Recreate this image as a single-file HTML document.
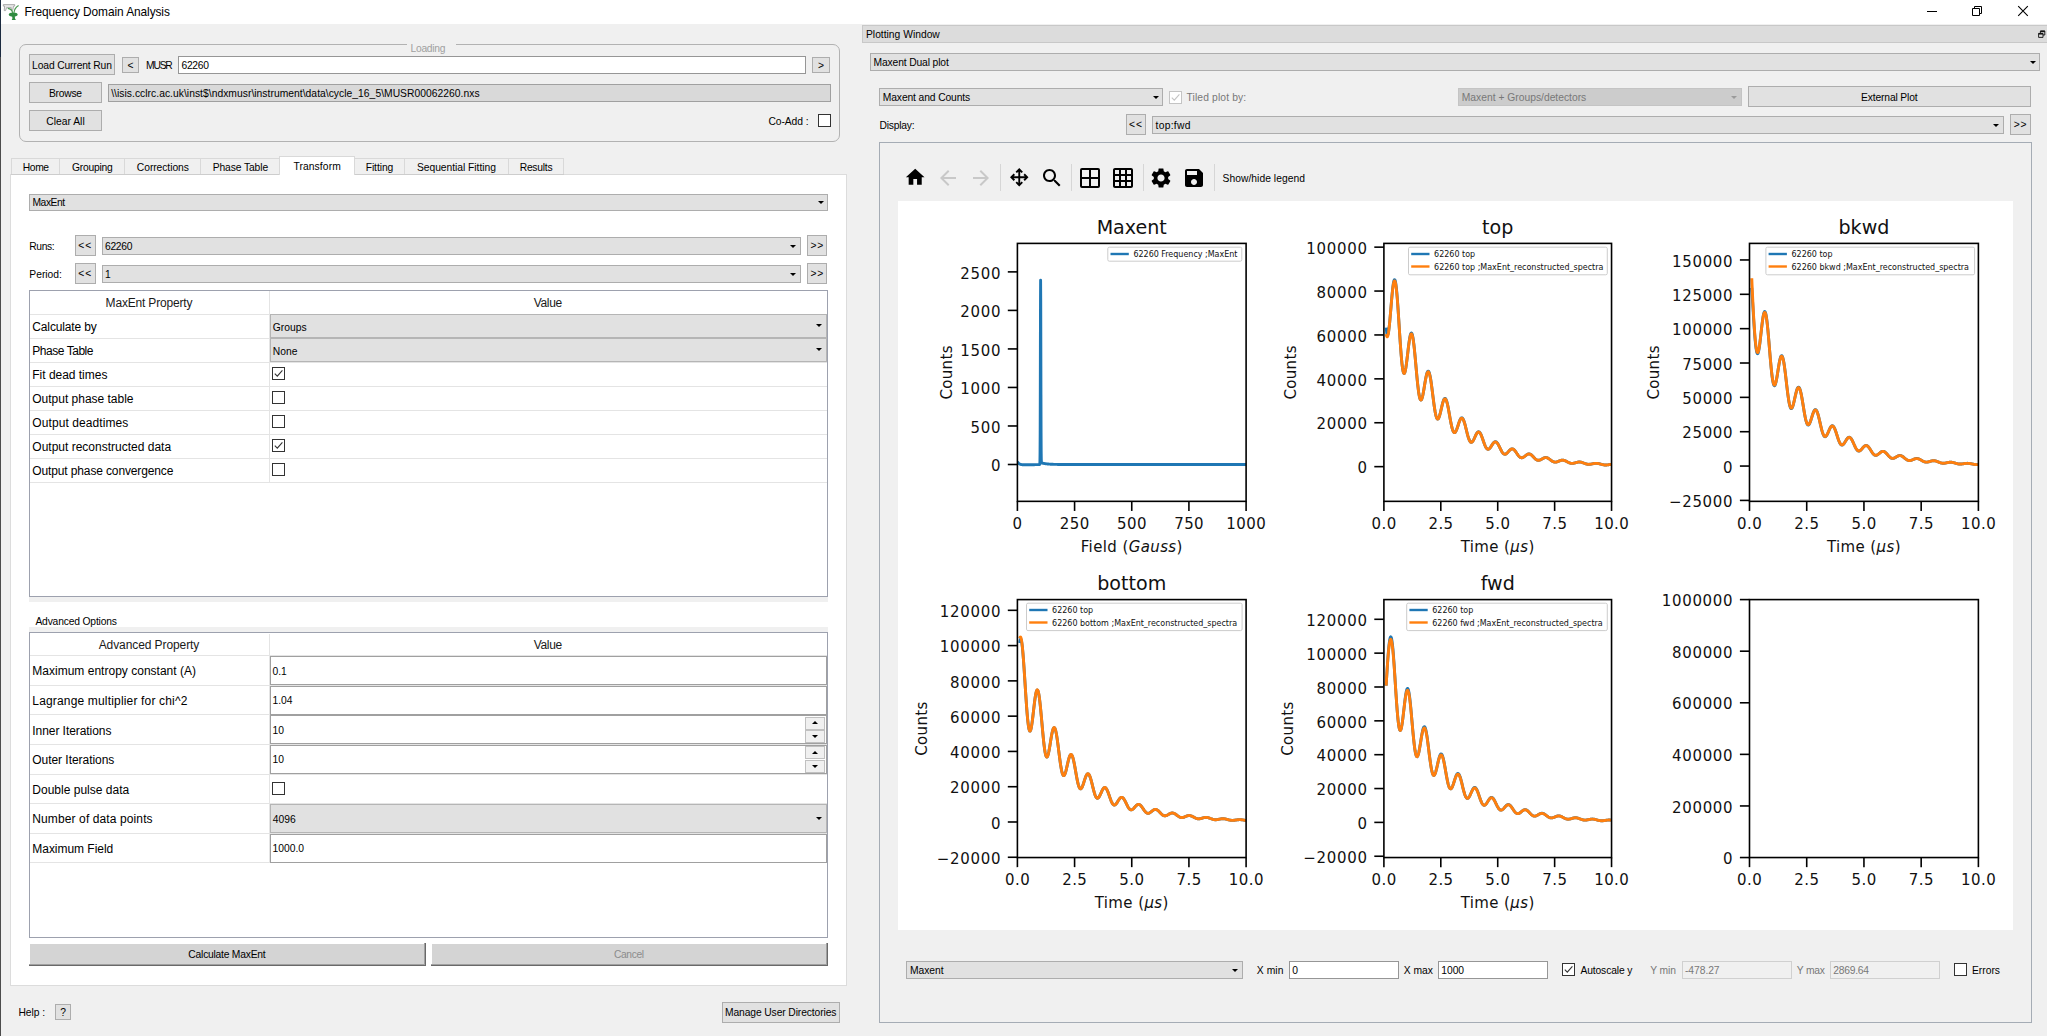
<!DOCTYPE html>
<html><head><meta charset="utf-8"><title>Frequency Domain Analysis</title><style>
html,body{margin:0;padding:0;}
body{width:2047px;height:1036px;background:#f0f0f0;position:relative;overflow:hidden;font-family:"Liberation Sans", sans-serif;font-size:10.3px;}
.b{position:absolute;box-sizing:border-box;display:block;}
.t{position:absolute;white-space:pre;}
svg text{font-family:"DejaVu Sans", sans-serif;}
</style></head>
<body>
<div class="b" style="left:0.00px;top:0.00px;width:2047.00px;height:24.00px;background:#fff;"></div>
<div class="t" style="top:2.00px;height:20px;line-height:20px;font-size:11.9px;color:#000;left:24.40px;letter-spacing:-0.079px;">Frequency Domain Analysis</div>
<svg class="b" style="left:0;top:0" width="24" height="24" viewBox="0 0 24 24">
<path d="M3.3 4.6H14.7V6.1H13.6L12.7 10.3H11.2V7.6H6.6L5.6 10.6H4.2L4.6 6.1H3.3Z" fill="#e6e6e6" stroke="#9c9c9c" stroke-width="0.8"/>
<path d="M14 12.8C14.2 9.4 15.8 7 18.6 5.4" stroke="#4c9a52" stroke-width="1.2" fill="none"/>
<path d="M12.7 12.8C12.2 10.4 10.4 8.8 7.8 8.4" stroke="#4c9a52" stroke-width="1.2" fill="none"/>
<ellipse cx="13.2" cy="14.6" rx="4.4" ry="2.1" fill="#2f8c40"/>
<path d="M12.1 15H14.7L15 18.6L15.9 20.1H11.7L12.4 18.6Z" fill="#2f8c40"/>
</svg>
<svg class="b" style="left:1920px;top:0" width="127" height="24" viewBox="0 0 127 24" fill="none" stroke="#000" stroke-width="1"><path d="M7 11.5H17"/><path d="M52.5 8.5H59.5V15.5H52.5Z"/><path d="M54.5 8.5V6.5H61.5V13.5H59.5"/><path d="M98.2 6.2L107.8 15.8M107.8 6.2L98.2 15.8" stroke-width="1.1"/></svg>
<div class="b" style="left:0.00px;top:0.00px;width:1.00px;height:57.00px;background:#1b2a3f;"></div>
<div class="b" style="left:0.00px;top:57.00px;width:1.00px;height:979.00px;background:#4c4c4c;"></div>
<div class="b" style="left:18.50px;top:44.00px;width:821.50px;height:97.50px;border:1px solid #b2b2b2;border-radius:7px;"></div>
<div class="b" style="left:406.60px;top:40.00px;width:49.00px;height:12.00px;background:#f0f0f0;"></div>
<div class="t" style="top:39.20px;height:20px;line-height:20px;font-size:10.3px;color:#a0a0a0;left:127.85px;width:600px;text-align:center;letter-spacing:-0.293px;">Loading</div>
<div class="b" style="left:29.00px;top:54.00px;width:86.00px;height:21.00px;background:#e1e1e1;border:1px solid #adadad;"></div>
<div class="t" style="top:56.20px;height:20px;line-height:20px;font-size:10.3px;color:#000;left:-228.07px;width:600px;text-align:center;letter-spacing:-0.138px;">Load Current Run</div>
<div class="b" style="left:122.00px;top:57.00px;width:17.00px;height:16.00px;background:#e1e1e1;border:1px solid #adadad;"></div>
<div class="t" style="top:55.90px;height:20px;line-height:20px;font-size:10.3px;color:#000;left:-169.50px;width:600px;text-align:center;">&lt;</div>
<div class="t" style="top:55.90px;height:20px;line-height:20px;font-size:10.3px;color:#000;left:146.00px;letter-spacing:-1.176px;">MUSR</div>
<div class="b" style="left:178.00px;top:56.00px;width:627.60px;height:18.00px;background:#fff;border:1px solid #969696;"></div>
<div class="t" style="top:55.90px;height:20px;line-height:20px;font-size:10.3px;color:#000;left:181.50px;letter-spacing:-0.310px;">62260</div>
<div class="b" style="left:812.00px;top:57.00px;width:18.00px;height:16.00px;background:#e1e1e1;border:1px solid #adadad;"></div>
<div class="t" style="top:55.90px;height:20px;line-height:20px;font-size:10.3px;color:#000;left:521.00px;width:600px;text-align:center;">&gt;</div>
<div class="b" style="left:29.00px;top:82.00px;width:73.00px;height:21.00px;background:#e1e1e1;border:1px solid #adadad;"></div>
<div class="t" style="top:84.20px;height:20px;line-height:20px;font-size:10.3px;color:#000;left:-234.62px;width:600px;text-align:center;letter-spacing:-0.249px;">Browse</div>
<div class="b" style="left:108.00px;top:84.00px;width:722.60px;height:18.00px;background:#d9d9d9;border:1px solid #a0a0a0;"></div>
<div class="t" style="top:83.90px;height:20px;line-height:20px;font-size:10.3px;color:#000;left:111.20px;letter-spacing:0.036px;">\\isis.cclrc.ac.uk\inst$\ndxmusr\instrument\data\cycle_16_5\MUSR00062260.nxs</div>
<div class="b" style="left:29.00px;top:110.00px;width:73.00px;height:21.00px;background:#e1e1e1;border:1px solid #adadad;"></div>
<div class="t" style="top:112.20px;height:20px;line-height:20px;font-size:10.3px;color:#000;left:-234.50px;width:600px;text-align:center;letter-spacing:0.006px;">Clear All</div>
<div class="t" style="top:111.90px;height:20px;line-height:20px;font-size:10.3px;color:#000;left:208.50px;width:600px;text-align:right;letter-spacing:-0.064px;">Co-Add :</div>
<div class="b" style="left:818.00px;top:114.00px;width:13.00px;height:13.00px;background:#fff;border:1px solid #333;"></div>
<div class="b" style="left:10.00px;top:174.00px;width:837.00px;height:811.50px;background:#fff;border:1px solid #dcdcdc;"></div>
<div class="b" style="left:11.40px;top:158.00px;width:49.00px;height:17.00px;background:#f0f0f0;border:1px solid #d9d9d9;"></div>
<div class="t" style="top:157.50px;height:20px;line-height:20px;font-size:10.3px;color:#000;left:-264.30px;width:600px;text-align:center;letter-spacing:-0.391px;">Home</div>
<div class="b" style="left:59.40px;top:158.00px;width:66.00px;height:17.00px;background:#f0f0f0;border:1px solid #d9d9d9;"></div>
<div class="t" style="top:157.50px;height:20px;line-height:20px;font-size:10.3px;color:#000;left:-207.71px;width:600px;text-align:center;letter-spacing:-0.224px;">Grouping</div>
<div class="b" style="left:124.40px;top:158.00px;width:76.90px;height:17.00px;background:#f0f0f0;border:1px solid #d9d9d9;"></div>
<div class="t" style="top:157.50px;height:20px;line-height:20px;font-size:10.3px;color:#000;left:-137.18px;width:600px;text-align:center;letter-spacing:-0.066px;">Corrections</div>
<div class="b" style="left:200.30px;top:158.00px;width:80.30px;height:17.00px;background:#f0f0f0;border:1px solid #d9d9d9;"></div>
<div class="t" style="top:157.50px;height:20px;line-height:20px;font-size:10.3px;color:#000;left:-59.61px;width:600px;text-align:center;letter-spacing:-0.110px;">Phase Table</div>
<div class="b" style="left:354.40px;top:158.00px;width:50.20px;height:17.00px;background:#f0f0f0;border:1px solid #d9d9d9;"></div>
<div class="t" style="top:157.50px;height:20px;line-height:20px;font-size:10.3px;color:#000;left:79.46px;width:600px;text-align:center;letter-spacing:-0.074px;">Fitting</div>
<div class="b" style="left:403.60px;top:158.00px;width:105.70px;height:17.00px;background:#f0f0f0;border:1px solid #d9d9d9;"></div>
<div class="t" style="top:157.50px;height:20px;line-height:20px;font-size:10.3px;color:#000;left:156.43px;width:600px;text-align:center;letter-spacing:-0.034px;">Sequential Fitting</div>
<div class="b" style="left:508.30px;top:158.00px;width:55.70px;height:17.00px;background:#f0f0f0;border:1px solid #d9d9d9;"></div>
<div class="t" style="top:157.50px;height:20px;line-height:20px;font-size:10.3px;color:#000;left:236.03px;width:600px;text-align:center;letter-spacing:-0.241px;">Results</div>
<div class="b" style="left:11.00px;top:174.00px;width:268.00px;height:1.00px;background:#cdcdcd;"></div>
<div class="b" style="left:355.00px;top:174.00px;width:209.00px;height:1.00px;background:#cdcdcd;"></div>
<div class="b" style="left:279.00px;top:156.00px;width:76.00px;height:19.00px;background:#fff;border:1px solid #d9d9d9;border-bottom:none;"></div>
<div class="t" style="top:156.50px;height:20px;line-height:20px;font-size:10.3px;color:#000;left:17.15px;width:600px;text-align:center;letter-spacing:0.107px;">Transform</div>
<div class="b" style="left:29.00px;top:194.00px;width:799.00px;height:17.00px;background:#e1e1e1;border:1px solid #adadad;"></div>
<div class="t" style="top:193.40px;height:20px;line-height:20px;font-size:10.3px;color:#000;left:32.50px;letter-spacing:-0.463px;">MaxEnt</div>
<svg class="b" style="left:817.50px;top:201.30px" width="6" height="3" viewBox="0 0 6 3"><path d="M0 0H6L3.0 3Z" fill="#000"/></svg>
<div class="t" style="top:236.90px;height:20px;line-height:20px;font-size:10.3px;color:#000;left:29.30px;letter-spacing:-0.376px;">Runs:</div>
<div class="b" style="left:75.00px;top:235.00px;width:20.50px;height:21.00px;background:#e1e1e1;border:1px solid #adadad;"></div>
<div class="t" style="top:236.40px;height:20px;line-height:20px;font-size:10.3px;color:#000;left:-214.75px;width:600px;text-align:center;letter-spacing:0.9px;">&lt;&lt;</div>
<div class="b" style="left:101.50px;top:237.00px;width:699.50px;height:17.50px;background:#e1e1e1;border:1px solid #adadad;"></div>
<div class="t" style="top:236.65px;height:20px;line-height:20px;font-size:10.3px;color:#000;left:105.00px;letter-spacing:-0.310px;">62260</div>
<svg class="b" style="left:790.40px;top:244.55px" width="6" height="3" viewBox="0 0 6 3"><path d="M0 0H6L3.0 3Z" fill="#000"/></svg>
<div class="b" style="left:807.30px;top:235.00px;width:20.10px;height:21.00px;background:#e1e1e1;border:1px solid #adadad;"></div>
<div class="t" style="top:236.40px;height:20px;line-height:20px;font-size:10.3px;color:#000;left:517.35px;width:600px;text-align:center;letter-spacing:0.9px;">&gt;&gt;</div>
<div class="t" style="top:264.90px;height:20px;line-height:20px;font-size:10.3px;color:#000;left:29.30px;">Period:</div>
<div class="b" style="left:75.00px;top:263.00px;width:20.50px;height:21.00px;background:#e1e1e1;border:1px solid #adadad;"></div>
<div class="t" style="top:264.40px;height:20px;line-height:20px;font-size:10.3px;color:#000;left:-214.75px;width:600px;text-align:center;letter-spacing:0.9px;">&lt;&lt;</div>
<div class="b" style="left:101.50px;top:265.00px;width:699.50px;height:17.50px;background:#e1e1e1;border:1px solid #adadad;"></div>
<div class="t" style="top:264.65px;height:20px;line-height:20px;font-size:10.3px;color:#000;left:105.00px;">1</div>
<svg class="b" style="left:790.40px;top:272.55px" width="6" height="3" viewBox="0 0 6 3"><path d="M0 0H6L3.0 3Z" fill="#000"/></svg>
<div class="b" style="left:807.30px;top:263.00px;width:20.10px;height:21.00px;background:#e1e1e1;border:1px solid #adadad;"></div>
<div class="t" style="top:264.40px;height:20px;line-height:20px;font-size:10.3px;color:#000;left:517.35px;width:600px;text-align:center;letter-spacing:0.9px;">&gt;&gt;</div>
<div class="b" style="left:29.00px;top:290.00px;width:799.00px;height:307.00px;background:#fff;border:1px solid #9da1ae;"></div>
<div class="t" style="top:293.20px;height:20px;line-height:20px;font-size:12px;color:#1a1a1a;left:-151.09px;width:600px;text-align:center;letter-spacing:-0.183px;">MaxEnt Property</div>
<div class="t" style="top:293.20px;height:20px;line-height:20px;font-size:12px;color:#1a1a1a;left:247.85px;width:600px;text-align:center;letter-spacing:-0.300px;">Value</div>
<div class="b" style="left:30.00px;top:313.50px;width:797.00px;height:1.00px;background:#e4e4e4;"></div>
<div class="b" style="left:30.00px;top:337.50px;width:797.00px;height:1.00px;background:#e4e4e4;"></div>
<div class="b" style="left:30.00px;top:361.50px;width:797.00px;height:1.00px;background:#e4e4e4;"></div>
<div class="b" style="left:30.00px;top:385.50px;width:797.00px;height:1.00px;background:#e4e4e4;"></div>
<div class="b" style="left:30.00px;top:409.50px;width:797.00px;height:1.00px;background:#e4e4e4;"></div>
<div class="b" style="left:30.00px;top:433.50px;width:797.00px;height:1.00px;background:#e4e4e4;"></div>
<div class="b" style="left:30.00px;top:457.50px;width:797.00px;height:1.00px;background:#e4e4e4;"></div>
<div class="b" style="left:30.00px;top:481.50px;width:797.00px;height:1.00px;background:#e4e4e4;"></div>
<div class="b" style="left:268.80px;top:291.00px;width:1.00px;height:191.00px;background:#e4e4e4;"></div>
<div class="t" style="top:316.70px;height:20px;line-height:20px;font-size:12px;color:#000;left:32.30px;letter-spacing:-0.139px;">Calculate by</div>
<div class="t" style="top:340.70px;height:20px;line-height:20px;font-size:12px;color:#000;left:32.30px;letter-spacing:-0.463px;">Phase Table</div>
<div class="t" style="top:364.70px;height:20px;line-height:20px;font-size:12px;color:#000;left:32.30px;letter-spacing:-0.020px;">Fit dead times</div>
<div class="t" style="top:388.70px;height:20px;line-height:20px;font-size:12px;color:#000;left:32.30px;letter-spacing:-0.012px;">Output phase table</div>
<div class="t" style="top:412.70px;height:20px;line-height:20px;font-size:12px;color:#000;left:32.30px;letter-spacing:0.079px;">Output deadtimes</div>
<div class="t" style="top:436.70px;height:20px;line-height:20px;font-size:12px;color:#000;left:32.30px;letter-spacing:0.003px;">Output reconstructed data</div>
<div class="t" style="top:460.70px;height:20px;line-height:20px;font-size:12px;color:#000;left:32.30px;letter-spacing:-0.130px;">Output phase convergence</div>
<div class="b" style="left:270.00px;top:314.00px;width:557.00px;height:24.00px;background:#e1e1e1;border:1px solid #b5b5b5;"></div>
<div class="t" style="top:317.50px;height:20px;line-height:20px;font-size:10.3px;color:#000;left:272.80px;">Groups</div>
<svg class="b" style="left:815.80px;top:324.00px" width="6" height="3" viewBox="0 0 6 3"><path d="M0 0H6L3.0 3Z" fill="#000"/></svg>
<div class="b" style="left:270.00px;top:338.00px;width:557.00px;height:24.00px;background:#e1e1e1;border:1px solid #b5b5b5;"></div>
<div class="t" style="top:341.50px;height:20px;line-height:20px;font-size:10.3px;color:#000;left:272.80px;">None</div>
<svg class="b" style="left:815.80px;top:348.00px" width="6" height="3" viewBox="0 0 6 3"><path d="M0 0H6L3.0 3Z" fill="#000"/></svg>
<div class="b" style="left:272.00px;top:367.30px;width:13.00px;height:13.00px;background:#fff;border:1px solid #333;"></div>
<svg class="b" style="left:272.00px;top:367.30px" width="13" height="13" viewBox="0 0 13 13"><path d="M2.8 6.6L5.3 9.2L10.4 3.4" fill="none" stroke="#333" stroke-width="1.1"/></svg>
<div class="b" style="left:272.00px;top:391.30px;width:13.00px;height:13.00px;background:#fff;border:1px solid #333;"></div>
<div class="b" style="left:272.00px;top:415.30px;width:13.00px;height:13.00px;background:#fff;border:1px solid #333;"></div>
<div class="b" style="left:272.00px;top:439.30px;width:13.00px;height:13.00px;background:#fff;border:1px solid #333;"></div>
<svg class="b" style="left:272.00px;top:439.30px" width="13" height="13" viewBox="0 0 13 13"><path d="M2.8 6.6L5.3 9.2L10.4 3.4" fill="none" stroke="#333" stroke-width="1.1"/></svg>
<div class="b" style="left:272.00px;top:463.30px;width:13.00px;height:13.00px;background:#fff;border:1px solid #333;"></div>
<div class="b" style="left:29.00px;top:597.00px;width:799.00px;height:5.00px;background:#f0f0f0;"></div>
<div class="b" style="left:29.00px;top:627.00px;width:799.00px;height:5.00px;background:#f0f0f0;"></div>
<div class="t" style="top:612.20px;height:20px;line-height:20px;font-size:10.3px;color:#000;left:35.40px;letter-spacing:-0.171px;">Advanced Options</div>
<div class="b" style="left:29.00px;top:632.00px;width:799.00px;height:306.00px;background:#fff;border:1px solid #9da1ae;"></div>
<div class="t" style="top:635.20px;height:20px;line-height:20px;font-size:12px;color:#1a1a1a;left:-151.04px;width:600px;text-align:center;letter-spacing:-0.085px;">Advanced Property</div>
<div class="t" style="top:635.20px;height:20px;line-height:20px;font-size:12px;color:#1a1a1a;left:247.85px;width:600px;text-align:center;letter-spacing:-0.300px;">Value</div>
<div class="b" style="left:30.00px;top:655.10px;width:797.00px;height:1.00px;background:#e4e4e4;"></div>
<div class="b" style="left:30.00px;top:684.70px;width:797.00px;height:1.00px;background:#e4e4e4;"></div>
<div class="b" style="left:30.00px;top:714.30px;width:797.00px;height:1.00px;background:#e4e4e4;"></div>
<div class="b" style="left:30.00px;top:743.90px;width:797.00px;height:1.00px;background:#e4e4e4;"></div>
<div class="b" style="left:30.00px;top:773.50px;width:797.00px;height:1.00px;background:#e4e4e4;"></div>
<div class="b" style="left:30.00px;top:803.10px;width:797.00px;height:1.00px;background:#e4e4e4;"></div>
<div class="b" style="left:30.00px;top:832.70px;width:797.00px;height:1.00px;background:#e4e4e4;"></div>
<div class="b" style="left:30.00px;top:862.30px;width:797.00px;height:1.00px;background:#e4e4e4;"></div>
<div class="b" style="left:268.80px;top:633.50px;width:1.00px;height:229.30px;background:#e4e4e4;"></div>
<div class="t" style="top:661.40px;height:20px;line-height:20px;font-size:12px;color:#000;left:32.30px;letter-spacing:0.012px;">Maximum entropy constant (A)</div>
<div class="b" style="left:270.00px;top:656.10px;width:557.00px;height:29.10px;background:#fff;border:1px solid #a0a0a0;"></div>
<div class="t" style="top:661.55px;height:20px;line-height:20px;font-size:10.3px;color:#000;left:272.50px;">0.1</div>
<div class="t" style="top:691.00px;height:20px;line-height:20px;font-size:12px;color:#000;left:32.30px;letter-spacing:0.169px;">Lagrange multiplier for chi^2</div>
<div class="b" style="left:270.00px;top:685.70px;width:557.00px;height:29.10px;background:#fff;border:1px solid #a0a0a0;"></div>
<div class="t" style="top:691.15px;height:20px;line-height:20px;font-size:10.3px;color:#000;left:272.50px;">1.04</div>
<div class="t" style="top:720.60px;height:20px;line-height:20px;font-size:12px;color:#000;left:32.30px;letter-spacing:-0.063px;">Inner Iterations</div>
<div class="b" style="left:270.00px;top:715.30px;width:557.00px;height:29.10px;background:#fff;border:1px solid #a0a0a0;"></div>
<div class="t" style="top:720.75px;height:20px;line-height:20px;font-size:10.3px;color:#000;left:272.50px;">10</div>
<div class="b" style="left:805.20px;top:716.80px;width:19.50px;height:13.10px;background:#f0f0f0;border:1px solid #c0c0c0;"></div>
<div class="b" style="left:805.20px;top:729.90px;width:19.50px;height:13.00px;background:#f0f0f0;border:1px solid #c0c0c0;"></div>
<svg class="b" style="left:812px;top:721.10px" width="6" height="3" viewBox="0 0 6 3"><path d="M0 3H6L3 0Z" fill="#000"/></svg>
<svg class="b" style="left:812.00px;top:735.30px" width="6" height="3" viewBox="0 0 6 3"><path d="M0 0H6L3.0 3Z" fill="#000"/></svg>
<div class="t" style="top:750.20px;height:20px;line-height:20px;font-size:12px;color:#000;left:32.30px;letter-spacing:-0.047px;">Outer Iterations</div>
<div class="b" style="left:270.00px;top:744.90px;width:557.00px;height:29.10px;background:#fff;border:1px solid #a0a0a0;"></div>
<div class="t" style="top:750.35px;height:20px;line-height:20px;font-size:10.3px;color:#000;left:272.50px;">10</div>
<div class="b" style="left:805.20px;top:746.40px;width:19.50px;height:13.10px;background:#f0f0f0;border:1px solid #c0c0c0;"></div>
<div class="b" style="left:805.20px;top:759.50px;width:19.50px;height:13.00px;background:#f0f0f0;border:1px solid #c0c0c0;"></div>
<svg class="b" style="left:812px;top:750.70px" width="6" height="3" viewBox="0 0 6 3"><path d="M0 3H6L3 0Z" fill="#000"/></svg>
<svg class="b" style="left:812.00px;top:764.90px" width="6" height="3" viewBox="0 0 6 3"><path d="M0 0H6L3.0 3Z" fill="#000"/></svg>
<div class="t" style="top:779.80px;height:20px;line-height:20px;font-size:12px;color:#000;left:32.30px;letter-spacing:0.011px;">Double pulse data</div>
<div class="b" style="left:272.00px;top:782.30px;width:13.00px;height:13.00px;background:#fff;border:1px solid #333;"></div>
<div class="t" style="top:809.40px;height:20px;line-height:20px;font-size:12px;color:#000;left:32.30px;letter-spacing:0.112px;">Number of data points</div>
<div class="b" style="left:270.00px;top:804.10px;width:557.00px;height:29.10px;background:#e1e1e1;border:1px solid #b5b5b5;"></div>
<div class="t" style="top:809.55px;height:20px;line-height:20px;font-size:10.3px;color:#000;left:272.80px;">4096</div>
<svg class="b" style="left:815.80px;top:817.45px" width="6" height="3" viewBox="0 0 6 3"><path d="M0 0H6L3.0 3Z" fill="#000"/></svg>
<div class="t" style="top:839.00px;height:20px;line-height:20px;font-size:12px;color:#000;left:32.30px;letter-spacing:-0.037px;">Maximum Field</div>
<div class="b" style="left:270.00px;top:833.70px;width:557.00px;height:29.10px;background:#fff;border:1px solid #a0a0a0;"></div>
<div class="t" style="top:839.15px;height:20px;line-height:20px;font-size:10.3px;color:#000;left:272.50px;">1000.0</div>
<div class="b" style="left:29.00px;top:943.00px;width:397.00px;height:23.00px;background:#d4d4d4;box-shadow:inset -1px -1px 0 #696969,inset -2px -2px 0 #a0a0a0,inset 1px 1px 0 #fff;"></div>
<div class="t" style="top:945.40px;height:20px;line-height:20px;font-size:10.3px;color:#000;left:-73.11px;width:600px;text-align:center;letter-spacing:-0.228px;">Calculate MaxEnt</div>
<div class="b" style="left:431.00px;top:943.00px;width:397.00px;height:23.00px;background:#d4d4d4;box-shadow:inset -1px -1px 0 #696969,inset -2px -2px 0 #a0a0a0,inset 1px 1px 0 #fff;"></div>
<div class="t" style="top:945.40px;height:20px;line-height:20px;font-size:10.3px;color:#8c8c8c;left:328.80px;width:600px;text-align:center;letter-spacing:-0.392px;">Cancel</div>
<div class="t" style="top:1003.20px;height:20px;line-height:20px;font-size:10.3px;color:#000;left:18.50px;letter-spacing:-0.081px;">Help :</div>
<div class="b" style="left:55.00px;top:1004.00px;width:16.00px;height:16.00px;background:#e1e1e1;border:1px solid #adadad;"></div>
<div class="t" style="top:1002.90px;height:20px;line-height:20px;font-size:10.3px;color:#000;left:-237.00px;width:600px;text-align:center;">?</div>
<div class="b" style="left:721.80px;top:1002.00px;width:117.80px;height:20.50px;background:#e1e1e1;border:1px solid #adadad;"></div>
<div class="t" style="top:1003.15px;height:20px;line-height:20px;font-size:10.3px;color:#000;left:480.65px;width:600px;text-align:center;letter-spacing:-0.109px;">Manage User Directories</div>
<div class="b" style="left:862.00px;top:24.80px;width:1186.00px;height:17.80px;background:#dcdcdc;border:1px solid #c8c8c8;"></div>
<div class="t" style="top:25.40px;height:20px;line-height:20px;font-size:10.3px;color:#000;left:866.00px;letter-spacing:-0.003px;">Plotting Window</div>
<svg class="b" style="left:2037px;top:29px" width="10" height="10" viewBox="2037 29 10 10" fill="none" stroke="#111" stroke-width="0.9"><path d="M2040.4 31H2044.8V35H2040.4Z"/><path d="M2040.4 31.4H2044.8" stroke-width="1.5"/><path d="M2038.6 33.4H2043V37.4H2038.6Z" fill="#dcdcdc"/><path d="M2038.6 33.8H2043" stroke-width="1.5"/></svg>
<div class="b" style="left:870.00px;top:53.00px;width:1170.00px;height:18.00px;background:#e1e1e1;border:1px solid #adadad;"></div>
<div class="t" style="top:52.90px;height:20px;line-height:20px;font-size:10.3px;color:#000;left:873.50px;letter-spacing:-0.132px;">Maxent Dual plot</div>
<svg class="b" style="left:2029.70px;top:60.80px" width="6" height="3" viewBox="0 0 6 3"><path d="M0 0H6L3.0 3Z" fill="#000"/></svg>
<div class="b" style="left:879.30px;top:88.20px;width:284.10px;height:17.50px;background:#e1e1e1;border:1px solid #adadad;"></div>
<div class="t" style="top:87.85px;height:20px;line-height:20px;font-size:10.3px;color:#000;left:882.80px;letter-spacing:-0.120px;">Maxent and Counts</div>
<svg class="b" style="left:1152.70px;top:95.75px" width="6" height="3" viewBox="0 0 6 3"><path d="M0 0H6L3.0 3Z" fill="#000"/></svg>
<div class="b" style="left:1169.20px;top:91.00px;width:13.00px;height:13.00px;background:#fff;border:1px solid #c4c4c4;"></div>
<svg class="b" style="left:1169.20px;top:91.00px" width="13" height="13" viewBox="0 0 13 13"><path d="M2.8 6.6L5.3 9.2L10.4 3.4" fill="none" stroke="#c4c4c4" stroke-width="1.1"/></svg>
<div class="t" style="top:88.20px;height:20px;line-height:20px;font-size:10.3px;color:#787878;left:1186.50px;letter-spacing:0.130px;">Tiled plot by:</div>
<div class="b" style="left:1458.30px;top:88.00px;width:283.50px;height:17.70px;background:#cccccc;border:1px solid #c4c4c4;"></div>
<div class="t" style="top:87.75px;height:20px;line-height:20px;font-size:10.3px;color:#787878;left:1461.80px;letter-spacing:-0.001px;">Maxent + Groups/detectors</div>
<svg class="b" style="left:1731.00px;top:95.65px" width="6" height="3" viewBox="0 0 6 3"><path d="M0 0H6L3.0 3Z" fill="#9a9a9a"/></svg>
<div class="b" style="left:1748.00px;top:86.30px;width:282.70px;height:20.90px;background:#e1e1e1;border:1px solid #adadad;"></div>
<div class="t" style="top:87.65px;height:20px;line-height:20px;font-size:10.3px;color:#000;left:1589.28px;width:600px;text-align:center;letter-spacing:-0.141px;">External Plot</div>
<div class="t" style="top:115.90px;height:20px;line-height:20px;font-size:10.3px;color:#000;left:879.50px;letter-spacing:-0.219px;">Display:</div>
<div class="b" style="left:1126.00px;top:114.00px;width:20.00px;height:21.00px;background:#e1e1e1;border:1px solid #adadad;"></div>
<div class="t" style="top:115.40px;height:20px;line-height:20px;font-size:10.3px;color:#000;left:836.00px;width:600px;text-align:center;letter-spacing:0.9px;">&lt;&lt;</div>
<div class="b" style="left:1152.00px;top:116.20px;width:851.90px;height:17.40px;background:#e1e1e1;border:1px solid #adadad;"></div>
<div class="t" style="top:115.80px;height:20px;line-height:20px;font-size:10.3px;color:#000;left:1155.50px;letter-spacing:0.282px;">top:fwd</div>
<svg class="b" style="left:1993.00px;top:123.70px" width="6" height="3" viewBox="0 0 6 3"><path d="M0 0H6L3.0 3Z" fill="#000"/></svg>
<div class="b" style="left:2010.40px;top:114.00px;width:20.30px;height:21.00px;background:#e1e1e1;border:1px solid #adadad;"></div>
<div class="t" style="top:115.40px;height:20px;line-height:20px;font-size:10.3px;color:#000;left:1720.55px;width:600px;text-align:center;letter-spacing:0.9px;">&gt;&gt;</div>
<div class="b" style="left:879.00px;top:141.50px;width:1152.80px;height:881.80px;background:#f0f0f0;border:1px solid #a5acb5;"></div>
<div class="b" style="left:897.70px;top:200.80px;width:1115.10px;height:729.40px;background:#fff;"></div>
<svg class="b" style="left:903.60px;top:165.80px" width="22.4" height="22.4" viewBox="0 0 24 24"><path d="M10 20v-6h4v6h5v-8h3L12 3 2 12h3v8z" fill="#000"/></svg>
<svg class="b" style="left:936.00px;top:165.50px" width="24" height="24" viewBox="0 0 24 24"><path d="M20 11H7.83l5.59-5.59L12 4l-8 8 8 8 1.41-1.41L7.83 13H20v-2z" fill="#c8c8c8"/></svg>
<svg class="b" style="left:968.50px;top:165.50px" width="24" height="24" viewBox="0 0 24 24"><path d="M12 4l-1.41 1.41L16.17 11H4v2h12.17l-5.58 5.59L12 20l8-8z" fill="#c8c8c8"/></svg>
<svg class="b" style="left:1007.75px;top:166.25px" width="22.5" height="22.5" viewBox="0 0 24 24"><path d="M13,11H18L16.5,9.5L17.92,8.08L21.84,12L17.92,15.92L16.5,14.5L18,13H13V18L14.5,16.5L15.92,17.92L12,21.84L8.08,17.92L9.5,16.5L11,18V13H6L7.5,14.5L6.08,15.92L2.16,12L6.08,8.08L7.5,9.5L6,11H11V6L9.5,7.5L8.08,6.08L12,2.16L15.92,6.08L14.5,7.5L13,6V11Z" fill="#000"/></svg>
<svg class="b" style="left:1039.50px;top:165.50px" width="24" height="24" viewBox="0 0 24 24"><path d="M15.5 14h-.79l-.28-.27C15.41 12.590 16 11.110 16 9.500 16 5.910 13.090 3 9.500 3S3 5.910 3 9.500 5.910 16 9.500 16c1.610 0 3.090-.59 4.230-1.570l.27.28v.79l5 4.990L20.490 19l-4.990-5zm-6 0C7.010 14 5 11.990 5 9.500S7.010 5 9.500 5 14 7.010 14 9.500 11.990 14 9.500 14z" fill="#000"/></svg>
<svg class="b" style="left:1078.00px;top:165.50px" width="24" height="24" viewBox="0 0 24 24"><path fill-rule="evenodd" d="M4 2h16a2 2 0 0 1 2 2v16a2 2 0 0 1-2 2H4a2 2 0 0 1-2-2V4a2 2 0 0 1 2-2z M4 4v7h7V4z M13 4v7h7V4z M4 13v7h7v-7z M13 13v7h7v-7z" fill="#000"/></svg>
<svg class="b" style="left:1111.00px;top:165.50px" width="24" height="24" viewBox="0 0 24 24"><path d="M20 2H4c-1.100 0-2 .9-2 2v16c0 1.100.9 2 2 2h16c1.100 0 2-.9 2-2V4c0-1.100-.9-2-2-2zM8 20H4v-4h4v4zm0-6H4v-4h4v4zm0-6H4V4h4v4zm6 12h-4v-4h4v4zm0-6h-4v-4h4v4zm0-6h-4V4h4v4zm6 12h-4v-4h4v4zm0-6h-4v-4h4v4zm0-6h-4V4h4v4z" fill="#000"/></svg>
<svg class="b" style="left:1149.00px;top:165.50px" width="24" height="24" viewBox="0 0 24 24"><path d="M19.140 12.940c.04-.3.060-.61.060-.94 0-.32-.02-.64-.07-.94l2.030-1.580c.18-.14.230-.41.120-.61l-1.920-3.320c-.12-.22-.37-.29-.59-.22l-2.390.96c-.5-.38-1.030-.7-1.620-.94l-.36-2.540c-.04-.24-.24-.41-.48-.41h-3.840c-.24 0-.43.17-.47.41l-.36 2.540c-.59.24-1.130.57-1.620.94l-2.390-.96c-.22-.08-.47 0-.59.220L2.740 8.870c-.12.210-.08.470.12.610l2.030 1.580c-.05.3-.09.63-.09.940s.02.640.07.940l-2.030 1.580c-.18.140-.23.410-.12.610l1.920 3.320c.12.220.37.290.59.220l2.390-.96c.5.380 1.030.7 1.620.94l.36 2.540c.05.240.24.410.48.410h3.840c.24 0 .44-.17.470-.41l.36-2.540c.59-.24 1.130-.56 1.620-.94l2.390.96c.22.080.47 0 .59-.22l1.920-3.320c.12-.22.070-.47-.12-.61l-2.010-1.580zM12 15.600c-1.980 0-3.600-1.620-3.600-3.600s1.620-3.600 3.600-3.600 3.600 1.620 3.600 3.600-1.620 3.600-3.600 3.600z" fill="#000"/></svg>
<svg class="b" style="left:1182.00px;top:165.50px" width="24" height="24" viewBox="0 0 24 24"><path d="M17 3H5c-1.110 0-2 .9-2 2v14c0 1.100.89 2 2 2h14c1.100 0 2-.9 2-2V7l-4-4zm-5 16c-1.660 0-3-1.340-3-3s1.340-3 3-3 3 1.340 3 3-1.340 3-3 3zm3-10H5V5h10v4z" fill="#000"/></svg>
<div class="b" style="left:1000.00px;top:164.00px;width:1.00px;height:27.00px;background:#d6d6d6;"></div>
<div class="b" style="left:1071.10px;top:164.00px;width:1.00px;height:27.00px;background:#d6d6d6;"></div>
<div class="b" style="left:1142.50px;top:164.00px;width:1.00px;height:27.00px;background:#d6d6d6;"></div>
<div class="b" style="left:1213.90px;top:164.00px;width:1.00px;height:27.00px;background:#d6d6d6;"></div>
<div class="t" style="top:168.90px;height:20px;line-height:20px;font-size:10.3px;color:#000;left:1222.50px;letter-spacing:0.041px;">Show/hide legend</div>
<div class="b" style="left:906.40px;top:961.20px;width:336.60px;height:17.60px;background:#e1e1e1;border:1px solid #adadad;"></div>
<div class="t" style="top:960.90px;height:20px;line-height:20px;font-size:10.3px;color:#000;left:909.90px;">Maxent</div>
<svg class="b" style="left:1232.00px;top:968.80px" width="6" height="3" viewBox="0 0 6 3"><path d="M0 0H6L3.0 3Z" fill="#000"/></svg>
<div class="t" style="top:961.40px;height:20px;line-height:20px;font-size:10.3px;color:#000;left:1256.70px;letter-spacing:0.118px;">X min</div>
<div class="b" style="left:1289.00px;top:961.20px;width:109.70px;height:17.60px;background:#fff;border:1px solid #969696;"></div>
<div class="t" style="top:960.90px;height:20px;line-height:20px;font-size:10.3px;color:#000;left:1292.20px;">0</div>
<div class="t" style="top:961.40px;height:20px;line-height:20px;font-size:10.3px;color:#000;left:1403.80px;letter-spacing:0.003px;">X max</div>
<div class="b" style="left:1438.00px;top:961.20px;width:110.00px;height:17.60px;background:#fff;border:1px solid #969696;"></div>
<div class="t" style="top:960.90px;height:20px;line-height:20px;font-size:10.3px;color:#000;left:1441.20px;">1000</div>
<div class="b" style="left:1562.30px;top:963.40px;width:13.00px;height:13.00px;background:#fff;border:1px solid #333;"></div>
<svg class="b" style="left:1562.30px;top:963.40px" width="13" height="13" viewBox="0 0 13 13"><path d="M2.8 6.6L5.3 9.2L10.4 3.4" fill="none" stroke="#333" stroke-width="1.1"/></svg>
<div class="t" style="top:961.10px;height:20px;line-height:20px;font-size:10.3px;color:#000;left:1580.40px;letter-spacing:-0.114px;">Autoscale y</div>
<div class="t" style="top:961.40px;height:20px;line-height:20px;font-size:10.3px;color:#787878;left:1650.30px;letter-spacing:-0.110px;">Y min</div>
<div class="b" style="left:1682.00px;top:961.20px;width:109.60px;height:17.60px;background:#f0f0f0;border:1px solid #d0d0d0;"></div>
<div class="t" style="top:960.90px;height:20px;line-height:20px;font-size:10.3px;color:#787878;left:1685.00px;letter-spacing:-0.055px;">-478.27</div>
<div class="t" style="top:961.40px;height:20px;line-height:20px;font-size:10.3px;color:#787878;left:1796.80px;letter-spacing:-0.201px;">Y max</div>
<div class="b" style="left:1830.20px;top:961.20px;width:110.00px;height:17.60px;background:#f0f0f0;border:1px solid #d0d0d0;"></div>
<div class="t" style="top:960.90px;height:20px;line-height:20px;font-size:10.3px;color:#787878;left:1833.20px;letter-spacing:-0.238px;">2869.64</div>
<div class="b" style="left:1954.40px;top:963.40px;width:13.00px;height:13.00px;background:#fff;border:1px solid #333;"></div>
<div class="t" style="top:961.10px;height:20px;line-height:20px;font-size:10.3px;color:#000;left:1972.00px;letter-spacing:-0.007px;">Errors</div>
<svg class="b" style="left:897.7px;top:200.8px" width="1115.10" height="729.40" viewBox="897.7 200.8 1115.10 729.40">
<clipPath id="c1"><rect x="1017.1" y="243.2" width="228.69999999999993" height="257.95"/></clipPath>
<polyline clip-path="url(#c1)" points="1017.10,461.45 1017.21,461.65 1017.33,461.85 1017.44,462.03 1017.56,462.20 1017.67,462.35 1017.79,462.50 1017.90,462.64 1018.01,462.77 1018.13,462.90 1018.24,463.01 1018.36,463.12 1018.47,463.22 1018.59,463.31 1018.70,463.40 1018.82,463.49 1018.93,463.56 1019.04,463.64 1019.16,463.71 1019.27,463.77 1019.39,463.83 1019.50,463.88 1019.62,463.94 1019.73,463.99 1019.84,464.03 1019.96,464.07 1020.07,464.11 1020.19,464.15 1020.30,464.19 1020.42,464.22 1020.53,464.25 1020.64,464.28 1020.76,464.30 1020.87,464.33 1020.99,464.35 1021.10,464.37 1021.22,464.39 1021.33,464.41 1021.45,464.43 1021.56,464.44 1021.67,464.46 1021.79,464.47 1021.90,464.48 1022.02,464.50 1022.13,464.51 1022.25,464.52 1022.36,464.52 1022.47,464.53 1022.59,464.54 1022.70,464.55 1022.82,464.55 1022.93,464.56 1023.05,464.57 1023.16,464.57 1023.27,464.57 1023.39,464.58 1023.50,464.58 1023.62,464.59 1023.73,464.59 1023.85,464.59 1023.96,464.59 1024.08,464.59 1024.19,464.60 1024.30,464.60 1024.42,464.60 1024.53,464.60 1024.65,464.60 1024.76,464.60 1024.88,464.60 1024.99,464.60 1025.10,464.60 1025.22,464.60 1025.33,464.60 1025.45,464.60 1025.56,464.60 1025.68,464.60 1025.79,464.60 1025.90,464.60 1026.02,464.60 1026.13,464.59 1026.25,464.59 1026.36,464.59 1026.48,464.59 1026.59,464.59 1026.71,464.59 1026.82,464.59 1026.93,464.59 1027.05,464.58 1027.16,464.58 1027.28,464.58 1027.39,464.58 1027.51,464.58 1027.62,464.58 1027.73,464.57 1027.85,464.57 1027.96,464.57 1028.08,464.57 1028.19,464.57 1028.31,464.57 1028.42,464.56 1028.54,464.56 1028.65,464.56 1028.76,464.56 1028.88,464.56 1028.99,464.55 1029.11,464.55 1029.22,464.55 1029.34,464.55 1029.45,464.55 1029.56,464.54 1029.68,464.54 1029.79,464.54 1029.91,464.54 1030.02,464.54 1030.14,464.54 1030.25,464.53 1030.36,464.53 1030.48,464.53 1030.59,464.53 1030.71,464.53 1030.82,464.53 1030.94,464.52 1031.05,464.52 1031.17,464.52 1031.28,464.52 1031.39,464.52 1031.51,464.51 1031.62,464.51 1031.74,464.51 1031.85,464.51 1031.97,464.51 1032.08,464.51 1032.19,464.50 1032.31,464.50 1032.42,464.50 1032.54,464.50 1032.65,464.50 1032.77,464.50 1032.88,464.49 1032.99,464.49 1033.11,464.49 1033.22,464.49 1033.34,464.49 1033.45,464.49 1033.57,464.49 1033.68,464.48 1033.80,464.48 1033.91,464.48 1034.02,464.48 1034.14,464.48 1034.25,464.48 1034.37,464.48 1034.48,464.47 1034.60,464.47 1034.71,464.47 1034.82,464.47 1034.94,464.47 1035.05,464.47 1035.17,464.47 1035.28,464.46 1035.40,464.46 1035.51,464.46 1035.62,464.46 1035.74,464.46 1035.85,464.46 1035.97,464.46 1036.08,464.45 1036.20,464.45 1036.31,464.45 1036.43,464.45 1036.54,464.45 1036.65,464.45 1036.77,464.45 1036.88,464.45 1037.00,464.44 1037.11,464.44 1037.23,464.44 1037.34,464.44 1037.45,464.44 1037.57,464.44 1037.68,464.44 1037.80,464.44 1037.91,464.44 1038.03,464.43 1038.14,464.43 1038.25,464.43 1038.37,464.43 1038.48,464.43 1038.60,464.43 1038.71,464.43 1038.83,464.43 1038.94,464.43 1039.06,464.42 1039.17,464.42 1039.28,464.40 1039.40,464.27 1039.51,463.62 1039.63,461.04 1039.74,452.96 1039.86,433.27 1039.97,396.62 1040.08,346.25 1040.20,299.50 1040.31,280.11 1040.43,299.49 1040.54,346.24 1040.66,394.72 1040.77,431.41 1040.88,451.14 1041.00,459.25 1041.11,461.87 1041.23,462.55 1041.34,462.71 1041.46,462.76 1041.57,462.79 1041.69,462.83 1041.80,462.86 1041.91,462.89 1042.03,462.92 1042.14,462.94 1042.26,462.97 1042.37,463.00 1042.49,463.03 1042.60,463.05 1042.71,463.08 1042.83,463.10 1042.94,463.13 1043.06,463.15 1043.17,463.18 1043.29,463.20 1043.40,463.22 1043.51,463.24 1043.63,463.27 1043.74,463.29 1043.86,463.31 1043.97,463.33 1044.09,463.35 1044.20,463.37 1044.32,463.39 1044.43,463.41 1044.54,463.43 1044.66,463.45 1044.77,463.46 1044.89,463.48 1045.00,463.50 1045.12,463.51 1045.23,463.53 1045.34,463.55 1045.46,463.56 1045.57,463.58 1045.69,463.59 1045.80,463.61 1045.92,463.62 1046.03,463.64 1046.14,463.65 1046.26,463.67 1046.37,463.68 1046.49,463.69 1046.60,463.70 1046.72,463.72 1046.83,463.73 1046.95,463.74 1047.06,463.75 1047.17,463.77 1047.29,463.78 1047.40,463.79 1047.52,463.80 1047.63,463.81 1047.75,463.82 1047.86,463.83 1047.97,463.84 1048.09,463.85 1048.20,463.86 1048.32,463.87 1048.43,463.88 1048.55,463.89 1048.66,463.90 1048.77,463.91 1048.89,463.91 1049.00,463.92 1049.12,463.93 1049.23,463.94 1049.35,463.95 1049.46,463.95 1049.58,463.96 1049.69,463.97 1049.80,463.98 1049.92,463.98 1050.03,463.99 1050.15,464.00 1050.26,464.00 1050.38,464.01 1050.49,464.02 1050.60,464.02 1050.72,464.03 1050.83,464.03 1050.95,464.04 1051.06,464.05 1051.18,464.05 1051.29,464.06 1051.40,464.06 1051.52,464.07 1051.63,464.07 1051.75,464.08 1051.86,464.08 1051.98,464.09 1052.09,464.09 1052.21,464.10 1052.32,464.10 1052.43,464.11 1052.55,464.11 1052.66,464.12 1052.78,464.12 1052.89,464.12 1053.01,464.13 1053.12,464.13 1053.23,464.14 1053.35,464.14 1053.46,464.14 1053.58,464.15 1053.69,464.15 1053.81,464.15 1053.92,464.16 1054.04,464.16 1054.15,464.16 1054.26,464.17 1054.38,464.17 1054.49,464.17 1054.61,464.18 1054.72,464.18 1054.84,464.18 1054.95,464.18 1055.06,464.19 1055.18,464.19 1055.29,464.19 1055.41,464.19 1055.52,464.20 1055.64,464.20 1055.75,464.20 1055.86,464.20 1055.98,464.21 1056.09,464.21 1056.21,464.21 1056.32,464.21 1056.44,464.22 1056.55,464.22 1056.67,464.22 1056.78,464.22 1056.89,464.22 1057.01,464.23 1057.12,464.23 1057.24,464.23 1057.35,464.23 1057.47,464.23 1057.58,464.23 1057.69,464.24 1057.81,464.24 1057.92,464.24 1058.04,464.24 1058.15,464.24 1058.27,464.24 1058.38,464.25 1058.49,464.25 1058.61,464.25 1058.72,464.25 1058.84,464.25 1058.95,464.25 1059.07,464.25 1059.18,464.25 1059.30,464.26 1059.41,464.26 1059.52,464.26 1059.64,464.26 1059.75,464.26 1059.87,464.26 1059.98,464.26 1060.10,464.26 1060.21,464.27 1060.32,464.27 1060.44,464.27 1060.55,464.27 1060.67,464.27 1060.78,464.27 1060.90,464.27 1061.01,464.27 1061.12,464.27 1061.24,464.27 1061.35,464.27 1061.47,464.27 1061.58,464.28 1061.70,464.28 1061.81,464.28 1061.93,464.28 1062.04,464.28 1062.15,464.28 1062.27,464.28 1062.38,464.28 1062.50,464.28 1062.61,464.28 1062.73,464.28 1062.84,464.28 1062.95,464.28 1063.07,464.28 1063.18,464.28 1063.30,464.29 1063.41,464.29 1063.53,464.29 1063.64,464.29 1063.75,464.29 1063.87,464.29 1063.98,464.29 1064.10,464.29 1064.21,464.29 1064.33,464.29 1064.44,464.29 1064.56,464.29 1064.67,464.29 1064.78,464.29 1064.90,464.29 1065.01,464.29 1065.13,464.29 1065.24,464.29 1065.36,464.29 1065.47,464.29 1065.58,464.29 1065.70,464.29 1065.81,464.29 1065.93,464.30 1066.04,464.30 1066.16,464.30 1066.27,464.30 1066.38,464.30 1066.50,464.30 1066.61,464.30 1066.73,464.30 1066.84,464.30 1066.96,464.30 1067.07,464.30 1067.19,464.30 1067.30,464.30 1067.41,464.30 1067.53,464.30 1067.64,464.30 1067.76,464.30 1067.87,464.30 1067.99,464.30 1068.10,464.30 1068.21,464.30 1068.33,464.30 1068.44,464.30 1068.56,464.30 1068.67,464.30 1068.79,464.30 1068.90,464.30 1069.01,464.30 1069.13,464.30 1069.24,464.30 1069.36,464.30 1069.47,464.30 1069.59,464.30 1069.70,464.30 1069.82,464.30 1069.93,464.30 1070.04,464.30 1070.16,464.30 1070.27,464.30 1070.39,464.30 1070.50,464.30 1070.62,464.30 1070.73,464.30 1070.84,464.30 1070.96,464.30 1071.07,464.30 1071.19,464.30 1071.30,464.30 1071.42,464.30 1071.53,464.30 1071.64,464.30 1071.76,464.30 1071.87,464.30 1071.99,464.30 1072.10,464.30 1072.22,464.30 1072.33,464.30 1072.45,464.30 1072.56,464.30 1072.67,464.30 1072.79,464.30 1072.90,464.30 1073.02,464.30 1073.13,464.30 1073.25,464.30 1073.36,464.30 1073.47,464.30 1073.59,464.30 1073.70,464.30 1073.82,464.30 1073.93,464.30 1074.05,464.30 1074.16,464.30 1074.28,464.30 1074.39,464.30 1074.50,464.30 1074.62,464.30 1074.73,464.30 1074.85,464.30 1074.96,464.30 1075.08,464.30 1075.19,464.30 1075.30,464.30 1075.42,464.30 1075.53,464.30 1075.65,464.30 1075.76,464.30 1075.88,464.30 1075.99,464.30 1076.10,464.30 1076.22,464.30 1076.33,464.30 1076.45,464.30 1076.56,464.30 1076.68,464.30 1076.79,464.30 1076.91,464.30 1077.02,464.30 1077.13,464.30 1077.25,464.30 1077.36,464.30 1077.48,464.30 1077.59,464.30 1077.71,464.30 1077.82,464.30 1077.93,464.30 1078.05,464.30 1078.16,464.30 1078.28,464.30 1078.39,464.30 1078.51,464.30 1078.62,464.30 1078.73,464.30 1078.85,464.30 1078.96,464.30 1079.08,464.30 1079.19,464.30 1079.31,464.30 1079.42,464.30 1079.54,464.30 1079.65,464.30 1079.76,464.30 1079.88,464.30 1079.99,464.30 1080.11,464.30 1080.22,464.30 1080.34,464.30 1080.45,464.30 1080.56,464.30 1080.68,464.30 1080.79,464.30 1080.91,464.30 1081.02,464.30 1081.14,464.30 1081.25,464.30 1081.36,464.30 1081.48,464.30 1081.59,464.30 1081.71,464.30 1081.82,464.30 1081.94,464.30 1082.05,464.30 1082.17,464.30 1082.28,464.30 1082.39,464.30 1082.51,464.30 1082.62,464.30 1082.74,464.30 1082.85,464.30 1082.97,464.30 1083.08,464.30 1083.19,464.30 1083.31,464.30 1083.42,464.30 1083.54,464.30 1083.65,464.30 1083.77,464.30 1083.88,464.30 1083.99,464.30 1084.11,464.30 1084.22,464.30 1084.34,464.30 1084.45,464.30 1084.57,464.30 1084.68,464.30 1084.80,464.30 1084.91,464.30 1085.02,464.30 1085.14,464.30 1085.25,464.30 1085.37,464.30 1085.48,464.30 1085.60,464.30 1085.71,464.30 1085.82,464.30 1085.94,464.30 1086.05,464.30 1086.17,464.30 1086.28,464.30 1086.40,464.30 1086.51,464.30 1086.62,464.30 1086.74,464.30 1086.85,464.30 1086.97,464.30 1087.08,464.30 1087.20,464.30 1087.31,464.30 1087.43,464.30 1087.54,464.30 1087.65,464.30 1087.77,464.30 1087.88,464.30 1088.00,464.30 1088.11,464.30 1088.23,464.30 1088.34,464.30 1088.45,464.30 1088.57,464.30 1088.68,464.30 1088.80,464.30 1088.91,464.30 1089.03,464.30 1089.14,464.30 1089.25,464.30 1089.37,464.30 1089.48,464.30 1089.60,464.30 1089.71,464.30 1089.83,464.30 1089.94,464.30 1090.06,464.30 1090.17,464.30 1090.28,464.30 1090.40,464.30 1090.51,464.30 1090.63,464.30 1090.74,464.30 1090.86,464.30 1090.97,464.30 1091.08,464.30 1091.20,464.30 1091.31,464.30 1091.43,464.30 1091.54,464.30 1091.66,464.30 1091.77,464.30 1091.88,464.30 1092.00,464.30 1092.11,464.30 1092.23,464.30 1092.34,464.30 1092.46,464.30 1092.57,464.30 1092.69,464.30 1092.80,464.30 1092.91,464.30 1093.03,464.30 1093.14,464.30 1093.26,464.30 1093.37,464.30 1093.49,464.30 1093.60,464.30 1093.71,464.30 1093.83,464.30 1093.94,464.30 1094.06,464.30 1094.17,464.30 1094.29,464.30 1094.40,464.30 1094.51,464.30 1094.63,464.30 1094.74,464.30 1094.86,464.30 1094.97,464.30 1095.09,464.30 1095.20,464.30 1095.32,464.30 1095.43,464.30 1095.54,464.30 1095.66,464.30 1095.77,464.30 1095.89,464.30 1096.00,464.30 1096.12,464.30 1096.23,464.30 1096.34,464.30 1096.46,464.30 1096.57,464.30 1096.69,464.30 1096.80,464.30 1096.92,464.30 1097.03,464.30 1097.14,464.30 1097.26,464.30 1097.37,464.30 1097.49,464.30 1097.60,464.30 1097.72,464.30 1097.83,464.30 1097.95,464.30 1098.06,464.30 1098.17,464.30 1098.29,464.30 1098.40,464.30 1098.52,464.30 1098.63,464.30 1098.75,464.30 1098.86,464.30 1098.97,464.30 1099.09,464.30 1099.20,464.30 1099.32,464.30 1099.43,464.30 1099.55,464.30 1099.66,464.30 1099.78,464.30 1099.89,464.30 1100.00,464.30 1100.12,464.30 1100.23,464.30 1100.35,464.30 1100.46,464.30 1100.58,464.30 1100.69,464.30 1100.80,464.30 1100.92,464.30 1101.03,464.30 1101.15,464.30 1101.26,464.30 1101.38,464.30 1101.49,464.30 1101.60,464.30 1101.72,464.30 1101.83,464.30 1101.95,464.30 1102.06,464.30 1102.18,464.30 1102.29,464.30 1102.41,464.30 1102.52,464.30 1102.63,464.30 1102.75,464.30 1102.86,464.30 1102.98,464.30 1103.09,464.30 1103.21,464.30 1103.32,464.30 1103.43,464.30 1103.55,464.30 1103.66,464.30 1103.78,464.30 1103.89,464.30 1104.01,464.30 1104.12,464.30 1104.23,464.30 1104.35,464.30 1104.46,464.30 1104.58,464.30 1104.69,464.30 1104.81,464.30 1104.92,464.30 1105.04,464.30 1105.15,464.30 1105.26,464.30 1105.38,464.30 1105.49,464.30 1105.61,464.30 1105.72,464.30 1105.84,464.30 1105.95,464.30 1106.06,464.30 1106.18,464.30 1106.29,464.30 1106.41,464.30 1106.52,464.30 1106.64,464.30 1106.75,464.30 1106.86,464.30 1106.98,464.30 1107.09,464.30 1107.21,464.30 1107.32,464.30 1107.44,464.30 1107.55,464.30 1107.67,464.30 1107.78,464.30 1107.89,464.30 1108.01,464.30 1108.12,464.30 1108.24,464.30 1108.35,464.30 1108.47,464.30 1108.58,464.30 1108.69,464.30 1108.81,464.30 1108.92,464.30 1109.04,464.30 1109.15,464.30 1109.27,464.30 1109.38,464.30 1109.49,464.30 1109.61,464.30 1109.72,464.30 1109.84,464.30 1109.95,464.30 1110.07,464.30 1110.18,464.30 1110.30,464.30 1110.41,464.30 1110.52,464.30 1110.64,464.30 1110.75,464.30 1110.87,464.30 1110.98,464.30 1111.10,464.30 1111.21,464.30 1111.32,464.30 1111.44,464.30 1111.55,464.30 1111.67,464.30 1111.78,464.30 1111.90,464.30 1112.01,464.30 1112.12,464.30 1112.24,464.30 1112.35,464.30 1112.47,464.30 1112.58,464.30 1112.70,464.30 1112.81,464.30 1112.93,464.30 1113.04,464.30 1113.15,464.30 1113.27,464.30 1113.38,464.30 1113.50,464.30 1113.61,464.30 1113.73,464.30 1113.84,464.30 1113.95,464.30 1114.07,464.30 1114.18,464.30 1114.30,464.30 1114.41,464.30 1114.53,464.30 1114.64,464.30 1114.75,464.30 1114.87,464.30 1114.98,464.30 1115.10,464.30 1115.21,464.30 1115.33,464.30 1115.44,464.30 1115.56,464.30 1115.67,464.30 1115.78,464.30 1115.90,464.30 1116.01,464.30 1116.13,464.30 1116.24,464.30 1116.36,464.30 1116.47,464.30 1116.58,464.30 1116.70,464.30 1116.81,464.30 1116.93,464.30 1117.04,464.30 1117.16,464.30 1117.27,464.30 1117.38,464.30 1117.50,464.30 1117.61,464.30 1117.73,464.30 1117.84,464.30 1117.96,464.30 1118.07,464.30 1118.19,464.30 1118.30,464.30 1118.41,464.30 1118.53,464.30 1118.64,464.30 1118.76,464.30 1118.87,464.30 1118.99,464.30 1119.10,464.30 1119.21,464.30 1119.33,464.30 1119.44,464.30 1119.56,464.30 1119.67,464.30 1119.79,464.30 1119.90,464.30 1120.02,464.30 1120.13,464.30 1120.24,464.30 1120.36,464.30 1120.47,464.30 1120.59,464.30 1120.70,464.30 1120.82,464.30 1120.93,464.30 1121.04,464.30 1121.16,464.30 1121.27,464.30 1121.39,464.30 1121.50,464.30 1121.62,464.30 1121.73,464.30 1121.84,464.30 1121.96,464.30 1122.07,464.30 1122.19,464.30 1122.30,464.30 1122.42,464.30 1122.53,464.30 1122.65,464.30 1122.76,464.30 1122.87,464.30 1122.99,464.30 1123.10,464.30 1123.22,464.30 1123.33,464.30 1123.45,464.30 1123.56,464.30 1123.67,464.30 1123.79,464.30 1123.90,464.30 1124.02,464.30 1124.13,464.30 1124.25,464.30 1124.36,464.30 1124.47,464.30 1124.59,464.30 1124.70,464.30 1124.82,464.30 1124.93,464.30 1125.05,464.30 1125.16,464.30 1125.28,464.30 1125.39,464.30 1125.50,464.30 1125.62,464.30 1125.73,464.30 1125.85,464.30 1125.96,464.30 1126.08,464.30 1126.19,464.30 1126.30,464.30 1126.42,464.30 1126.53,464.30 1126.65,464.30 1126.76,464.30 1126.88,464.30 1126.99,464.30 1127.10,464.30 1127.22,464.30 1127.33,464.30 1127.45,464.30 1127.56,464.30 1127.68,464.30 1127.79,464.30 1127.91,464.30 1128.02,464.30 1128.13,464.30 1128.25,464.30 1128.36,464.30 1128.48,464.30 1128.59,464.30 1128.71,464.30 1128.82,464.30 1128.93,464.30 1129.05,464.30 1129.16,464.30 1129.28,464.30 1129.39,464.30 1129.51,464.30 1129.62,464.30 1129.73,464.30 1129.85,464.30 1129.96,464.30 1130.08,464.30 1130.19,464.30 1130.31,464.30 1130.42,464.30 1130.54,464.30 1130.65,464.30 1130.76,464.30 1130.88,464.30 1130.99,464.30 1131.11,464.30 1131.22,464.30 1131.34,464.30 1131.45,464.30 1131.56,464.30 1131.68,464.30 1131.79,464.30 1131.91,464.30 1132.02,464.30 1132.14,464.30 1132.25,464.30 1132.36,464.30 1132.48,464.30 1132.59,464.30 1132.71,464.30 1132.82,464.30 1132.94,464.30 1133.05,464.30 1133.17,464.30 1133.28,464.30 1133.39,464.30 1133.51,464.30 1133.62,464.30 1133.74,464.30 1133.85,464.30 1133.97,464.30 1134.08,464.30 1134.19,464.30 1134.31,464.30 1134.42,464.30 1134.54,464.30 1134.65,464.30 1134.77,464.30 1134.88,464.30 1134.99,464.30 1135.11,464.30 1135.22,464.30 1135.34,464.30 1135.45,464.30 1135.57,464.30 1135.68,464.30 1135.80,464.30 1135.91,464.30 1136.02,464.30 1136.14,464.30 1136.25,464.30 1136.37,464.30 1136.48,464.30 1136.60,464.30 1136.71,464.30 1136.82,464.30 1136.94,464.30 1137.05,464.30 1137.17,464.30 1137.28,464.30 1137.40,464.30 1137.51,464.30 1137.62,464.30 1137.74,464.30 1137.85,464.30 1137.97,464.30 1138.08,464.30 1138.20,464.30 1138.31,464.30 1138.43,464.30 1138.54,464.30 1138.65,464.30 1138.77,464.30 1138.88,464.30 1139.00,464.30 1139.11,464.30 1139.23,464.30 1139.34,464.30 1139.45,464.30 1139.57,464.30 1139.68,464.30 1139.80,464.30 1139.91,464.30 1140.03,464.30 1140.14,464.30 1140.25,464.30 1140.37,464.30 1140.48,464.30 1140.60,464.30 1140.71,464.30 1140.83,464.30 1140.94,464.30 1141.06,464.30 1141.17,464.30 1141.28,464.30 1141.40,464.30 1141.51,464.30 1141.63,464.30 1141.74,464.30 1141.86,464.30 1141.97,464.30 1142.08,464.30 1142.20,464.30 1142.31,464.30 1142.43,464.30 1142.54,464.30 1142.66,464.30 1142.77,464.30 1142.88,464.30 1143.00,464.30 1143.11,464.30 1143.23,464.30 1143.34,464.30 1143.46,464.30 1143.57,464.30 1143.69,464.30 1143.80,464.30 1143.91,464.30 1144.03,464.30 1144.14,464.30 1144.26,464.30 1144.37,464.30 1144.49,464.30 1144.60,464.30 1144.71,464.30 1144.83,464.30 1144.94,464.30 1145.06,464.30 1145.17,464.30 1145.29,464.30 1145.40,464.30 1145.52,464.30 1145.63,464.30 1145.74,464.30 1145.86,464.30 1145.97,464.30 1146.09,464.30 1146.20,464.30 1146.32,464.30 1146.43,464.30 1146.54,464.30 1146.66,464.30 1146.77,464.30 1146.89,464.30 1147.00,464.30 1147.12,464.30 1147.23,464.30 1147.34,464.30 1147.46,464.30 1147.57,464.30 1147.69,464.30 1147.80,464.30 1147.92,464.30 1148.03,464.30 1148.15,464.30 1148.26,464.30 1148.37,464.30 1148.49,464.30 1148.60,464.30 1148.72,464.30 1148.83,464.30 1148.95,464.30 1149.06,464.30 1149.17,464.30 1149.29,464.30 1149.40,464.30 1149.52,464.30 1149.63,464.30 1149.75,464.30 1149.86,464.30 1149.97,464.30 1150.09,464.30 1150.20,464.30 1150.32,464.30 1150.43,464.30 1150.55,464.30 1150.66,464.30 1150.78,464.30 1150.89,464.30 1151.00,464.30 1151.12,464.30 1151.23,464.30 1151.35,464.30 1151.46,464.30 1151.58,464.30 1151.69,464.30 1151.80,464.30 1151.92,464.30 1152.03,464.30 1152.15,464.30 1152.26,464.30 1152.38,464.30 1152.49,464.30 1152.60,464.30 1152.72,464.30 1152.83,464.30 1152.95,464.30 1153.06,464.30 1153.18,464.30 1153.29,464.30 1153.41,464.30 1153.52,464.30 1153.63,464.30 1153.75,464.30 1153.86,464.30 1153.98,464.30 1154.09,464.30 1154.21,464.30 1154.32,464.30 1154.43,464.30 1154.55,464.30 1154.66,464.30 1154.78,464.30 1154.89,464.30 1155.01,464.30 1155.12,464.30 1155.23,464.30 1155.35,464.30 1155.46,464.30 1155.58,464.30 1155.69,464.30 1155.81,464.30 1155.92,464.30 1156.04,464.30 1156.15,464.30 1156.26,464.30 1156.38,464.30 1156.49,464.30 1156.61,464.30 1156.72,464.30 1156.84,464.30 1156.95,464.30 1157.06,464.30 1157.18,464.30 1157.29,464.30 1157.41,464.30 1157.52,464.30 1157.64,464.30 1157.75,464.30 1157.86,464.30 1157.98,464.30 1158.09,464.30 1158.21,464.30 1158.32,464.30 1158.44,464.30 1158.55,464.30 1158.67,464.30 1158.78,464.30 1158.89,464.30 1159.01,464.30 1159.12,464.30 1159.24,464.30 1159.35,464.30 1159.47,464.30 1159.58,464.30 1159.69,464.30 1159.81,464.30 1159.92,464.30 1160.04,464.30 1160.15,464.30 1160.27,464.30 1160.38,464.30 1160.49,464.30 1160.61,464.30 1160.72,464.30 1160.84,464.30 1160.95,464.30 1161.07,464.30 1161.18,464.30 1161.30,464.30 1161.41,464.30 1161.52,464.30 1161.64,464.30 1161.75,464.30 1161.87,464.30 1161.98,464.30 1162.10,464.30 1162.21,464.30 1162.32,464.30 1162.44,464.30 1162.55,464.30 1162.67,464.30 1162.78,464.30 1162.90,464.30 1163.01,464.30 1163.12,464.30 1163.24,464.30 1163.35,464.30 1163.47,464.30 1163.58,464.30 1163.70,464.30 1163.81,464.30 1163.93,464.30 1164.04,464.30 1164.15,464.30 1164.27,464.30 1164.38,464.30 1164.50,464.30 1164.61,464.30 1164.73,464.30 1164.84,464.30 1164.95,464.30 1165.07,464.30 1165.18,464.30 1165.30,464.30 1165.41,464.30 1165.53,464.30 1165.64,464.30 1165.76,464.30 1165.87,464.30 1165.98,464.30 1166.10,464.30 1166.21,464.30 1166.33,464.30 1166.44,464.30 1166.56,464.30 1166.67,464.30 1166.78,464.30 1166.90,464.30 1167.01,464.30 1167.13,464.30 1167.24,464.30 1167.36,464.30 1167.47,464.30 1167.58,464.30 1167.70,464.30 1167.81,464.30 1167.93,464.30 1168.04,464.30 1168.16,464.30 1168.27,464.30 1168.39,464.30 1168.50,464.30 1168.61,464.30 1168.73,464.30 1168.84,464.30 1168.96,464.30 1169.07,464.30 1169.19,464.30 1169.30,464.30 1169.41,464.30 1169.53,464.30 1169.64,464.30 1169.76,464.30 1169.87,464.30 1169.99,464.30 1170.10,464.30 1170.21,464.30 1170.33,464.30 1170.44,464.30 1170.56,464.30 1170.67,464.30 1170.79,464.30 1170.90,464.30 1171.02,464.30 1171.13,464.30 1171.24,464.30 1171.36,464.30 1171.47,464.30 1171.59,464.30 1171.70,464.30 1171.82,464.30 1171.93,464.30 1172.04,464.30 1172.16,464.30 1172.27,464.30 1172.39,464.30 1172.50,464.30 1172.62,464.30 1172.73,464.30 1172.84,464.30 1172.96,464.30 1173.07,464.30 1173.19,464.30 1173.30,464.30 1173.42,464.30 1173.53,464.30 1173.65,464.30 1173.76,464.30 1173.87,464.30 1173.99,464.30 1174.10,464.30 1174.22,464.30 1174.33,464.30 1174.45,464.30 1174.56,464.30 1174.67,464.30 1174.79,464.30 1174.90,464.30 1175.02,464.30 1175.13,464.30 1175.25,464.30 1175.36,464.30 1175.47,464.30 1175.59,464.30 1175.70,464.30 1175.82,464.30 1175.93,464.30 1176.05,464.30 1176.16,464.30 1176.28,464.30 1176.39,464.30 1176.50,464.30 1176.62,464.30 1176.73,464.30 1176.85,464.30 1176.96,464.30 1177.08,464.30 1177.19,464.30 1177.30,464.30 1177.42,464.30 1177.53,464.30 1177.65,464.30 1177.76,464.30 1177.88,464.30 1177.99,464.30 1178.10,464.30 1178.22,464.30 1178.33,464.30 1178.45,464.30 1178.56,464.30 1178.68,464.30 1178.79,464.30 1178.91,464.30 1179.02,464.30 1179.13,464.30 1179.25,464.30 1179.36,464.30 1179.48,464.30 1179.59,464.30 1179.71,464.30 1179.82,464.30 1179.93,464.30 1180.05,464.30 1180.16,464.30 1180.28,464.30 1180.39,464.30 1180.51,464.30 1180.62,464.30 1180.73,464.30 1180.85,464.30 1180.96,464.30 1181.08,464.30 1181.19,464.30 1181.31,464.30 1181.42,464.30 1181.54,464.30 1181.65,464.30 1181.76,464.30 1181.88,464.30 1181.99,464.30 1182.11,464.30 1182.22,464.30 1182.34,464.30 1182.45,464.30 1182.56,464.30 1182.68,464.30 1182.79,464.30 1182.91,464.30 1183.02,464.30 1183.14,464.30 1183.25,464.30 1183.36,464.30 1183.48,464.30 1183.59,464.30 1183.71,464.30 1183.82,464.30 1183.94,464.30 1184.05,464.30 1184.17,464.30 1184.28,464.30 1184.39,464.30 1184.51,464.30 1184.62,464.30 1184.74,464.30 1184.85,464.30 1184.97,464.30 1185.08,464.30 1185.19,464.30 1185.31,464.30 1185.42,464.30 1185.54,464.30 1185.65,464.30 1185.77,464.30 1185.88,464.30 1185.99,464.30 1186.11,464.30 1186.22,464.30 1186.34,464.30 1186.45,464.30 1186.57,464.30 1186.68,464.30 1186.80,464.30 1186.91,464.30 1187.02,464.30 1187.14,464.30 1187.25,464.30 1187.37,464.30 1187.48,464.30 1187.60,464.30 1187.71,464.30 1187.82,464.30 1187.94,464.30 1188.05,464.30 1188.17,464.30 1188.28,464.30 1188.40,464.30 1188.51,464.30 1188.62,464.30 1188.74,464.30 1188.85,464.30 1188.97,464.30 1189.08,464.30 1189.20,464.30 1189.31,464.30 1189.43,464.30 1189.54,464.30 1189.65,464.30 1189.77,464.30 1189.88,464.30 1190.00,464.30 1190.11,464.30 1190.23,464.30 1190.34,464.30 1190.45,464.30 1190.57,464.30 1190.68,464.30 1190.80,464.30 1190.91,464.30 1191.03,464.30 1191.14,464.30 1191.26,464.30 1191.37,464.30 1191.48,464.30 1191.60,464.30 1191.71,464.30 1191.83,464.30 1191.94,464.30 1192.06,464.30 1192.17,464.30 1192.28,464.30 1192.40,464.30 1192.51,464.30 1192.63,464.30 1192.74,464.30 1192.86,464.30 1192.97,464.30 1193.08,464.30 1193.20,464.30 1193.31,464.30 1193.43,464.30 1193.54,464.30 1193.66,464.30 1193.77,464.30 1193.89,464.30 1194.00,464.30 1194.11,464.30 1194.23,464.30 1194.34,464.30 1194.46,464.30 1194.57,464.30 1194.69,464.30 1194.80,464.30 1194.91,464.30 1195.03,464.30 1195.14,464.30 1195.26,464.30 1195.37,464.30 1195.49,464.30 1195.60,464.30 1195.71,464.30 1195.83,464.30 1195.94,464.30 1196.06,464.30 1196.17,464.30 1196.29,464.30 1196.40,464.30 1196.52,464.30 1196.63,464.30 1196.74,464.30 1196.86,464.30 1196.97,464.30 1197.09,464.30 1197.20,464.30 1197.32,464.30 1197.43,464.30 1197.54,464.30 1197.66,464.30 1197.77,464.30 1197.89,464.30 1198.00,464.30 1198.12,464.30 1198.23,464.30 1198.34,464.30 1198.46,464.30 1198.57,464.30 1198.69,464.30 1198.80,464.30 1198.92,464.30 1199.03,464.30 1199.15,464.30 1199.26,464.30 1199.37,464.30 1199.49,464.30 1199.60,464.30 1199.72,464.30 1199.83,464.30 1199.95,464.30 1200.06,464.30 1200.17,464.30 1200.29,464.30 1200.40,464.30 1200.52,464.30 1200.63,464.30 1200.75,464.30 1200.86,464.30 1200.97,464.30 1201.09,464.30 1201.20,464.30 1201.32,464.30 1201.43,464.30 1201.55,464.30 1201.66,464.30 1201.78,464.30 1201.89,464.30 1202.00,464.30 1202.12,464.30 1202.23,464.30 1202.35,464.30 1202.46,464.30 1202.58,464.30 1202.69,464.30 1202.80,464.30 1202.92,464.30 1203.03,464.30 1203.15,464.30 1203.26,464.30 1203.38,464.30 1203.49,464.30 1203.60,464.30 1203.72,464.30 1203.83,464.30 1203.95,464.30 1204.06,464.30 1204.18,464.30 1204.29,464.30 1204.41,464.30 1204.52,464.30 1204.63,464.30 1204.75,464.30 1204.86,464.30 1204.98,464.30 1205.09,464.30 1205.21,464.30 1205.32,464.30 1205.43,464.30 1205.55,464.30 1205.66,464.30 1205.78,464.30 1205.89,464.30 1206.01,464.30 1206.12,464.30 1206.23,464.30 1206.35,464.30 1206.46,464.30 1206.58,464.30 1206.69,464.30 1206.81,464.30 1206.92,464.30 1207.04,464.30 1207.15,464.30 1207.26,464.30 1207.38,464.30 1207.49,464.30 1207.61,464.30 1207.72,464.30 1207.84,464.30 1207.95,464.30 1208.06,464.30 1208.18,464.30 1208.29,464.30 1208.41,464.30 1208.52,464.30 1208.64,464.30 1208.75,464.30 1208.86,464.30 1208.98,464.30 1209.09,464.30 1209.21,464.30 1209.32,464.30 1209.44,464.30 1209.55,464.30 1209.67,464.30 1209.78,464.30 1209.89,464.30 1210.01,464.30 1210.12,464.30 1210.24,464.30 1210.35,464.30 1210.47,464.30 1210.58,464.30 1210.69,464.30 1210.81,464.30 1210.92,464.30 1211.04,464.30 1211.15,464.30 1211.27,464.30 1211.38,464.30 1211.49,464.30 1211.61,464.30 1211.72,464.30 1211.84,464.30 1211.95,464.30 1212.07,464.30 1212.18,464.30 1212.30,464.30 1212.41,464.30 1212.52,464.30 1212.64,464.30 1212.75,464.30 1212.87,464.30 1212.98,464.30 1213.10,464.30 1213.21,464.30 1213.32,464.30 1213.44,464.30 1213.55,464.30 1213.67,464.30 1213.78,464.30 1213.90,464.30 1214.01,464.30 1214.13,464.30 1214.24,464.30 1214.35,464.30 1214.47,464.30 1214.58,464.30 1214.70,464.30 1214.81,464.30 1214.93,464.30 1215.04,464.30 1215.15,464.30 1215.27,464.30 1215.38,464.30 1215.50,464.30 1215.61,464.30 1215.73,464.30 1215.84,464.30 1215.95,464.30 1216.07,464.30 1216.18,464.30 1216.30,464.30 1216.41,464.30 1216.53,464.30 1216.64,464.30 1216.76,464.30 1216.87,464.30 1216.98,464.30 1217.10,464.30 1217.21,464.30 1217.33,464.30 1217.44,464.30 1217.56,464.30 1217.67,464.30 1217.78,464.30 1217.90,464.30 1218.01,464.30 1218.13,464.30 1218.24,464.30 1218.36,464.30 1218.47,464.30 1218.58,464.30 1218.70,464.30 1218.81,464.30 1218.93,464.30 1219.04,464.30 1219.16,464.30 1219.27,464.30 1219.39,464.30 1219.50,464.30 1219.61,464.30 1219.73,464.30 1219.84,464.30 1219.96,464.30 1220.07,464.30 1220.19,464.30 1220.30,464.30 1220.41,464.30 1220.53,464.30 1220.64,464.30 1220.76,464.30 1220.87,464.30 1220.99,464.30 1221.10,464.30 1221.21,464.30 1221.33,464.30 1221.44,464.30 1221.56,464.30 1221.67,464.30 1221.79,464.30 1221.90,464.30 1222.02,464.30 1222.13,464.30 1222.24,464.30 1222.36,464.30 1222.47,464.30 1222.59,464.30 1222.70,464.30 1222.82,464.30 1222.93,464.30 1223.04,464.30 1223.16,464.30 1223.27,464.30 1223.39,464.30 1223.50,464.30 1223.62,464.30 1223.73,464.30 1223.84,464.30 1223.96,464.30 1224.07,464.30 1224.19,464.30 1224.30,464.30 1224.42,464.30 1224.53,464.30 1224.65,464.30 1224.76,464.30 1224.87,464.30 1224.99,464.30 1225.10,464.30 1225.22,464.30 1225.33,464.30 1225.45,464.30 1225.56,464.30 1225.67,464.30 1225.79,464.30 1225.90,464.30 1226.02,464.30 1226.13,464.30 1226.25,464.30 1226.36,464.30 1226.47,464.30 1226.59,464.30 1226.70,464.30 1226.82,464.30 1226.93,464.30 1227.05,464.30 1227.16,464.30 1227.28,464.30 1227.39,464.30 1227.50,464.30 1227.62,464.30 1227.73,464.30 1227.85,464.30 1227.96,464.30 1228.08,464.30 1228.19,464.30 1228.30,464.30 1228.42,464.30 1228.53,464.30 1228.65,464.30 1228.76,464.30 1228.88,464.30 1228.99,464.30 1229.10,464.30 1229.22,464.30 1229.33,464.30 1229.45,464.30 1229.56,464.30 1229.68,464.30 1229.79,464.30 1229.91,464.30 1230.02,464.30 1230.13,464.30 1230.25,464.30 1230.36,464.30 1230.48,464.30 1230.59,464.30 1230.71,464.30 1230.82,464.30 1230.93,464.30 1231.05,464.30 1231.16,464.30 1231.28,464.30 1231.39,464.30 1231.51,464.30 1231.62,464.30 1231.73,464.30 1231.85,464.30 1231.96,464.30 1232.08,464.30 1232.19,464.30 1232.31,464.30 1232.42,464.30 1232.54,464.30 1232.65,464.30 1232.76,464.30 1232.88,464.30 1232.99,464.30 1233.11,464.30 1233.22,464.30 1233.34,464.30 1233.45,464.30 1233.56,464.30 1233.68,464.30 1233.79,464.30 1233.91,464.30 1234.02,464.30 1234.14,464.30 1234.25,464.30 1234.37,464.30 1234.48,464.30 1234.59,464.30 1234.71,464.30 1234.82,464.30 1234.94,464.30 1235.05,464.30 1235.17,464.30 1235.28,464.30 1235.39,464.30 1235.51,464.30 1235.62,464.30 1235.74,464.30 1235.85,464.30 1235.97,464.30 1236.08,464.30 1236.19,464.30 1236.31,464.30 1236.42,464.30 1236.54,464.30 1236.65,464.30 1236.77,464.30 1236.88,464.30 1237.00,464.30 1237.11,464.30 1237.22,464.30 1237.34,464.30 1237.45,464.30 1237.57,464.30 1237.68,464.30 1237.80,464.30 1237.91,464.30 1238.02,464.30 1238.14,464.30 1238.25,464.30 1238.37,464.30 1238.48,464.30 1238.60,464.30 1238.71,464.30 1238.82,464.30 1238.94,464.30 1239.05,464.30 1239.17,464.30 1239.28,464.30 1239.40,464.30 1239.51,464.30 1239.63,464.30 1239.74,464.30 1239.85,464.30 1239.97,464.30 1240.08,464.30 1240.20,464.30 1240.31,464.30 1240.43,464.30 1240.54,464.30 1240.65,464.30 1240.77,464.30 1240.88,464.30 1241.00,464.30 1241.11,464.30 1241.23,464.30 1241.34,464.30 1241.45,464.30 1241.57,464.30 1241.68,464.30 1241.80,464.30 1241.91,464.30 1242.03,464.30 1242.14,464.30 1242.26,464.30 1242.37,464.30 1242.48,464.30 1242.60,464.30 1242.71,464.30 1242.83,464.30 1242.94,464.30 1243.06,464.30 1243.17,464.30 1243.28,464.30 1243.40,464.30 1243.51,464.30 1243.63,464.30 1243.74,464.30 1243.86,464.30 1243.97,464.30 1244.08,464.30 1244.20,464.30 1244.31,464.30 1244.43,464.30 1244.54,464.30 1244.66,464.30 1244.77,464.30 1244.89,464.30 1245.00,464.30 1245.11,464.30 1245.23,464.30 1245.34,464.30 1245.46,464.30 1245.57,464.30 1245.69,464.30 1245.80,464.30" fill="none" stroke="#1f77b4" stroke-width="2.9" stroke-linejoin="round" stroke-linecap="butt"/>
<line x1="1017.10" y1="501.15" x2="1017.10" y2="510.75" stroke="#000" stroke-width="1.6"/>
<text x="1017.30" y="528.75" font-size="15" letter-spacing="0.45" text-anchor="middle" fill="#111">0</text>
<line x1="1074.28" y1="501.15" x2="1074.28" y2="510.75" stroke="#000" stroke-width="1.6"/>
<text x="1074.48" y="528.75" font-size="15" letter-spacing="0.45" text-anchor="middle" fill="#111">250</text>
<line x1="1131.45" y1="501.15" x2="1131.45" y2="510.75" stroke="#000" stroke-width="1.6"/>
<text x="1131.65" y="528.75" font-size="15" letter-spacing="0.45" text-anchor="middle" fill="#111">500</text>
<line x1="1188.62" y1="501.15" x2="1188.62" y2="510.75" stroke="#000" stroke-width="1.6"/>
<text x="1188.83" y="528.75" font-size="15" letter-spacing="0.45" text-anchor="middle" fill="#111">750</text>
<line x1="1245.80" y1="501.15" x2="1245.80" y2="510.75" stroke="#000" stroke-width="1.6"/>
<text x="1246.00" y="528.75" font-size="15" letter-spacing="0.45" text-anchor="middle" fill="#111">1000</text>
<line x1="1007.5" y1="464.30" x2="1017.1" y2="464.30" stroke="#000" stroke-width="1.6"/>
<text x="1000.95" y="471.00" font-size="15" letter-spacing="0.7" text-anchor="end" fill="#111">0</text>
<line x1="1007.5" y1="425.78" x2="1017.1" y2="425.78" stroke="#000" stroke-width="1.6"/>
<text x="1000.95" y="432.48" font-size="15" letter-spacing="0.7" text-anchor="end" fill="#111">500</text>
<line x1="1007.5" y1="387.25" x2="1017.1" y2="387.25" stroke="#000" stroke-width="1.6"/>
<text x="1000.95" y="393.95" font-size="15" letter-spacing="0.7" text-anchor="end" fill="#111">1000</text>
<line x1="1007.5" y1="348.73" x2="1017.1" y2="348.73" stroke="#000" stroke-width="1.6"/>
<text x="1000.95" y="355.43" font-size="15" letter-spacing="0.7" text-anchor="end" fill="#111">1500</text>
<line x1="1007.5" y1="310.20" x2="1017.1" y2="310.20" stroke="#000" stroke-width="1.6"/>
<text x="1000.95" y="316.90" font-size="15" letter-spacing="0.7" text-anchor="end" fill="#111">2000</text>
<line x1="1007.5" y1="271.68" x2="1017.1" y2="271.68" stroke="#000" stroke-width="1.6"/>
<text x="1000.95" y="278.38" font-size="15" letter-spacing="0.7" text-anchor="end" fill="#111">2500</text>
<rect x="1017.1" y="243.2" width="228.69999999999993" height="257.95" fill="none" stroke="#000" stroke-width="1.6"/>
<text x="1131.45" y="233.70" font-size="19.1" text-anchor="middle" fill="#111">Maxent</text>
<text x="1131.45" y="551.45" font-size="15" letter-spacing="0.4" text-anchor="middle" fill="#111">Field (<tspan font-style="italic">Gauss</tspan>)</text>
<text transform="translate(951.50,372.17) rotate(-90)" font-size="15" letter-spacing="0.35" text-anchor="middle" fill="#111">Counts</text>
<rect x="1107.5" y="247" width="134.0" height="14" rx="1.5" fill="#fff" fill-opacity="0.8" stroke="#ccc" stroke-width="1"/>
<line x1="1110.20" y1="253.80" x2="1128.50" y2="253.80" stroke="#1f77b4" stroke-width="2.4"/>
<text x="1133.10" y="257.00" font-size="8.9" fill="#111" style="font-family:'DejaVu Sans Condensed','DejaVu Sans',sans-serif">62260 Frequency ;MaxEnt</text>
<clipPath id="c32"><rect x="1383.6" y="243.2" width="227.6500000000001" height="257.95"/></clipPath>
<polyline clip-path="url(#c32)" points="1385.88,327.32 1386.20,330.69 1386.52,332.99 1386.84,334.35 1387.16,334.88 1387.49,334.65 1387.81,333.75 1388.13,332.25 1388.45,330.21 1388.77,327.71 1389.10,324.81 1389.42,321.59 1389.74,318.11 1390.06,314.45 1390.38,310.67 1390.71,306.87 1391.03,302.97 1391.35,299.14 1391.67,295.48 1391.99,292.08 1392.32,288.97 1392.64,286.23 1392.96,283.90 1393.28,282.02 1393.60,280.63 1393.93,279.76 1394.25,279.43 1394.57,279.64 1394.89,280.41 1395.21,281.72 1395.54,283.57 1395.86,285.93 1396.18,288.79 1396.50,292.09 1396.82,295.82 1397.15,299.91 1397.47,304.32 1397.79,308.99 1398.11,313.86 1398.43,318.89 1398.75,323.99 1399.08,329.12 1399.40,334.11 1399.72,338.96 1400.04,343.65 1400.36,348.14 1400.69,352.37 1401.01,356.30 1401.33,359.88 1401.65,363.09 1401.97,365.89 1402.30,368.26 1402.62,370.18 1402.94,371.64 1403.26,372.64 1403.58,373.18 1403.91,373.28 1404.23,372.94 1404.55,372.19 1404.87,371.05 1405.19,369.57 1405.52,367.77 1405.84,365.70 1406.16,363.39 1406.48,360.91 1406.80,358.30 1407.13,355.60 1407.45,352.87 1407.77,350.09 1408.09,347.33 1408.41,344.70 1408.74,342.23 1409.06,339.97 1409.38,337.96 1409.70,336.24 1410.02,334.84 1410.35,333.79 1410.67,333.10 1410.99,332.79 1411.31,332.88 1411.63,333.36 1411.96,334.23 1412.28,335.49 1412.60,337.11 1412.92,339.10 1413.24,341.41 1413.57,344.02 1413.89,346.90 1414.21,350.01 1414.53,353.32 1414.85,356.79 1415.18,360.36 1415.50,364.00 1415.82,367.67 1416.14,371.26 1416.46,374.74 1416.78,378.12 1417.11,381.35 1417.43,384.41 1417.75,387.26 1418.07,389.86 1418.39,392.20 1418.72,394.25 1419.04,396.00 1419.36,397.43 1419.68,398.53 1420.00,399.30 1420.33,399.75 1420.65,399.87 1420.97,399.68 1421.29,399.19 1421.61,398.42 1421.94,397.40 1422.26,396.15 1422.58,394.70 1422.90,393.08 1423.22,391.33 1423.55,389.47 1423.87,387.55 1424.19,385.61 1424.51,383.63 1424.83,381.64 1425.16,379.74 1425.48,377.95 1425.80,376.31 1426.12,374.84 1426.44,373.58 1426.77,372.54 1427.09,371.74 1427.41,371.20 1427.73,370.94 1428.05,370.95 1428.38,371.24 1428.70,371.82 1429.02,372.67 1429.34,373.79 1429.66,375.17 1429.99,376.78 1430.31,378.61 1430.63,380.64 1430.95,382.84 1431.27,385.18 1431.60,387.64 1431.92,390.18 1432.24,392.78 1432.56,395.40 1432.88,397.99 1433.20,400.48 1433.53,402.91 1433.85,405.24 1434.17,407.45 1434.49,409.51 1434.81,411.41 1435.14,413.11 1435.46,414.61 1435.78,415.90 1436.10,416.96 1436.42,417.79 1436.75,418.38 1437.07,418.74 1437.39,418.86 1437.71,418.76 1438.03,418.45 1438.36,417.94 1438.68,417.24 1439.00,416.37 1439.32,415.36 1439.64,414.22 1439.97,412.98 1440.29,411.66 1440.61,410.30 1440.93,408.91 1441.25,407.50 1441.58,406.08 1441.90,404.70 1442.22,403.41 1442.54,402.22 1442.86,401.15 1443.19,400.21 1443.51,399.44 1443.83,398.84 1444.15,398.43 1444.47,398.20 1444.80,398.18 1445.12,398.35 1445.44,398.73 1445.76,399.31 1446.08,400.07 1446.41,401.03 1446.73,402.15 1447.05,403.43 1447.37,404.86 1447.69,406.41 1448.02,408.07 1448.34,409.82 1448.66,411.63 1448.98,413.48 1449.30,415.35 1449.63,417.21 1449.95,419.00 1450.27,420.74 1450.59,422.42 1450.91,424.02 1451.23,425.51 1451.56,426.89 1451.88,428.13 1452.20,429.23 1452.52,430.17 1452.84,430.96 1453.17,431.58 1453.49,432.03 1453.81,432.32 1454.13,432.43 1454.45,432.39 1454.78,432.19 1455.10,431.85 1455.42,431.37 1455.74,430.77 1456.06,430.06 1456.39,429.26 1456.71,428.39 1457.03,427.46 1457.35,426.48 1457.67,425.49 1458.00,424.49 1458.32,423.47 1458.64,422.48 1458.96,421.55 1459.28,420.68 1459.61,419.90 1459.93,419.22 1460.25,418.64 1460.57,418.19 1460.89,417.87 1461.22,417.69 1461.54,417.65 1461.86,417.75 1462.18,417.99 1462.50,418.38 1462.83,418.91 1463.15,419.56 1463.47,420.35 1463.79,421.25 1464.11,422.25 1464.44,423.34 1464.76,424.52 1465.08,425.76 1465.40,427.04 1465.72,428.36 1466.05,429.70 1466.37,431.03 1466.69,432.32 1467.01,433.57 1467.33,434.78 1467.65,435.93 1467.98,437.01 1468.30,438.01 1468.62,438.92 1468.94,439.72 1469.26,440.42 1469.59,441.00 1469.91,441.46 1470.23,441.80 1470.55,442.03 1470.87,442.13 1471.20,442.12 1471.52,442.00 1471.84,441.77 1472.16,441.44 1472.48,441.03 1472.81,440.53 1473.13,439.97 1473.45,439.36 1473.77,438.70 1474.09,438.00 1474.42,437.30 1474.74,436.58 1475.06,435.85 1475.38,435.14 1475.70,434.47 1476.03,433.84 1476.35,433.27 1476.67,432.77 1476.99,432.34 1477.31,432.01 1477.64,431.76 1477.96,431.61 1478.28,431.57 1478.60,431.62 1478.92,431.78 1479.25,432.04 1479.57,432.40 1479.89,432.85 1480.21,433.40 1480.53,434.03 1480.86,434.73 1481.18,435.50 1481.50,436.33 1481.82,437.21 1482.14,438.12 1482.47,439.06 1482.79,440.02 1483.11,440.97 1483.43,441.90 1483.75,442.80 1484.07,443.67 1484.40,444.50 1484.72,445.28 1485.04,446.01 1485.36,446.66 1485.68,447.25 1486.01,447.76 1486.33,448.19 1486.65,448.54 1486.97,448.80 1487.29,448.97 1487.62,449.06 1487.94,449.07 1488.26,448.99 1488.58,448.84 1488.90,448.62 1489.23,448.33 1489.55,447.99 1489.87,447.60 1490.19,447.16 1490.51,446.70 1490.84,446.20 1491.16,445.70 1491.48,445.19 1491.80,444.67 1492.12,444.16 1492.45,443.67 1492.77,443.22 1493.09,442.80 1493.41,442.43 1493.73,442.12 1494.06,441.87 1494.38,441.68 1494.70,441.56 1495.02,441.52 1495.34,441.54 1495.67,441.64 1495.99,441.82 1496.31,442.06 1496.63,442.38 1496.95,442.75 1497.28,443.19 1497.60,443.69 1497.92,444.23 1498.24,444.82 1498.56,445.44 1498.89,446.09 1499.21,446.76 1499.53,447.44 1499.85,448.13 1500.17,448.79 1500.50,449.44 1500.82,450.06 1501.14,450.66 1501.46,451.23 1501.78,451.75 1502.10,452.23 1502.43,452.66 1502.75,453.04 1503.07,453.35 1503.39,453.61 1503.71,453.81 1504.04,453.94 1504.36,454.02 1504.68,454.03 1505.00,453.99 1505.32,453.89 1505.65,453.74 1505.97,453.54 1506.29,453.30 1506.61,453.03 1506.93,452.72 1507.26,452.39 1507.58,452.04 1507.90,451.68 1508.22,451.32 1508.54,450.95 1508.87,450.58 1509.19,450.23 1509.51,449.90 1509.83,449.60 1510.15,449.33 1510.48,449.10 1510.80,448.91 1511.12,448.77 1511.44,448.67 1511.76,448.63 1512.09,448.64 1512.41,448.70 1512.73,448.82 1513.05,448.99 1513.37,449.20 1513.70,449.46 1514.02,449.77 1514.34,450.12 1514.66,450.50 1514.98,450.92 1515.31,451.36 1515.63,451.82 1515.95,452.30 1516.27,452.78 1516.59,453.27 1516.92,453.75 1517.24,454.21 1517.56,454.66 1517.88,455.09 1518.20,455.50 1518.52,455.88 1518.85,456.23 1519.17,456.54 1519.49,456.82 1519.81,457.05 1520.13,457.24 1520.46,457.39 1520.78,457.50 1521.10,457.56 1521.42,457.57 1521.74,457.55 1522.07,457.49 1522.39,457.38 1522.71,457.25 1523.03,457.08 1523.35,456.89 1523.68,456.67 1524.00,456.44 1524.32,456.19 1524.64,455.94 1524.96,455.68 1525.29,455.42 1525.61,455.15 1525.93,454.90 1526.25,454.66 1526.57,454.44 1526.90,454.24 1527.22,454.07 1527.54,453.93 1527.86,453.83 1528.18,453.75 1528.51,453.72 1528.83,453.72 1529.15,453.76 1529.47,453.83 1529.79,453.94 1530.12,454.09 1530.44,454.28 1530.76,454.49 1531.08,454.73 1531.40,455.00 1531.73,455.30 1532.05,455.61 1532.37,455.94 1532.69,456.27 1533.01,456.62 1533.34,456.97 1533.66,457.31 1533.98,457.65 1534.30,457.97 1534.62,458.28 1534.94,458.58 1535.27,458.85 1535.59,459.11 1535.91,459.33 1536.23,459.53 1536.55,459.71 1536.88,459.85 1537.20,459.96 1537.52,460.04 1537.84,460.09 1538.16,460.11 1538.49,460.09 1538.81,460.05 1539.13,459.98 1539.45,459.89 1539.77,459.78 1540.10,459.64 1540.42,459.49 1540.74,459.33 1541.06,459.15 1541.38,458.97 1541.71,458.78 1542.03,458.60 1542.35,458.41 1542.67,458.22 1542.99,458.05 1543.32,457.89 1543.64,457.75 1543.96,457.62 1544.28,457.52 1544.60,457.44 1544.93,457.38 1545.25,457.35 1545.57,457.35 1545.89,457.37 1546.21,457.42 1546.54,457.50 1546.86,457.60 1547.18,457.72 1547.50,457.87 1547.82,458.04 1548.15,458.23 1548.47,458.44 1548.79,458.66 1549.11,458.89 1549.43,459.14 1549.76,459.38 1550.08,459.63 1550.40,459.88 1550.72,460.12 1551.04,460.35 1551.37,460.58 1551.69,460.79 1552.01,460.99 1552.33,461.17 1552.65,461.34 1552.97,461.48 1553.30,461.61 1553.62,461.72 1553.94,461.80 1554.26,461.86 1554.58,461.90 1554.91,461.91 1555.23,461.91 1555.55,461.88 1555.87,461.84 1556.19,461.78 1556.52,461.70 1556.84,461.60 1557.16,461.50 1557.48,461.38 1557.80,461.25 1558.13,461.13 1558.45,460.99 1558.77,460.86 1559.09,460.72 1559.41,460.59 1559.74,460.47 1560.06,460.35 1560.38,460.25 1560.70,460.16 1561.02,460.08 1561.35,460.02 1561.67,459.97 1561.99,459.95 1562.31,459.94 1562.63,459.96 1562.96,459.99 1563.28,460.04 1563.60,460.11 1563.92,460.20 1564.24,460.30 1564.57,460.42 1564.89,460.55 1565.21,460.70 1565.53,460.86 1565.85,461.02 1566.18,461.19 1566.50,461.37 1566.82,461.55 1567.14,461.72 1567.46,461.90 1567.79,462.06 1568.11,462.22 1568.43,462.38 1568.75,462.52 1569.07,462.66 1569.39,462.78 1569.72,462.88 1570.04,462.98 1570.36,463.05 1570.68,463.12 1571.00,463.16 1571.33,463.19 1571.65,463.21 1571.97,463.21 1572.29,463.19 1572.61,463.16 1572.94,463.12 1573.26,463.06 1573.58,463.00 1573.90,462.92 1574.22,462.84 1574.55,462.75 1574.87,462.66 1575.19,462.57 1575.51,462.47 1575.83,462.37 1576.16,462.28 1576.48,462.19 1576.80,462.10 1577.12,462.03 1577.44,461.96 1577.77,461.90 1578.09,461.86 1578.41,461.83 1578.73,461.81 1579.05,461.80 1579.38,461.81 1579.70,461.83 1580.02,461.86 1580.34,461.91 1580.66,461.97 1580.99,462.04 1581.31,462.13 1581.63,462.22 1581.95,462.32 1582.27,462.43 1582.60,462.55 1582.92,462.67 1583.24,462.80 1583.56,462.92 1583.88,463.05 1584.21,463.17 1584.53,463.29 1584.85,463.41 1585.17,463.52 1585.49,463.63 1585.81,463.72 1586.14,463.81 1586.46,463.89 1586.78,463.96 1587.10,464.01 1587.42,464.06 1587.75,464.10 1588.07,464.12 1588.39,464.13 1588.71,464.13 1589.03,464.12 1589.36,464.10 1589.68,464.07 1590.00,464.04 1590.32,463.99 1590.64,463.94 1590.97,463.88 1591.29,463.82 1591.61,463.75 1591.93,463.69 1592.25,463.62 1592.58,463.55 1592.90,463.48 1593.22,463.41 1593.54,463.35 1593.86,463.30 1594.19,463.25 1594.51,463.21 1594.83,463.17 1595.15,463.15 1595.47,463.13 1595.80,463.13 1596.12,463.13 1596.44,463.14 1596.76,463.17 1597.08,463.20 1597.41,463.24 1597.73,463.29 1598.05,463.35 1598.37,463.41 1598.69,463.49 1599.02,463.56 1599.34,463.65 1599.66,463.73 1599.98,463.82 1600.30,463.91 1600.63,464.00 1600.95,464.09 1601.27,464.18 1601.59,464.26 1601.91,464.34 1602.24,464.42 1602.56,464.49 1602.88,464.55 1603.20,464.61 1603.52,464.66 1603.84,464.70 1604.17,464.74 1604.49,464.76 1604.81,464.78 1605.13,464.79 1605.45,464.79 1605.78,464.79 1606.10,464.78 1606.42,464.76 1606.74,464.73 1607.06,464.70 1607.39,464.66 1607.71,464.62 1608.03,464.58 1608.35,464.53 1608.67,464.48 1609.00,464.43 1609.32,464.38 1609.64,464.34 1609.96,464.29 1610.28,464.24 1610.61,464.20 1610.93,464.17 1611.25,464.14" fill="none" stroke="#1f77b4" stroke-width="2.9" stroke-linejoin="round" stroke-linecap="butt"/>
<polyline clip-path="url(#c32)" points="1385.88,333.90 1386.20,335.32 1386.52,336.24 1386.84,336.63 1387.16,336.48 1387.49,335.78 1387.81,334.54 1388.13,332.81 1388.45,330.60 1388.77,327.99 1389.10,325.01 1389.42,321.72 1389.74,318.20 1390.06,314.51 1390.38,310.72 1390.71,306.90 1391.03,303.12 1391.35,299.44 1391.67,295.95 1391.99,292.68 1392.32,289.72 1392.64,287.10 1392.96,284.88 1393.28,283.10 1393.60,281.79 1393.93,280.98 1394.25,280.69 1394.57,280.93 1394.89,281.70 1395.21,283.00 1395.54,284.82 1395.86,287.13 1396.18,289.92 1396.50,293.15 1396.82,296.78 1397.15,300.76 1397.47,305.05 1397.79,309.59 1398.11,314.34 1398.43,319.22 1398.75,324.18 1399.08,329.17 1399.40,334.11 1399.72,338.96 1400.04,343.65 1400.36,348.14 1400.69,352.37 1401.01,356.30 1401.33,359.88 1401.65,363.09 1401.97,365.89 1402.30,368.26 1402.62,370.18 1402.94,371.64 1403.26,372.64 1403.58,373.18 1403.91,373.28 1404.23,372.94 1404.55,372.19 1404.87,371.05 1405.19,369.57 1405.52,367.77 1405.84,365.70 1406.16,363.39 1406.48,360.91 1406.80,358.30 1407.13,355.60 1407.45,352.87 1407.77,350.16 1408.09,347.52 1408.41,345.00 1408.74,342.64 1409.06,340.48 1409.38,338.56 1409.70,336.93 1410.02,335.60 1410.35,334.60 1410.67,333.96 1410.99,333.69 1411.31,333.79 1411.63,334.28 1411.96,335.15 1412.28,336.38 1412.60,337.98 1412.92,339.92 1413.24,342.17 1413.57,344.72 1413.89,347.52 1414.21,350.55 1414.53,353.77 1414.85,357.14 1415.18,360.62 1415.50,364.16 1415.82,367.72 1416.14,371.26 1416.46,374.74 1416.78,378.12 1417.11,381.35 1417.43,384.41 1417.75,387.26 1418.07,389.86 1418.39,392.20 1418.72,394.25 1419.04,396.00 1419.36,397.43 1419.68,398.53 1420.00,399.30 1420.33,399.75 1420.65,399.87 1420.97,399.68 1421.29,399.19 1421.61,398.42 1421.94,397.40 1422.26,396.15 1422.58,394.70 1422.90,393.08 1423.22,391.33 1423.55,389.47 1423.87,387.55 1424.19,385.61 1424.51,383.66 1424.83,381.77 1425.16,379.94 1425.48,378.23 1425.80,376.66 1426.12,375.26 1426.44,374.06 1426.77,373.07 1427.09,372.32 1427.41,371.82 1427.73,371.57 1428.05,371.60 1428.38,371.90 1428.70,372.48 1429.02,373.32 1429.34,374.41 1429.66,375.76 1429.99,377.33 1430.31,379.12 1430.63,381.09 1430.95,383.23 1431.27,385.52 1431.60,387.91 1431.92,390.38 1432.24,392.90 1432.56,395.45 1432.88,397.99 1433.20,400.48 1433.53,402.91 1433.85,405.24 1434.17,407.45 1434.49,409.51 1434.81,411.41 1435.14,413.11 1435.46,414.61 1435.78,415.90 1436.10,416.96 1436.42,417.79 1436.75,418.38 1437.07,418.74 1437.39,418.86 1437.71,418.76 1438.03,418.45 1438.36,417.94 1438.68,417.24 1439.00,416.37 1439.32,415.36 1439.64,414.22 1439.97,412.98 1440.29,411.66 1440.61,410.30 1440.93,408.91 1441.25,407.52 1441.58,406.15 1441.90,404.84 1442.22,403.60 1442.54,402.46 1442.86,401.44 1443.19,400.55 1443.51,399.82 1443.83,399.25 1444.15,398.86 1444.47,398.65 1444.80,398.64 1445.12,398.82 1445.44,399.20 1445.76,399.77 1446.08,400.52 1446.41,401.45 1446.73,402.55 1447.05,403.80 1447.37,405.19 1447.69,406.70 1448.02,408.32 1448.34,410.02 1448.66,411.77 1448.98,413.57 1449.30,415.39 1449.63,417.21 1449.95,419.00 1450.27,420.74 1450.59,422.42 1450.91,424.02 1451.23,425.51 1451.56,426.89 1451.88,428.13 1452.20,429.23 1452.52,430.17 1452.84,430.96 1453.17,431.58 1453.49,432.03 1453.81,432.32 1454.13,432.43 1454.45,432.39 1454.78,432.19 1455.10,431.85 1455.42,431.37 1455.74,430.77 1456.06,430.06 1456.39,429.26 1456.71,428.39 1457.03,427.46 1457.35,426.48 1457.67,425.49 1458.00,424.50 1458.32,423.52 1458.64,422.57 1458.96,421.68 1459.28,420.85 1459.61,420.10 1459.93,419.45 1460.25,418.91 1460.57,418.48 1460.89,418.18 1461.22,418.01 1461.54,417.98 1461.86,418.08 1462.18,418.33 1462.50,418.71 1462.83,419.23 1463.15,419.87 1463.47,420.64 1463.79,421.51 1464.11,422.49 1464.44,423.56 1464.76,424.70 1465.08,425.90 1465.40,427.15 1465.72,428.44 1466.05,429.74 1466.37,431.03 1466.69,432.32 1467.01,433.57 1467.33,434.78 1467.65,435.93 1467.98,437.01 1468.30,438.01 1468.62,438.92 1468.94,439.72 1469.26,440.42 1469.59,441.00 1469.91,441.46 1470.23,441.80 1470.55,442.03 1470.87,442.13 1471.20,442.12 1471.52,442.00 1471.84,441.77 1472.16,441.44 1472.48,441.03 1472.81,440.53 1473.13,439.97 1473.45,439.36 1473.77,438.70 1474.09,438.00 1474.42,437.30 1474.74,436.58 1475.06,435.88 1475.38,435.20 1475.70,434.55 1476.03,433.95 1476.35,433.41 1476.67,432.93 1476.99,432.53 1477.31,432.21 1477.64,431.98 1477.96,431.84 1478.28,431.80 1478.60,431.86 1478.92,432.02 1479.25,432.28 1479.57,432.63 1479.89,433.07 1480.21,433.61 1480.53,434.22 1480.86,434.91 1481.18,435.66 1481.50,436.47 1481.82,437.32 1482.14,438.21 1482.47,439.12 1482.79,440.05 1483.11,440.98 1483.43,441.90 1483.75,442.80 1484.07,443.67 1484.40,444.50 1484.72,445.28 1485.04,446.01 1485.36,446.66 1485.68,447.25 1486.01,447.76 1486.33,448.19 1486.65,448.54 1486.97,448.80 1487.29,448.97 1487.62,449.06 1487.94,449.07 1488.26,448.99 1488.58,448.84 1488.90,448.62 1489.23,448.33 1489.55,447.99 1489.87,447.60 1490.19,447.16 1490.51,446.70 1490.84,446.20 1491.16,445.70 1491.48,445.19 1491.80,444.69 1492.12,444.20 1492.45,443.73 1492.77,443.29 1493.09,442.90 1493.41,442.55 1493.73,442.25 1494.06,442.01 1494.38,441.84 1494.70,441.73 1495.02,441.69 1495.34,441.72 1495.67,441.82 1495.99,441.99 1496.31,442.23 1496.63,442.54 1496.95,442.91 1497.28,443.34 1497.60,443.82 1497.92,444.35 1498.24,444.92 1498.56,445.52 1498.89,446.16 1499.21,446.81 1499.53,447.47 1499.85,448.13 1500.17,448.79 1500.50,449.44 1500.82,450.06 1501.14,450.66 1501.46,451.23 1501.78,451.75 1502.10,452.23 1502.43,452.66 1502.75,453.04 1503.07,453.35 1503.39,453.61 1503.71,453.81 1504.04,453.94 1504.36,454.02 1504.68,454.03 1505.00,453.99 1505.32,453.89 1505.65,453.74 1505.97,453.54 1506.29,453.30 1506.61,453.03 1506.93,452.72 1507.26,452.39 1507.58,452.04 1507.90,451.68 1508.22,451.32 1508.54,450.96 1508.87,450.60 1509.19,450.27 1509.51,449.95 1509.83,449.66 1510.15,449.41 1510.48,449.19 1510.80,449.01 1511.12,448.88 1511.44,448.79 1511.76,448.75 1512.09,448.76 1512.41,448.83 1512.73,448.94 1513.05,449.11 1513.37,449.32 1513.70,449.57 1514.02,449.87 1514.34,450.21 1514.66,450.59 1514.98,450.99 1515.31,451.42 1515.63,451.87 1515.95,452.33 1516.27,452.80 1516.59,453.28 1516.92,453.75 1517.24,454.21 1517.56,454.66 1517.88,455.09 1518.20,455.50 1518.52,455.88 1518.85,456.23 1519.17,456.54 1519.49,456.82 1519.81,457.05 1520.13,457.24 1520.46,457.39 1520.78,457.50 1521.10,457.56 1521.42,457.57 1521.74,457.55 1522.07,457.49 1522.39,457.38 1522.71,457.25 1523.03,457.08 1523.35,456.89 1523.68,456.67 1524.00,456.44 1524.32,456.19 1524.64,455.94 1524.96,455.68 1525.29,455.42 1525.61,455.17 1525.93,454.92 1526.25,454.70 1526.57,454.49 1526.90,454.30 1527.22,454.14 1527.54,454.00 1527.86,453.90 1528.18,453.84 1528.51,453.80 1528.83,453.81 1529.15,453.84 1529.47,453.92 1529.79,454.03 1530.12,454.18 1530.44,454.35 1530.76,454.56 1531.08,454.80 1531.40,455.06 1531.73,455.35 1532.05,455.65 1532.37,455.97 1532.69,456.30 1533.01,456.64 1533.34,456.98 1533.66,457.31 1533.98,457.65 1534.30,457.97 1534.62,458.28 1534.94,458.58 1535.27,458.85 1535.59,459.11 1535.91,459.33 1536.23,459.53 1536.55,459.71 1536.88,459.85 1537.20,459.96 1537.52,460.04 1537.84,460.09 1538.16,460.11 1538.49,460.09 1538.81,460.05 1539.13,459.98 1539.45,459.89 1539.77,459.78 1540.10,459.64 1540.42,459.49 1540.74,459.33 1541.06,459.15 1541.38,458.97 1541.71,458.78 1542.03,458.60 1542.35,458.42 1542.67,458.24 1542.99,458.08 1543.32,457.92 1543.64,457.79 1543.96,457.67 1544.28,457.57 1544.60,457.49 1544.93,457.44 1545.25,457.41 1545.57,457.41 1545.89,457.43 1546.21,457.48 1546.54,457.56 1546.86,457.66 1547.18,457.78 1547.50,457.93 1547.82,458.09 1548.15,458.28 1548.47,458.48 1548.79,458.69 1549.11,458.92 1549.43,459.16 1549.76,459.39 1550.08,459.64 1550.40,459.88 1550.72,460.12 1551.04,460.35 1551.37,460.58 1551.69,460.79 1552.01,460.99 1552.33,461.17 1552.65,461.34 1552.97,461.48 1553.30,461.61 1553.62,461.72 1553.94,461.80 1554.26,461.86 1554.58,461.90 1554.91,461.91 1555.23,461.91 1555.55,461.88 1555.87,461.84 1556.19,461.78 1556.52,461.70 1556.84,461.60 1557.16,461.50 1557.48,461.38 1557.80,461.25 1558.13,461.13 1558.45,460.99 1558.77,460.86 1559.09,460.73 1559.41,460.60 1559.74,460.48 1560.06,460.37 1560.38,460.27 1560.70,460.19 1561.02,460.11 1561.35,460.06 1561.67,460.02 1561.99,459.99 1562.31,459.99 1562.63,460.00 1562.96,460.03 1563.28,460.08 1563.60,460.15 1563.92,460.24 1564.24,460.34 1564.57,460.46 1564.89,460.59 1565.21,460.73 1565.53,460.88 1565.85,461.04 1566.18,461.21 1566.50,461.38 1566.82,461.55 1567.14,461.72 1567.46,461.90 1567.79,462.06 1568.11,462.22 1568.43,462.38 1568.75,462.52 1569.07,462.66 1569.39,462.78 1569.72,462.88 1570.04,462.98 1570.36,463.05 1570.68,463.12 1571.00,463.16 1571.33,463.19 1571.65,463.21 1571.97,463.21 1572.29,463.19 1572.61,463.16 1572.94,463.12 1573.26,463.06 1573.58,463.00 1573.90,462.92 1574.22,462.84 1574.55,462.75 1574.87,462.66 1575.19,462.57 1575.51,462.47 1575.83,462.38 1576.16,462.29 1576.48,462.20 1576.80,462.12 1577.12,462.05 1577.44,461.98 1577.77,461.93 1578.09,461.89 1578.41,461.86 1578.73,461.84 1579.05,461.83 1579.38,461.84 1579.70,461.86 1580.02,461.89 1580.34,461.94 1580.66,462.00 1580.99,462.07 1581.31,462.15 1581.63,462.24 1581.95,462.34 1582.27,462.45 1582.60,462.56 1582.92,462.68 1583.24,462.80 1583.56,462.93 1583.88,463.05 1584.21,463.17 1584.53,463.29 1584.85,463.41 1585.17,463.52 1585.49,463.63 1585.81,463.72 1586.14,463.81 1586.46,463.89 1586.78,463.96 1587.10,464.01 1587.42,464.06 1587.75,464.10 1588.07,464.12 1588.39,464.13 1588.71,464.13 1589.03,464.12 1589.36,464.10 1589.68,464.07 1590.00,464.04 1590.32,463.99 1590.64,463.94 1590.97,463.88 1591.29,463.82 1591.61,463.75 1591.93,463.69 1592.25,463.62 1592.58,463.55 1592.90,463.48 1593.22,463.42 1593.54,463.36 1593.86,463.31 1594.19,463.26 1594.51,463.22 1594.83,463.19 1595.15,463.17 1595.47,463.15 1595.80,463.15 1596.12,463.15 1596.44,463.17 1596.76,463.19 1597.08,463.22 1597.41,463.26 1597.73,463.31 1598.05,463.37 1598.37,463.43 1598.69,463.50 1599.02,463.58 1599.34,463.66 1599.66,463.74 1599.98,463.83 1600.30,463.92 1600.63,464.01 1600.95,464.09 1601.27,464.18 1601.59,464.26 1601.91,464.34 1602.24,464.42 1602.56,464.49 1602.88,464.55 1603.20,464.61 1603.52,464.66 1603.84,464.70 1604.17,464.74 1604.49,464.76 1604.81,464.78 1605.13,464.79 1605.45,464.79 1605.78,464.79 1606.10,464.78 1606.42,464.76 1606.74,464.73 1607.06,464.70 1607.39,464.66 1607.71,464.62 1608.03,464.58 1608.35,464.53 1608.67,464.48 1609.00,464.43 1609.32,464.39 1609.64,464.34 1609.96,464.29 1610.28,464.25 1610.61,464.21 1610.93,464.18 1611.25,464.15" fill="none" stroke="#ff7f0e" stroke-width="2.9" stroke-linejoin="round" stroke-linecap="butt"/>
<line x1="1383.60" y1="501.15" x2="1383.60" y2="510.75" stroke="#000" stroke-width="1.6"/>
<text x="1383.80" y="528.75" font-size="15" letter-spacing="0.45" text-anchor="middle" fill="#111">0.0</text>
<line x1="1440.51" y1="501.15" x2="1440.51" y2="510.75" stroke="#000" stroke-width="1.6"/>
<text x="1440.71" y="528.75" font-size="15" letter-spacing="0.45" text-anchor="middle" fill="#111">2.5</text>
<line x1="1497.42" y1="501.15" x2="1497.42" y2="510.75" stroke="#000" stroke-width="1.6"/>
<text x="1497.62" y="528.75" font-size="15" letter-spacing="0.45" text-anchor="middle" fill="#111">5.0</text>
<line x1="1554.34" y1="501.15" x2="1554.34" y2="510.75" stroke="#000" stroke-width="1.6"/>
<text x="1554.54" y="528.75" font-size="15" letter-spacing="0.45" text-anchor="middle" fill="#111">7.5</text>
<line x1="1611.25" y1="501.15" x2="1611.25" y2="510.75" stroke="#000" stroke-width="1.6"/>
<text x="1611.45" y="528.75" font-size="15" letter-spacing="0.45" text-anchor="middle" fill="#111">10.0</text>
<line x1="1374.0" y1="466.45" x2="1383.6" y2="466.45" stroke="#000" stroke-width="1.6"/>
<text x="1367.45" y="473.15" font-size="15" letter-spacing="0.7" text-anchor="end" fill="#111">0</text>
<line x1="1374.0" y1="422.55" x2="1383.6" y2="422.55" stroke="#000" stroke-width="1.6"/>
<text x="1367.45" y="429.25" font-size="15" letter-spacing="0.7" text-anchor="end" fill="#111">20000</text>
<line x1="1374.0" y1="378.65" x2="1383.6" y2="378.65" stroke="#000" stroke-width="1.6"/>
<text x="1367.45" y="385.35" font-size="15" letter-spacing="0.7" text-anchor="end" fill="#111">40000</text>
<line x1="1374.0" y1="334.75" x2="1383.6" y2="334.75" stroke="#000" stroke-width="1.6"/>
<text x="1367.45" y="341.45" font-size="15" letter-spacing="0.7" text-anchor="end" fill="#111">60000</text>
<line x1="1374.0" y1="290.85" x2="1383.6" y2="290.85" stroke="#000" stroke-width="1.6"/>
<text x="1367.45" y="297.55" font-size="15" letter-spacing="0.7" text-anchor="end" fill="#111">80000</text>
<line x1="1374.0" y1="246.95" x2="1383.6" y2="246.95" stroke="#000" stroke-width="1.6"/>
<text x="1367.45" y="253.65" font-size="15" letter-spacing="0.7" text-anchor="end" fill="#111">100000</text>
<rect x="1383.6" y="243.2" width="227.6500000000001" height="257.95" fill="none" stroke="#000" stroke-width="1.6"/>
<text x="1497.42" y="233.70" font-size="19.1" text-anchor="middle" fill="#111">top</text>
<text x="1497.42" y="551.45" font-size="15" letter-spacing="0.4" text-anchor="middle" fill="#111">Time (<tspan font-style="italic">µs</tspan>)</text>
<text transform="translate(1296.00,372.17) rotate(-90)" font-size="15" letter-spacing="0.35" text-anchor="middle" fill="#111">Counts</text>
<rect x="1408.2" y="247" width="198.79999999999995" height="27.600000000000023" rx="1.5" fill="#fff" fill-opacity="0.8" stroke="#ccc" stroke-width="1"/>
<line x1="1410.90" y1="253.80" x2="1429.20" y2="253.80" stroke="#1f77b4" stroke-width="2.4"/>
<text x="1433.80" y="257.00" font-size="8.9" fill="#111" style="font-family:'DejaVu Sans Condensed','DejaVu Sans',sans-serif">62260 top</text>
<line x1="1410.90" y1="266.30" x2="1429.20" y2="266.30" stroke="#ff7f0e" stroke-width="2.4"/>
<text x="1433.80" y="269.50" font-size="8.9" fill="#111" style="font-family:'DejaVu Sans Condensed','DejaVu Sans',sans-serif">62260 top ;MaxEnt_reconstructed_spectra</text>
<clipPath id="c66"><rect x="1749.2" y="243.2" width="228.89999999999986" height="257.95"/></clipPath>
<polyline clip-path="url(#c66)" points="1751.49,287.70 1751.81,293.14 1752.14,298.66 1752.46,304.20 1752.78,309.70 1753.11,315.09 1753.43,320.31 1753.76,325.30 1754.08,330.01 1754.40,334.38 1754.73,338.37 1755.05,341.95 1755.37,345.08 1755.70,347.73 1756.02,349.89 1756.34,351.55 1756.67,352.70 1756.99,353.35 1757.32,353.50 1757.64,353.18 1757.96,352.41 1758.29,351.21 1758.61,349.63 1758.93,347.71 1759.26,345.49 1759.58,343.02 1759.91,340.35 1760.23,337.53 1760.55,334.63 1760.88,331.69 1761.20,328.78 1761.52,325.94 1761.85,323.23 1762.17,320.70 1762.50,318.40 1762.82,316.36 1763.14,314.63 1763.47,313.24 1763.79,312.22 1764.11,311.58 1764.44,311.35 1764.76,311.53 1765.09,312.13 1765.41,313.15 1765.73,314.58 1766.06,316.40 1766.38,318.59 1766.70,321.13 1767.03,323.99 1767.35,327.13 1767.68,330.52 1768.00,334.11 1768.32,337.87 1768.65,341.74 1768.97,345.68 1769.29,349.64 1769.62,353.58 1769.94,357.45 1770.27,361.21 1770.59,364.80 1770.91,368.20 1771.24,371.37 1771.56,374.27 1771.88,376.88 1772.21,379.18 1772.53,381.13 1772.86,382.74 1773.18,383.98 1773.50,384.87 1773.83,385.39 1774.15,385.56 1774.47,385.39 1774.80,384.89 1775.12,384.08 1775.45,383.00 1775.77,381.67 1776.09,380.11 1776.42,378.37 1776.74,376.49 1777.06,374.49 1777.39,372.42 1777.71,370.32 1778.03,368.24 1778.36,366.20 1778.68,364.24 1779.01,362.41 1779.33,360.73 1779.65,359.24 1779.98,357.97 1780.30,356.93 1780.62,356.15 1780.95,355.65 1781.27,355.43 1781.60,355.51 1781.92,355.89 1782.24,356.57 1782.57,357.54 1782.89,358.79 1783.21,360.31 1783.54,362.09 1783.86,364.09 1784.19,366.31 1784.51,368.70 1784.83,371.25 1785.16,373.91 1785.48,376.67 1785.80,379.48 1786.13,382.31 1786.45,385.13 1786.78,387.91 1787.10,390.61 1787.42,393.20 1787.75,395.66 1788.07,397.95 1788.39,400.06 1788.72,401.96 1789.04,403.64 1789.37,405.08 1789.69,406.27 1790.01,407.21 1790.34,407.88 1790.66,408.30 1790.98,408.46 1791.31,408.38 1791.63,408.06 1791.96,407.52 1792.28,406.78 1792.60,405.86 1792.93,404.77 1793.25,403.55 1793.57,402.22 1793.90,400.80 1794.22,399.33 1794.55,397.83 1794.87,396.34 1795.19,394.87 1795.52,393.46 1795.84,392.14 1796.16,390.92 1796.49,389.83 1796.81,388.89 1797.13,388.12 1797.46,387.53 1797.78,387.13 1798.11,386.94 1798.43,386.97 1798.75,387.20 1799.08,387.65 1799.40,388.31 1799.72,389.17 1800.05,390.22 1800.37,391.46 1800.70,392.87 1801.02,394.43 1801.34,396.12 1801.67,397.92 1801.99,399.81 1802.31,401.77 1802.64,403.78 1802.96,405.80 1803.29,407.82 1803.61,409.81 1803.93,411.75 1804.26,413.62 1804.58,415.39 1804.90,417.05 1805.23,418.58 1805.55,419.97 1805.88,421.20 1806.20,422.25 1806.52,423.14 1806.85,423.84 1807.17,424.35 1807.49,424.68 1807.82,424.83 1808.14,424.80 1808.47,424.60 1808.79,424.24 1809.11,423.74 1809.44,423.10 1809.76,422.34 1810.08,421.48 1810.41,420.54 1810.73,419.54 1811.06,418.49 1811.38,417.42 1811.70,416.35 1812.03,415.30 1812.35,414.28 1812.67,413.32 1813.00,412.44 1813.32,411.64 1813.65,410.95 1813.97,410.38 1814.29,409.94 1814.62,409.63 1814.94,409.47 1815.26,409.46 1815.59,409.60 1815.91,409.89 1816.24,410.34 1816.56,410.93 1816.88,411.66 1817.21,412.52 1817.53,413.51 1817.85,414.61 1818.18,415.80 1818.50,417.08 1818.82,418.42 1819.15,419.81 1819.47,421.24 1819.80,422.69 1820.12,424.13 1820.44,425.56 1820.77,426.95 1821.09,428.30 1821.41,429.58 1821.74,430.78 1822.06,431.89 1822.39,432.90 1822.71,433.80 1823.03,434.57 1823.36,435.23 1823.68,435.75 1824.00,436.14 1824.33,436.40 1824.65,436.52 1824.98,436.52 1825.30,436.40 1825.62,436.17 1825.95,435.82 1826.27,435.38 1826.59,434.85 1826.92,434.25 1827.24,433.59 1827.57,432.88 1827.89,432.13 1828.21,431.37 1828.54,430.60 1828.86,429.85 1829.18,429.12 1829.51,428.42 1829.83,427.78 1830.16,427.20 1830.48,426.69 1830.80,426.27 1831.13,425.94 1831.45,425.70 1831.77,425.57 1832.10,425.54 1832.42,425.62 1832.75,425.82 1833.07,426.11 1833.39,426.52 1833.72,427.03 1834.04,427.63 1834.36,428.32 1834.69,429.09 1835.01,429.93 1835.34,430.83 1835.66,431.78 1835.98,432.78 1836.31,433.79 1836.63,434.82 1836.95,435.86 1837.28,436.88 1837.60,437.88 1837.92,438.85 1838.25,439.77 1838.57,440.64 1838.90,441.45 1839.22,442.18 1839.54,442.84 1839.87,443.41 1840.19,443.89 1840.51,444.28 1840.84,444.58 1841.16,444.78 1841.49,444.88 1841.81,444.90 1842.13,444.83 1842.46,444.67 1842.78,444.44 1843.10,444.13 1843.43,443.77 1843.75,443.34 1844.08,442.88 1844.40,442.37 1844.72,441.85 1845.05,441.30 1845.37,440.76 1845.69,440.21 1846.02,439.69 1846.34,439.19 1846.67,438.72 1846.99,438.30 1847.31,437.92 1847.64,437.61 1847.96,437.36 1848.28,437.18 1848.61,437.07 1848.93,437.04 1849.26,437.09 1849.58,437.21 1849.90,437.41 1850.23,437.69 1850.55,438.04 1850.87,438.46 1851.20,438.94 1851.52,439.48 1851.85,440.07 1852.17,440.71 1852.49,441.39 1852.82,442.09 1853.14,442.82 1853.46,443.55 1853.79,444.29 1854.11,445.02 1854.44,445.74 1854.76,446.44 1855.08,447.11 1855.41,447.73 1855.73,448.32 1856.05,448.85 1856.38,449.33 1856.70,449.75 1857.02,450.10 1857.35,450.39 1857.67,450.62 1858.00,450.77 1858.32,450.86 1858.64,450.88 1858.97,450.84 1859.29,450.74 1859.61,450.58 1859.94,450.37 1860.26,450.12 1860.59,449.82 1860.91,449.49 1861.23,449.14 1861.56,448.76 1861.88,448.37 1862.20,447.98 1862.53,447.59 1862.85,447.22 1863.18,446.85 1863.50,446.52 1863.82,446.21 1864.15,445.94 1864.47,445.70 1864.79,445.52 1865.12,445.38 1865.44,445.29 1865.77,445.26 1866.09,445.28 1866.41,445.36 1866.74,445.50 1867.06,445.69 1867.38,445.93 1867.71,446.22 1868.03,446.56 1868.36,446.94 1868.68,447.35 1869.00,447.81 1869.33,448.28 1869.65,448.78 1869.97,449.30 1870.30,449.83 1870.62,450.35 1870.95,450.88 1871.27,451.39 1871.59,451.90 1871.92,452.38 1872.24,452.83 1872.56,453.25 1872.89,453.64 1873.21,453.99 1873.54,454.30 1873.86,454.56 1874.18,454.77 1874.51,454.94 1874.83,455.06 1875.15,455.13 1875.48,455.15 1875.80,455.13 1876.13,455.07 1876.45,454.96 1876.77,454.82 1877.10,454.64 1877.42,454.43 1877.74,454.20 1878.07,453.95 1878.39,453.69 1878.71,453.41 1879.04,453.13 1879.36,452.85 1879.69,452.58 1880.01,452.32 1880.33,452.07 1880.66,451.85 1880.98,451.65 1881.30,451.48 1881.63,451.34 1881.95,451.24 1882.28,451.17 1882.60,451.14 1882.92,451.15 1883.25,451.20 1883.57,451.29 1883.89,451.42 1884.22,451.58 1884.54,451.78 1884.87,452.02 1885.19,452.29 1885.51,452.58 1885.84,452.90 1886.16,453.24 1886.48,453.59 1886.81,453.96 1887.13,454.33 1887.46,454.71 1887.78,455.09 1888.10,455.46 1888.43,455.82 1888.75,456.17 1889.07,456.49 1889.40,456.80 1889.72,457.08 1890.05,457.34 1890.37,457.56 1890.69,457.75 1891.02,457.91 1891.34,458.04 1891.66,458.13 1891.99,458.19 1892.31,458.21 1892.64,458.20 1892.96,458.16 1893.28,458.09 1893.61,457.99 1893.93,457.86 1894.25,457.72 1894.58,457.56 1894.90,457.38 1895.23,457.19 1895.55,457.00 1895.87,456.80 1896.20,456.60 1896.52,456.40 1896.84,456.21 1897.17,456.04 1897.49,455.87 1897.81,455.73 1898.14,455.60 1898.46,455.50 1898.79,455.42 1899.11,455.37 1899.43,455.34 1899.76,455.34 1900.08,455.37 1900.40,455.43 1900.73,455.52 1901.05,455.63 1901.38,455.77 1901.70,455.94 1902.02,456.12 1902.35,456.33 1902.67,456.56 1902.99,456.80 1903.32,457.05 1903.64,457.31 1903.97,457.58 1904.29,457.85 1904.61,458.12 1904.94,458.38 1905.26,458.64 1905.58,458.89 1905.91,459.13 1906.23,459.35 1906.56,459.55 1906.88,459.74 1907.20,459.90 1907.53,460.04 1907.85,460.16 1908.17,460.26 1908.50,460.32 1908.82,460.37 1909.15,460.39 1909.47,460.39 1909.79,460.36 1910.12,460.31 1910.44,460.25 1910.76,460.16 1911.09,460.06 1911.41,459.95 1911.74,459.82 1912.06,459.69 1912.38,459.55 1912.71,459.41 1913.03,459.26 1913.35,459.12 1913.68,458.99 1914.00,458.86 1914.33,458.74 1914.65,458.63 1914.97,458.54 1915.30,458.47 1915.62,458.41 1915.94,458.36 1916.27,458.34 1916.59,458.34 1916.92,458.36 1917.24,458.40 1917.56,458.46 1917.89,458.53 1918.21,458.63 1918.53,458.75 1918.86,458.88 1919.18,459.02 1919.50,459.18 1919.83,459.35 1920.15,459.53 1920.48,459.72 1920.80,459.91 1921.12,460.10 1921.45,460.29 1921.77,460.48 1922.09,460.67 1922.42,460.85 1922.74,461.02 1923.07,461.18 1923.39,461.33 1923.71,461.46 1924.04,461.58 1924.36,461.69 1924.68,461.77 1925.01,461.84 1925.33,461.90 1925.66,461.93 1925.98,461.95 1926.30,461.95 1926.63,461.93 1926.95,461.90 1927.27,461.86 1927.60,461.80 1927.92,461.73 1928.25,461.65 1928.57,461.56 1928.89,461.47 1929.22,461.37 1929.54,461.26 1929.86,461.16 1930.19,461.06 1930.51,460.96 1930.84,460.87 1931.16,460.79 1931.48,460.71 1931.81,460.64 1932.13,460.58 1932.45,460.54 1932.78,460.51 1933.10,460.49 1933.43,460.48 1933.75,460.50 1934.07,460.52 1934.40,460.56 1934.72,460.61 1935.04,460.68 1935.37,460.76 1935.69,460.85 1936.02,460.96 1936.34,461.07 1936.66,461.19 1936.99,461.31 1937.31,461.45 1937.63,461.58 1937.96,461.72 1938.28,461.86 1938.60,461.99 1938.93,462.13 1939.25,462.26 1939.58,462.38 1939.90,462.50 1940.22,462.60 1940.55,462.70 1940.87,462.79 1941.19,462.87 1941.52,462.93 1941.84,462.98 1942.17,463.02 1942.49,463.05 1942.81,463.06 1943.14,463.07 1943.46,463.06 1943.78,463.04 1944.11,463.00 1944.43,462.96 1944.76,462.92 1945.08,462.86 1945.40,462.80 1945.73,462.73 1946.05,462.66 1946.37,462.59 1946.70,462.51 1947.02,462.44 1947.35,462.37 1947.67,462.31 1947.99,462.24 1948.32,462.19 1948.64,462.14 1948.96,462.09 1949.29,462.06 1949.61,462.04 1949.94,462.02 1950.26,462.02 1950.58,462.02 1950.91,462.04 1951.23,462.07 1951.55,462.10 1951.88,462.15 1952.20,462.21 1952.53,462.27 1952.85,462.34 1953.17,462.42 1953.50,462.51 1953.82,462.60 1954.14,462.69 1954.47,462.79 1954.79,462.88 1955.12,462.98 1955.44,463.08 1955.76,463.18 1956.09,463.27 1956.41,463.36 1956.73,463.44 1957.06,463.52 1957.38,463.59 1957.71,463.65 1958.03,463.71 1958.35,463.76 1958.68,463.80 1959.00,463.83 1959.32,463.85 1959.65,463.86 1959.97,463.86 1960.29,463.86 1960.62,463.84 1960.94,463.82 1961.27,463.80 1961.59,463.76 1961.91,463.72 1962.24,463.68 1962.56,463.63 1962.88,463.58 1963.21,463.53 1963.53,463.48 1963.86,463.43 1964.18,463.38 1964.50,463.33 1964.83,463.28 1965.15,463.24 1965.47,463.20 1965.80,463.17 1966.12,463.15 1966.45,463.13 1966.77,463.12 1967.09,463.11 1967.42,463.12 1967.74,463.13 1968.06,463.14 1968.39,463.17 1968.71,463.20 1969.04,463.24 1969.36,463.29 1969.68,463.34 1970.01,463.39 1970.33,463.45 1970.65,463.52 1970.98,463.58 1971.30,463.65 1971.63,463.72 1971.95,463.79 1972.27,463.86 1972.60,463.93 1972.92,464.00 1973.24,464.06 1973.57,464.12 1973.89,464.18 1974.22,464.23 1974.54,464.28 1974.86,464.32 1975.19,464.35 1975.51,464.38 1975.83,464.40 1976.16,464.42 1976.48,464.43 1976.81,464.43 1977.13,464.43 1977.45,464.42 1977.78,464.41 1978.10,464.39" fill="none" stroke="#1f77b4" stroke-width="2.9" stroke-linejoin="round" stroke-linecap="butt"/>
<polyline clip-path="url(#c66)" points="1751.49,278.10 1751.81,285.51 1752.14,292.57 1752.46,299.30 1752.78,305.70 1753.11,311.79 1753.43,317.53 1753.76,322.92 1754.08,327.92 1754.40,332.51 1754.73,336.67 1755.05,340.37 1755.37,343.60 1755.70,346.33 1756.02,348.55 1756.34,350.27 1756.67,351.47 1756.99,352.18 1757.32,352.39 1757.64,352.14 1757.96,351.44 1758.29,350.32 1758.61,348.83 1758.93,347.00 1759.26,344.88 1759.58,342.51 1759.91,339.95 1760.23,337.25 1760.55,334.46 1760.88,331.64 1761.20,328.84 1761.52,326.11 1761.85,323.51 1762.17,321.08 1762.50,318.87 1762.82,316.91 1763.14,315.26 1763.47,313.93 1763.79,312.96 1764.11,312.37 1764.44,312.17 1764.76,312.37 1765.09,312.98 1765.41,313.99 1765.73,315.40 1766.06,317.19 1766.38,319.34 1766.70,321.83 1767.03,324.62 1767.35,327.70 1767.68,331.01 1768.00,334.52 1768.32,338.19 1768.65,341.97 1768.97,345.82 1769.29,349.69 1769.62,353.53 1769.94,357.31 1770.27,360.98 1770.59,364.49 1770.91,367.81 1771.24,370.91 1771.56,373.75 1771.88,376.30 1772.21,378.55 1772.53,380.47 1772.86,382.04 1773.18,383.27 1773.50,384.15 1773.83,384.68 1774.15,384.86 1774.47,384.72 1774.80,384.25 1775.12,383.49 1775.45,382.46 1775.77,381.18 1776.09,379.69 1776.42,378.02 1776.74,376.21 1777.06,374.29 1777.39,372.30 1777.71,370.28 1778.03,368.27 1778.36,366.31 1778.68,364.43 1779.01,362.67 1779.33,361.06 1779.65,359.63 1779.98,358.41 1780.30,357.42 1780.62,356.68 1780.95,356.21 1781.27,356.02 1781.60,356.11 1781.92,356.50 1782.24,357.17 1782.57,358.13 1782.89,359.36 1783.21,360.85 1783.54,362.59 1783.86,364.56 1784.19,366.72 1784.51,369.06 1784.83,371.55 1785.16,374.15 1785.48,376.84 1785.80,379.59 1786.13,382.35 1786.45,385.11 1786.78,387.82 1787.10,390.46 1787.42,392.99 1787.75,395.39 1788.07,397.63 1788.39,399.69 1788.72,401.55 1789.04,403.20 1789.37,404.61 1789.69,405.78 1790.01,406.70 1790.34,407.37 1790.66,407.79 1790.98,407.96 1791.31,407.90 1791.63,407.60 1791.96,407.09 1792.28,406.39 1792.60,405.50 1792.93,404.46 1793.25,403.29 1793.57,402.01 1793.90,400.65 1794.22,399.23 1794.55,397.79 1794.87,396.35 1795.19,394.94 1795.52,393.59 1795.84,392.31 1796.16,391.14 1796.49,390.10 1796.81,389.20 1797.13,388.46 1797.46,387.90 1797.78,387.53 1798.11,387.36 1798.43,387.39 1798.75,387.63 1799.08,388.08 1799.40,388.73 1799.72,389.58 1800.05,390.61 1800.37,391.83 1800.70,393.20 1801.02,394.73 1801.34,396.38 1801.67,398.14 1801.99,399.99 1802.31,401.91 1802.64,403.86 1802.96,405.84 1803.29,407.81 1803.61,409.75 1803.93,411.65 1804.26,413.47 1804.58,415.20 1804.90,416.83 1805.23,418.32 1805.55,419.68 1805.88,420.88 1806.20,421.92 1806.52,422.79 1806.85,423.48 1807.17,423.99 1807.49,424.32 1807.82,424.47 1808.14,424.45 1808.47,424.27 1808.79,423.93 1809.11,423.45 1809.44,422.84 1809.76,422.11 1810.08,421.29 1810.41,420.38 1810.73,419.42 1811.06,418.41 1811.38,417.39 1811.70,416.36 1812.03,415.34 1812.35,414.37 1812.67,413.44 1813.00,412.59 1813.32,411.83 1813.65,411.17 1813.97,410.62 1814.29,410.20 1814.62,409.91 1814.94,409.76 1815.26,409.76 1815.59,409.91 1815.91,410.20 1816.24,410.64 1816.56,411.22 1816.88,411.94 1817.21,412.79 1817.53,413.75 1817.85,414.83 1818.18,415.99 1818.50,417.24 1818.82,418.55 1819.15,419.91 1819.47,421.31 1819.80,422.72 1820.12,424.13 1820.44,425.52 1820.77,426.88 1821.09,428.20 1821.41,429.45 1821.74,430.62 1822.06,431.71 1822.39,432.70 1822.71,433.57 1823.03,434.34 1823.36,434.98 1823.68,435.49 1824.00,435.88 1824.33,436.14 1824.65,436.27 1824.98,436.28 1825.30,436.16 1825.62,435.94 1825.95,435.61 1826.27,435.19 1826.59,434.69 1826.92,434.11 1827.24,433.47 1827.57,432.79 1827.89,432.07 1828.21,431.34 1828.54,430.60 1828.86,429.88 1829.18,429.17 1829.51,428.51 1829.83,427.89 1830.16,427.33 1830.48,426.85 1830.80,426.44 1831.13,426.12 1831.45,425.90 1831.77,425.78 1832.10,425.76 1832.42,425.84 1832.75,426.04 1833.07,426.33 1833.39,426.73 1833.72,427.23 1834.04,427.82 1834.36,428.50 1834.69,429.25 1835.01,430.07 1835.34,430.95 1835.66,431.88 1835.98,432.85 1836.31,433.85 1836.63,434.85 1836.95,435.86 1837.28,436.86 1837.60,437.84 1837.92,438.78 1838.25,439.69 1838.57,440.54 1838.90,441.32 1839.22,442.04 1839.54,442.68 1839.87,443.24 1840.19,443.72 1840.51,444.10 1840.84,444.39 1841.16,444.59 1841.49,444.70 1841.81,444.72 1842.13,444.65 1842.46,444.51 1842.78,444.29 1843.10,444.00 1843.43,443.64 1843.75,443.24 1844.08,442.79 1844.40,442.31 1844.72,441.80 1845.05,441.28 1845.37,440.75 1845.69,440.23 1846.02,439.72 1846.34,439.24 1846.67,438.79 1846.99,438.39 1847.31,438.03 1847.64,437.73 1847.96,437.49 1848.28,437.32 1848.61,437.22 1848.93,437.19 1849.26,437.24 1849.58,437.37 1849.90,437.57 1850.23,437.84 1850.55,438.18 1850.87,438.59 1851.20,439.07 1851.52,439.60 1851.85,440.18 1852.17,440.80 1852.49,441.46 1852.82,442.15 1853.14,442.86 1853.46,443.57 1853.79,444.30 1854.11,445.01 1854.44,445.71 1854.76,446.39 1855.08,447.05 1855.41,447.66 1855.73,448.23 1856.05,448.75 1856.38,449.22 1856.70,449.63 1857.02,449.98 1857.35,450.26 1857.67,450.48 1858.00,450.64 1858.32,450.73 1858.64,450.75 1858.97,450.72 1859.29,450.62 1859.61,450.47 1859.94,450.27 1860.26,450.03 1860.59,449.74 1860.91,449.43 1861.23,449.09 1861.56,448.73 1861.88,448.35 1862.20,447.98 1862.53,447.60 1862.85,447.24 1863.18,446.89 1863.50,446.57 1863.82,446.27 1864.15,446.01 1864.47,445.79 1864.79,445.61 1865.12,445.48 1865.44,445.40 1865.77,445.37 1866.09,445.40 1866.41,445.48 1866.74,445.61 1867.06,445.80 1867.38,446.03 1867.71,446.32 1868.03,446.65 1868.36,447.02 1868.68,447.43 1869.00,447.87 1869.33,448.34 1869.65,448.83 1869.97,449.33 1870.30,449.84 1870.62,450.36 1870.95,450.87 1871.27,451.38 1871.59,451.87 1871.92,452.33 1872.24,452.78 1872.56,453.19 1872.89,453.57 1873.21,453.91 1873.54,454.21 1873.86,454.47 1874.18,454.68 1874.51,454.85 1874.83,454.96 1875.15,455.04 1875.48,455.06 1875.80,455.04 1876.13,454.98 1876.45,454.88 1876.77,454.74 1877.10,454.58 1877.42,454.38 1877.74,454.16 1878.07,453.91 1878.39,453.66 1878.71,453.39 1879.04,453.12 1879.36,452.86 1879.69,452.59 1880.01,452.34 1880.33,452.11 1880.66,451.89 1880.98,451.70 1881.30,451.54 1881.63,451.41 1881.95,451.31 1882.28,451.24 1882.60,451.22 1882.92,451.23 1883.25,451.28 1883.57,451.37 1883.89,451.49 1884.22,451.66 1884.54,451.86 1884.87,452.09 1885.19,452.35 1885.51,452.64 1885.84,452.95 1886.16,453.28 1886.48,453.63 1886.81,453.98 1887.13,454.35 1887.46,454.72 1887.78,455.09 1888.10,455.45 1888.43,455.80 1888.75,456.14 1889.07,456.46 1889.40,456.76 1889.72,457.03 1890.05,457.28 1890.37,457.50 1890.69,457.69 1891.02,457.85 1891.34,457.97 1891.66,458.06 1891.99,458.12 1892.31,458.14 1892.64,458.13 1892.96,458.09 1893.28,458.03 1893.61,457.93 1893.93,457.82 1894.25,457.68 1894.58,457.52 1894.90,457.35 1895.23,457.17 1895.55,456.98 1895.87,456.79 1896.20,456.60 1896.52,456.41 1896.84,456.23 1897.17,456.06 1897.49,455.90 1897.81,455.76 1898.14,455.64 1898.46,455.54 1898.79,455.47 1899.11,455.42 1899.43,455.39 1899.76,455.40 1900.08,455.43 1900.40,455.49 1900.73,455.57 1901.05,455.69 1901.38,455.82 1901.70,455.99 1902.02,456.17 1902.35,456.37 1902.67,456.59 1902.99,456.83 1903.32,457.07 1903.64,457.33 1903.97,457.59 1904.29,457.85 1904.61,458.11 1904.94,458.37 1905.26,458.63 1905.58,458.87 1905.91,459.10 1906.23,459.32 1906.56,459.52 1906.88,459.70 1907.20,459.86 1907.53,460.00 1907.85,460.12 1908.17,460.21 1908.50,460.28 1908.82,460.32 1909.15,460.34 1909.47,460.34 1909.79,460.32 1910.12,460.27 1910.44,460.21 1910.76,460.13 1911.09,460.03 1911.41,459.92 1911.74,459.80 1912.06,459.67 1912.38,459.54 1912.71,459.40 1913.03,459.26 1913.35,459.13 1913.68,459.00 1914.00,458.88 1914.33,458.76 1914.65,458.66 1914.97,458.57 1915.30,458.50 1915.62,458.44 1915.94,458.40 1916.27,458.38 1916.59,458.38 1916.92,458.40 1917.24,458.44 1917.56,458.50 1917.89,458.57 1918.21,458.67 1918.53,458.78 1918.86,458.91 1919.18,459.05 1919.50,459.21 1919.83,459.37 1920.15,459.55 1920.48,459.73 1920.80,459.92 1921.12,460.10 1921.45,460.29 1921.77,460.48 1922.09,460.66 1922.42,460.83 1922.74,461.00 1923.07,461.16 1923.39,461.30 1923.71,461.44 1924.04,461.55 1924.36,461.66 1924.68,461.74 1925.01,461.81 1925.33,461.86 1925.66,461.90 1925.98,461.91 1926.30,461.92 1926.63,461.90 1926.95,461.87 1927.27,461.83 1927.60,461.77 1927.92,461.71 1928.25,461.63 1928.57,461.54 1928.89,461.45 1929.22,461.36 1929.54,461.26 1929.86,461.16 1930.19,461.07 1930.51,460.97 1930.84,460.88 1931.16,460.80 1931.48,460.73 1931.81,460.66 1932.13,460.61 1932.45,460.56 1932.78,460.53 1933.10,460.52 1933.43,460.51 1933.75,460.52 1934.07,460.55 1934.40,460.59 1934.72,460.64 1935.04,460.71 1935.37,460.79 1935.69,460.88 1936.02,460.98 1936.34,461.09 1936.66,461.20 1936.99,461.33 1937.31,461.46 1937.63,461.59 1937.96,461.72 1938.28,461.86 1938.60,461.99 1938.93,462.12 1939.25,462.25 1939.58,462.37 1939.90,462.48 1940.22,462.59 1940.55,462.68 1940.87,462.77 1941.19,462.84 1941.52,462.91 1941.84,462.96 1942.17,463.00 1942.49,463.02 1942.81,463.04 1943.14,463.04 1943.46,463.03 1943.78,463.01 1944.11,462.98 1944.43,462.95 1944.76,462.90 1945.08,462.85 1945.40,462.79 1945.73,462.72 1946.05,462.65 1946.37,462.58 1946.70,462.51 1947.02,462.44 1947.35,462.38 1947.67,462.31 1947.99,462.25 1948.32,462.20 1948.64,462.15 1948.96,462.11 1949.29,462.08 1949.61,462.06 1949.94,462.04 1950.26,462.04 1950.58,462.04 1950.91,462.06 1951.23,462.09 1951.55,462.12 1951.88,462.17 1952.20,462.22 1952.53,462.29 1952.85,462.36 1953.17,462.43 1953.50,462.52 1953.82,462.61 1954.14,462.70 1954.47,462.79 1954.79,462.89 1955.12,462.98 1955.44,463.08 1955.76,463.17 1956.09,463.26 1956.41,463.35 1956.73,463.43 1957.06,463.51 1957.38,463.58 1957.71,463.64 1958.03,463.70 1958.35,463.74 1958.68,463.78 1959.00,463.81 1959.32,463.83 1959.65,463.84 1959.97,463.85 1960.29,463.84 1960.62,463.83 1960.94,463.81 1961.27,463.78 1961.59,463.75 1961.91,463.71 1962.24,463.67 1962.56,463.63 1962.88,463.58 1963.21,463.53 1963.53,463.48 1963.86,463.43 1964.18,463.38 1964.50,463.33 1964.83,463.29 1965.15,463.25 1965.47,463.21 1965.80,463.18 1966.12,463.16 1966.45,463.14 1966.77,463.13 1967.09,463.13 1967.42,463.13 1967.74,463.14 1968.06,463.16 1968.39,463.18 1968.71,463.22 1969.04,463.25 1969.36,463.30 1969.68,463.35 1970.01,463.40 1970.33,463.46 1970.65,463.52 1970.98,463.59 1971.30,463.65 1971.63,463.72 1971.95,463.79 1972.27,463.86 1972.60,463.93 1972.92,463.99 1973.24,464.06 1973.57,464.11 1973.89,464.17 1974.22,464.22 1974.54,464.27 1974.86,464.31 1975.19,464.34 1975.51,464.37 1975.83,464.39 1976.16,464.41 1976.48,464.42 1976.81,464.42 1977.13,464.42 1977.45,464.41 1977.78,464.40 1978.10,464.38" fill="none" stroke="#ff7f0e" stroke-width="2.9" stroke-linejoin="round" stroke-linecap="butt"/>
<line x1="1749.20" y1="501.15" x2="1749.20" y2="510.75" stroke="#000" stroke-width="1.6"/>
<text x="1749.40" y="528.75" font-size="15" letter-spacing="0.45" text-anchor="middle" fill="#111">0.0</text>
<line x1="1806.42" y1="501.15" x2="1806.42" y2="510.75" stroke="#000" stroke-width="1.6"/>
<text x="1806.62" y="528.75" font-size="15" letter-spacing="0.45" text-anchor="middle" fill="#111">2.5</text>
<line x1="1863.65" y1="501.15" x2="1863.65" y2="510.75" stroke="#000" stroke-width="1.6"/>
<text x="1863.85" y="528.75" font-size="15" letter-spacing="0.45" text-anchor="middle" fill="#111">5.0</text>
<line x1="1920.88" y1="501.15" x2="1920.88" y2="510.75" stroke="#000" stroke-width="1.6"/>
<text x="1921.08" y="528.75" font-size="15" letter-spacing="0.45" text-anchor="middle" fill="#111">7.5</text>
<line x1="1978.10" y1="501.15" x2="1978.10" y2="510.75" stroke="#000" stroke-width="1.6"/>
<text x="1978.30" y="528.75" font-size="15" letter-spacing="0.45" text-anchor="middle" fill="#111">10.0</text>
<line x1="1739.6000000000001" y1="500.21" x2="1749.2" y2="500.21" stroke="#000" stroke-width="1.6"/>
<text x="1733.05" y="506.91" font-size="15" letter-spacing="0.7" text-anchor="end" fill="#111">−25000</text>
<line x1="1739.6000000000001" y1="465.86" x2="1749.2" y2="465.86" stroke="#000" stroke-width="1.6"/>
<text x="1733.05" y="472.56" font-size="15" letter-spacing="0.7" text-anchor="end" fill="#111">0</text>
<line x1="1739.6000000000001" y1="431.51" x2="1749.2" y2="431.51" stroke="#000" stroke-width="1.6"/>
<text x="1733.05" y="438.21" font-size="15" letter-spacing="0.7" text-anchor="end" fill="#111">25000</text>
<line x1="1739.6000000000001" y1="397.16" x2="1749.2" y2="397.16" stroke="#000" stroke-width="1.6"/>
<text x="1733.05" y="403.86" font-size="15" letter-spacing="0.7" text-anchor="end" fill="#111">50000</text>
<line x1="1739.6000000000001" y1="362.81" x2="1749.2" y2="362.81" stroke="#000" stroke-width="1.6"/>
<text x="1733.05" y="369.51" font-size="15" letter-spacing="0.7" text-anchor="end" fill="#111">75000</text>
<line x1="1739.6000000000001" y1="328.46" x2="1749.2" y2="328.46" stroke="#000" stroke-width="1.6"/>
<text x="1733.05" y="335.16" font-size="15" letter-spacing="0.7" text-anchor="end" fill="#111">100000</text>
<line x1="1739.6000000000001" y1="294.11" x2="1749.2" y2="294.11" stroke="#000" stroke-width="1.6"/>
<text x="1733.05" y="300.81" font-size="15" letter-spacing="0.7" text-anchor="end" fill="#111">125000</text>
<line x1="1739.6000000000001" y1="259.76" x2="1749.2" y2="259.76" stroke="#000" stroke-width="1.6"/>
<text x="1733.05" y="266.46" font-size="15" letter-spacing="0.7" text-anchor="end" fill="#111">150000</text>
<rect x="1749.2" y="243.2" width="228.89999999999986" height="257.95" fill="none" stroke="#000" stroke-width="1.6"/>
<text x="1863.65" y="233.70" font-size="19.1" text-anchor="middle" fill="#111">bkwd</text>
<text x="1863.65" y="551.45" font-size="15" letter-spacing="0.4" text-anchor="middle" fill="#111">Time (<tspan font-style="italic">µs</tspan>)</text>
<text transform="translate(1659.00,372.17) rotate(-90)" font-size="15" letter-spacing="0.35" text-anchor="middle" fill="#111">Counts</text>
<rect x="1765.6" y="247" width="208.70000000000005" height="27.600000000000023" rx="1.5" fill="#fff" fill-opacity="0.8" stroke="#ccc" stroke-width="1"/>
<line x1="1768.30" y1="253.80" x2="1786.60" y2="253.80" stroke="#1f77b4" stroke-width="2.4"/>
<text x="1791.20" y="257.00" font-size="8.9" fill="#111" style="font-family:'DejaVu Sans Condensed','DejaVu Sans',sans-serif">62260 top</text>
<line x1="1768.30" y1="266.30" x2="1786.60" y2="266.30" stroke="#ff7f0e" stroke-width="2.4"/>
<text x="1791.20" y="269.50" font-size="8.9" fill="#111" style="font-family:'DejaVu Sans Condensed','DejaVu Sans',sans-serif">62260 bkwd ;MaxEnt_reconstructed_spectra</text>
<clipPath id="c104"><rect x="1017.1" y="599.4" width="228.69999999999993" height="257.95000000000005"/></clipPath>
<polyline clip-path="url(#c104)" points="1019.39,642.87 1019.71,640.65 1020.03,639.34 1020.36,638.84 1020.68,639.09 1021.00,640.00 1021.33,641.54 1021.65,643.66 1021.97,646.31 1022.30,649.44 1022.62,653.01 1022.94,656.96 1023.27,661.24 1023.59,665.79 1023.92,670.55 1024.24,675.47 1024.56,680.49 1024.89,685.53 1025.21,690.56 1025.53,695.52 1025.86,700.33 1026.18,704.93 1026.50,709.28 1026.83,713.32 1027.15,717.01 1027.47,720.32 1027.80,723.21 1028.12,725.67 1028.44,727.66 1028.77,729.18 1029.09,730.23 1029.41,730.81 1029.74,730.93 1030.06,730.60 1030.38,729.84 1030.71,728.69 1031.03,727.17 1031.35,725.32 1031.68,723.19 1032.00,720.82 1032.32,718.26 1032.65,715.55 1032.97,712.76 1033.30,709.92 1033.62,707.12 1033.94,704.40 1034.27,701.80 1034.59,699.35 1034.91,697.11 1035.24,695.11 1035.56,693.39 1035.88,691.98 1036.21,690.91 1036.53,690.19 1036.85,689.85 1037.18,689.90 1037.50,690.33 1037.82,691.15 1038.15,692.35 1038.47,693.91 1038.79,695.82 1039.12,698.06 1039.44,700.60 1039.76,703.41 1040.09,706.45 1040.41,709.69 1040.73,713.08 1041.06,716.59 1041.38,720.17 1041.70,723.78 1042.03,727.38 1042.35,730.94 1042.68,734.40 1043.00,737.72 1043.32,740.86 1043.65,743.79 1043.97,746.47 1044.29,748.89 1044.62,751.01 1044.94,752.81 1045.26,754.29 1045.59,755.44 1045.91,756.25 1046.23,756.72 1046.56,756.86 1046.88,756.68 1047.20,756.19 1047.53,755.41 1047.85,754.37 1048.17,753.08 1048.50,751.59 1048.82,749.93 1049.14,748.11 1049.47,746.20 1049.79,744.21 1050.11,742.18 1050.44,740.17 1050.76,738.22 1051.08,736.34 1051.41,734.57 1051.73,732.94 1052.06,731.48 1052.38,730.22 1052.70,729.17 1053.03,728.36 1053.35,727.81 1053.67,727.52 1054.00,727.50 1054.32,727.76 1054.64,728.30 1054.97,729.11 1055.29,730.18 1055.61,731.51 1055.94,733.07 1056.26,734.85 1056.58,736.83 1056.91,738.98 1057.23,741.27 1057.55,743.68 1057.88,746.17 1058.20,748.72 1058.52,751.30 1058.85,753.87 1059.17,756.43 1059.49,758.92 1059.82,761.31 1060.14,763.58 1060.46,765.70 1060.79,767.65 1061.11,769.41 1061.44,770.96 1061.76,772.29 1062.08,773.39 1062.41,774.25 1062.73,774.87 1063.05,775.24 1063.38,775.38 1063.70,775.29 1064.02,774.98 1064.35,774.46 1064.67,773.74 1064.99,772.85 1065.32,771.81 1065.64,770.64 1065.96,769.36 1066.29,768.00 1066.61,766.59 1066.93,765.14 1067.26,763.70 1067.58,762.30 1067.90,760.94 1068.23,759.66 1068.55,758.48 1068.87,757.41 1069.20,756.49 1069.52,755.71 1069.84,755.10 1070.17,754.67 1070.49,754.43 1070.82,754.39 1071.14,754.54 1071.46,754.89 1071.79,755.44 1072.11,756.17 1072.43,757.09 1072.76,758.18 1073.08,759.43 1073.40,760.82 1073.73,762.33 1074.05,763.95 1074.37,765.66 1074.70,767.44 1075.02,769.26 1075.34,771.10 1075.67,772.94 1075.99,774.77 1076.31,776.56 1076.64,778.28 1076.96,779.92 1077.28,781.45 1077.61,782.87 1077.93,784.15 1078.25,785.28 1078.58,786.26 1078.90,787.08 1079.22,787.72 1079.55,788.19 1079.87,788.49 1080.20,788.62 1080.52,788.58 1080.84,788.38 1081.17,788.04 1081.49,787.55 1081.81,786.93 1082.14,786.21 1082.46,785.38 1082.78,784.48 1083.11,783.52 1083.43,782.51 1083.75,781.48 1084.08,780.45 1084.40,779.44 1084.72,778.47 1085.05,777.54 1085.37,776.68 1085.69,775.90 1086.02,775.22 1086.34,774.65 1086.66,774.19 1086.99,773.86 1087.31,773.67 1087.63,773.61 1087.96,773.70 1088.28,773.93 1088.60,774.29 1088.93,774.80 1089.25,775.43 1089.58,776.19 1089.90,777.06 1090.22,778.04 1090.55,779.11 1090.87,780.25 1091.19,781.46 1091.52,782.73 1091.84,784.02 1092.16,785.34 1092.49,786.65 1092.81,787.96 1093.13,789.25 1093.46,790.49 1093.78,791.67 1094.10,792.78 1094.43,793.81 1094.75,794.74 1095.07,795.57 1095.40,796.29 1095.72,796.89 1096.04,797.37 1096.37,797.73 1096.69,797.97 1097.01,798.08 1097.34,798.07 1097.66,797.95 1097.98,797.72 1098.31,797.38 1098.63,796.96 1098.95,796.45 1099.28,795.88 1099.60,795.24 1099.93,794.56 1100.25,793.84 1100.57,793.11 1100.90,792.37 1101.22,791.65 1101.54,790.94 1101.87,790.28 1102.19,789.65 1102.51,789.09 1102.84,788.59 1103.16,788.16 1103.48,787.82 1103.81,787.57 1104.13,787.42 1104.45,787.36 1104.78,787.40 1105.10,787.55 1105.42,787.79 1105.75,788.14 1106.07,788.57 1106.39,789.10 1106.72,789.71 1107.04,790.40 1107.36,791.15 1107.69,791.96 1108.01,792.82 1108.33,793.72 1108.66,794.64 1108.98,795.58 1109.31,796.52 1109.63,797.46 1109.95,798.38 1110.28,799.27 1110.60,800.12 1110.92,800.93 1111.25,801.67 1111.57,802.35 1111.89,802.96 1112.22,803.48 1112.54,803.93 1112.86,804.29 1113.19,804.56 1113.51,804.74 1113.83,804.84 1114.16,804.85 1114.48,804.77 1114.80,804.62 1115.13,804.39 1115.45,804.10 1115.77,803.75 1116.10,803.35 1116.42,802.90 1116.74,802.41 1117.07,801.91 1117.39,801.38 1117.71,800.86 1118.04,800.33 1118.36,799.83 1118.69,799.35 1119.01,798.90 1119.33,798.48 1119.66,798.12 1119.98,797.81 1120.30,797.55 1120.63,797.36 1120.95,797.24 1121.27,797.19 1121.60,797.20 1121.92,797.30 1122.24,797.46 1122.57,797.69 1122.89,797.99 1123.21,798.36 1123.54,798.79 1123.86,799.27 1124.18,799.80 1124.51,800.37 1124.83,800.98 1125.15,801.62 1125.48,802.27 1125.80,802.94 1126.12,803.61 1126.45,804.29 1126.77,804.95 1127.09,805.59 1127.42,806.20 1127.74,806.79 1128.07,807.33 1128.39,807.82 1128.71,808.26 1129.04,808.65 1129.36,808.98 1129.68,809.24 1130.01,809.45 1130.33,809.59 1130.65,809.67 1130.98,809.69 1131.30,809.64 1131.62,809.54 1131.95,809.39 1132.27,809.19 1132.59,808.94 1132.92,808.66 1133.24,808.35 1133.56,808.00 1133.89,807.64 1134.21,807.27 1134.53,806.89 1134.86,806.52 1135.18,806.16 1135.50,805.81 1135.83,805.48 1136.15,805.18 1136.47,804.92 1136.80,804.69 1137.12,804.50 1137.45,804.35 1137.77,804.26 1138.09,804.21 1138.42,804.21 1138.74,804.27 1139.06,804.38 1139.39,804.54 1139.71,804.74 1140.03,805.00 1140.36,805.30 1140.68,805.63 1141.00,806.01 1141.33,806.41 1141.65,806.84 1141.97,807.30 1142.30,807.76 1142.62,808.24 1142.94,808.72 1143.27,809.20 1143.59,809.68 1143.91,810.14 1144.24,810.58 1144.56,811.00 1144.88,811.39 1145.21,811.75 1145.53,812.07 1145.85,812.36 1146.18,812.60 1146.50,812.80 1146.83,812.95 1147.15,813.06 1147.47,813.12 1147.80,813.14 1148.12,813.12 1148.44,813.05 1148.77,812.95 1149.09,812.81 1149.41,812.64 1149.74,812.45 1150.06,812.22 1150.38,811.98 1150.71,811.73 1151.03,811.46 1151.35,811.19 1151.68,810.92 1152.00,810.66 1152.32,810.41 1152.65,810.18 1152.97,809.96 1153.29,809.76 1153.62,809.59 1153.94,809.45 1154.26,809.35 1154.59,809.27 1154.91,809.23 1155.23,809.23 1155.56,809.26 1155.88,809.33 1156.21,809.44 1156.53,809.58 1156.85,809.76 1157.18,809.97 1157.50,810.20 1157.82,810.47 1158.15,810.75 1158.47,811.06 1158.79,811.38 1159.12,811.71 1159.44,812.05 1159.76,812.39 1160.09,812.74 1160.41,813.08 1160.73,813.41 1161.06,813.73 1161.38,814.03 1161.70,814.31 1162.03,814.57 1162.35,814.81 1162.67,815.02 1163.00,815.20 1163.32,815.34 1163.64,815.46 1163.97,815.54 1164.29,815.59 1164.61,815.61 1164.94,815.60 1165.26,815.56 1165.59,815.49 1165.91,815.40 1166.23,815.28 1166.56,815.14 1166.88,814.98 1167.20,814.81 1167.53,814.63 1167.85,814.44 1168.17,814.25 1168.50,814.06 1168.82,813.87 1169.14,813.69 1169.47,813.52 1169.79,813.36 1170.11,813.22 1170.44,813.10 1170.76,812.99 1171.08,812.91 1171.41,812.85 1171.73,812.82 1172.05,812.81 1172.38,812.83 1172.70,812.88 1173.02,812.95 1173.35,813.05 1173.67,813.17 1173.99,813.31 1174.32,813.48 1174.64,813.67 1174.97,813.87 1175.29,814.08 1175.61,814.31 1175.94,814.55 1176.26,814.79 1176.58,815.03 1176.91,815.28 1177.23,815.52 1177.55,815.76 1177.88,815.99 1178.20,816.21 1178.52,816.42 1178.85,816.61 1179.17,816.78 1179.49,816.93 1179.82,817.06 1180.14,817.17 1180.46,817.25 1180.79,817.32 1181.11,817.36 1181.43,817.38 1181.76,817.37 1182.08,817.35 1182.40,817.30 1182.73,817.24 1183.05,817.15 1183.37,817.06 1183.70,816.95 1184.02,816.83 1184.35,816.70 1184.67,816.57 1184.99,816.43 1185.32,816.29 1185.64,816.16 1185.96,816.03 1186.29,815.90 1186.61,815.79 1186.93,815.68 1187.26,815.59 1187.58,815.52 1187.90,815.45 1188.23,815.41 1188.55,815.38 1188.87,815.38 1189.20,815.39 1189.52,815.42 1189.84,815.47 1190.17,815.53 1190.49,815.62 1190.81,815.72 1191.14,815.83 1191.46,815.96 1191.78,816.10 1192.11,816.26 1192.43,816.42 1192.75,816.59 1193.08,816.76 1193.40,816.93 1193.73,817.11 1194.05,817.28 1194.37,817.46 1194.70,817.62 1195.02,817.78 1195.34,817.93 1195.67,818.06 1195.99,818.19 1196.31,818.30 1196.64,818.40 1196.96,818.48 1197.28,818.54 1197.61,818.59 1197.93,818.62 1198.25,818.64 1198.58,818.64 1198.90,818.62 1199.22,818.59 1199.55,818.55 1199.87,818.49 1200.19,818.42 1200.52,818.35 1200.84,818.26 1201.16,818.17 1201.49,818.08 1201.81,817.98 1202.13,817.88 1202.46,817.78 1202.78,817.69 1203.10,817.60 1203.43,817.52 1203.75,817.44 1204.08,817.37 1204.40,817.32 1204.72,817.27 1205.05,817.24 1205.37,817.22 1205.69,817.21 1206.02,817.21 1206.34,817.23 1206.66,817.27 1206.99,817.31 1207.31,817.37 1207.63,817.44 1207.96,817.52 1208.28,817.61 1208.60,817.71 1208.93,817.82 1209.25,817.93 1209.57,818.05 1209.90,818.18 1210.22,818.30 1210.54,818.43 1210.87,818.55 1211.19,818.67 1211.51,818.79 1211.84,818.91 1212.16,819.01 1212.48,819.11 1212.81,819.20 1213.13,819.29 1213.46,819.36 1213.78,819.42 1214.10,819.46 1214.43,819.50 1214.75,819.53 1215.07,819.54 1215.40,819.54 1215.72,819.53 1216.04,819.51 1216.37,819.48 1216.69,819.44 1217.01,819.39 1217.34,819.34 1217.66,819.28 1217.98,819.22 1218.31,819.15 1218.63,819.08 1218.95,819.01 1219.28,818.94 1219.60,818.87 1219.92,818.81 1220.25,818.75 1220.57,818.69 1220.89,818.64 1221.22,818.60 1221.54,818.57 1221.86,818.54 1222.19,818.53 1222.51,818.52 1222.84,818.52 1223.16,818.53 1223.48,818.55 1223.81,818.59 1224.13,818.63 1224.45,818.67 1224.78,818.73 1225.10,818.79 1225.42,818.87 1225.75,818.94 1226.07,819.02 1226.39,819.11 1226.72,819.19 1227.04,819.28 1227.36,819.37 1227.69,819.46 1228.01,819.55 1228.33,819.64 1228.66,819.72 1228.98,819.80 1229.30,819.87 1229.63,819.93 1229.95,819.99 1230.27,820.05 1230.60,820.09 1230.92,820.13 1231.24,820.15 1231.57,820.17 1231.89,820.18 1232.22,820.19 1232.54,820.18 1232.86,820.17 1233.19,820.15 1233.51,820.12 1233.83,820.09 1234.16,820.05 1234.48,820.01 1234.80,819.96 1235.13,819.91 1235.45,819.86 1235.77,819.81 1236.10,819.76 1236.42,819.72 1236.74,819.67 1237.07,819.63 1237.39,819.59 1237.71,819.55 1238.04,819.52 1238.36,819.49 1238.68,819.47 1239.01,819.46 1239.33,819.46 1239.65,819.46 1239.98,819.46 1240.30,819.48 1240.62,819.50 1240.95,819.53 1241.27,819.56 1241.60,819.60 1241.92,819.64 1242.24,819.69 1242.57,819.75 1242.89,819.80 1243.21,819.86 1243.54,819.93 1243.86,819.99 1244.18,820.05 1244.51,820.12 1244.83,820.18 1245.15,820.24 1245.48,820.30 1245.80,820.36" fill="none" stroke="#1f77b4" stroke-width="2.9" stroke-linejoin="round" stroke-linecap="butt"/>
<polyline clip-path="url(#c104)" points="1019.39,638.12 1019.71,637.19 1020.03,636.80 1020.36,636.94 1020.68,637.63 1021.00,638.87 1021.33,640.65 1021.65,642.94 1021.97,645.71 1022.30,648.94 1022.62,652.59 1022.94,656.61 1023.27,660.95 1023.59,665.56 1023.92,670.38 1024.24,675.35 1024.56,680.41 1024.89,685.50 1025.21,690.55 1025.53,695.52 1025.86,700.33 1026.18,704.93 1026.50,709.28 1026.83,713.32 1027.15,717.01 1027.47,720.32 1027.80,723.21 1028.12,725.67 1028.44,727.66 1028.77,729.18 1029.09,730.23 1029.41,730.81 1029.74,730.93 1030.06,730.60 1030.38,729.84 1030.71,728.69 1031.03,727.17 1031.35,725.32 1031.68,723.19 1032.00,720.82 1032.32,718.26 1032.65,715.55 1032.97,712.76 1033.30,709.92 1033.62,707.10 1033.94,704.35 1034.27,701.71 1034.59,699.23 1034.91,696.96 1035.24,694.94 1035.56,693.19 1035.88,691.76 1036.21,690.67 1036.53,689.94 1036.85,689.59 1037.18,689.63 1037.50,690.06 1037.82,690.88 1038.15,692.08 1038.47,693.65 1038.79,695.58 1039.12,697.84 1039.44,700.40 1039.76,703.23 1040.09,706.29 1040.41,709.56 1040.73,712.98 1041.06,716.51 1041.38,720.12 1041.70,723.76 1042.03,727.38 1042.35,730.94 1042.68,734.40 1043.00,737.72 1043.32,740.86 1043.65,743.79 1043.97,746.47 1044.29,748.89 1044.62,751.01 1044.94,752.81 1045.26,754.29 1045.59,755.44 1045.91,756.25 1046.23,756.72 1046.56,756.86 1046.88,756.68 1047.20,756.19 1047.53,755.41 1047.85,754.37 1048.17,753.08 1048.50,751.59 1048.82,749.93 1049.14,748.11 1049.47,746.20 1049.79,744.21 1050.11,742.18 1050.44,740.16 1050.76,738.19 1051.08,736.28 1051.41,734.49 1051.73,732.84 1052.06,731.36 1052.38,730.08 1052.70,729.01 1053.03,728.19 1053.35,727.63 1053.67,727.33 1054.00,727.31 1054.32,727.57 1054.64,728.11 1054.97,728.92 1055.29,730.00 1055.61,731.33 1055.94,732.91 1056.26,734.70 1056.58,736.69 1056.91,738.86 1057.23,741.17 1057.55,743.60 1057.88,746.11 1058.20,748.69 1058.52,751.28 1058.85,753.87 1059.17,756.43 1059.49,758.92 1059.82,761.31 1060.14,763.58 1060.46,765.70 1060.79,767.65 1061.11,769.41 1061.44,770.96 1061.76,772.29 1062.08,773.39 1062.41,774.25 1062.73,774.87 1063.05,775.24 1063.38,775.38 1063.70,775.29 1064.02,774.98 1064.35,774.46 1064.67,773.74 1064.99,772.85 1065.32,771.81 1065.64,770.64 1065.96,769.36 1066.29,768.00 1066.61,766.59 1066.93,765.14 1067.26,763.70 1067.58,762.28 1067.90,760.91 1068.23,759.61 1068.55,758.41 1068.87,757.33 1069.20,756.39 1069.52,755.60 1069.84,754.98 1070.17,754.55 1070.49,754.30 1070.82,754.25 1071.14,754.40 1071.46,754.75 1071.79,755.30 1072.11,756.04 1072.43,756.97 1072.76,758.06 1073.08,759.32 1073.40,760.72 1073.73,762.25 1074.05,763.88 1074.37,765.60 1074.70,767.39 1075.02,769.23 1075.34,771.08 1075.67,772.94 1075.99,774.77 1076.31,776.56 1076.64,778.28 1076.96,779.92 1077.28,781.45 1077.61,782.87 1077.93,784.15 1078.25,785.28 1078.58,786.26 1078.90,787.08 1079.22,787.72 1079.55,788.19 1079.87,788.49 1080.20,788.62 1080.52,788.58 1080.84,788.38 1081.17,788.04 1081.49,787.55 1081.81,786.93 1082.14,786.21 1082.46,785.38 1082.78,784.48 1083.11,783.52 1083.43,782.51 1083.75,781.48 1084.08,780.45 1084.40,779.43 1084.72,778.44 1085.05,777.50 1085.37,776.63 1085.69,775.85 1086.02,775.15 1086.34,774.57 1086.66,774.11 1086.99,773.78 1087.31,773.58 1087.63,773.52 1087.96,773.60 1088.28,773.83 1088.60,774.19 1088.93,774.70 1089.25,775.34 1089.58,776.10 1089.90,776.98 1090.22,777.97 1090.55,779.04 1090.87,780.20 1091.19,781.42 1091.52,782.69 1091.84,784.00 1092.16,785.32 1092.49,786.65 1092.81,787.96 1093.13,789.25 1093.46,790.49 1093.78,791.67 1094.10,792.78 1094.43,793.81 1094.75,794.74 1095.07,795.57 1095.40,796.29 1095.72,796.89 1096.04,797.37 1096.37,797.73 1096.69,797.97 1097.01,798.08 1097.34,798.07 1097.66,797.95 1097.98,797.72 1098.31,797.38 1098.63,796.96 1098.95,796.45 1099.28,795.88 1099.60,795.24 1099.93,794.56 1100.25,793.84 1100.57,793.11 1100.90,792.37 1101.22,791.64 1101.54,790.93 1101.87,790.25 1102.19,789.62 1102.51,789.05 1102.84,788.54 1103.16,788.11 1103.48,787.76 1103.81,787.51 1104.13,787.35 1104.45,787.29 1104.78,787.33 1105.10,787.48 1105.42,787.72 1105.75,788.07 1106.07,788.51 1106.39,789.04 1106.72,789.65 1107.04,790.34 1107.36,791.10 1107.69,791.92 1108.01,792.79 1108.33,793.69 1108.66,794.62 1108.98,795.57 1109.31,796.52 1109.63,797.46 1109.95,798.38 1110.28,799.27 1110.60,800.12 1110.92,800.93 1111.25,801.67 1111.57,802.35 1111.89,802.96 1112.22,803.48 1112.54,803.93 1112.86,804.29 1113.19,804.56 1113.51,804.74 1113.83,804.84 1114.16,804.85 1114.48,804.77 1114.80,804.62 1115.13,804.39 1115.45,804.10 1115.77,803.75 1116.10,803.35 1116.42,802.90 1116.74,802.41 1117.07,801.91 1117.39,801.38 1117.71,800.86 1118.04,800.33 1118.36,799.82 1118.69,799.33 1119.01,798.87 1119.33,798.46 1119.66,798.09 1119.98,797.77 1120.30,797.51 1120.63,797.32 1120.95,797.19 1121.27,797.14 1121.60,797.15 1121.92,797.25 1122.24,797.41 1122.57,797.64 1122.89,797.95 1123.21,798.32 1123.54,798.74 1123.86,799.23 1124.18,799.76 1124.51,800.34 1124.83,800.96 1125.15,801.60 1125.48,802.26 1125.80,802.93 1126.12,803.61 1126.45,804.29 1126.77,804.95 1127.09,805.59 1127.42,806.20 1127.74,806.79 1128.07,807.33 1128.39,807.82 1128.71,808.26 1129.04,808.65 1129.36,808.98 1129.68,809.24 1130.01,809.45 1130.33,809.59 1130.65,809.67 1130.98,809.69 1131.30,809.64 1131.62,809.54 1131.95,809.39 1132.27,809.19 1132.59,808.94 1132.92,808.66 1133.24,808.35 1133.56,808.00 1133.89,807.64 1134.21,807.27 1134.53,806.89 1134.86,806.52 1135.18,806.15 1135.50,805.80 1135.83,805.47 1136.15,805.16 1136.47,804.89 1136.80,804.66 1137.12,804.47 1137.45,804.32 1137.77,804.22 1138.09,804.18 1138.42,804.18 1138.74,804.23 1139.06,804.34 1139.39,804.50 1139.71,804.71 1140.03,804.97 1140.36,805.27 1140.68,805.61 1141.00,805.98 1141.33,806.39 1141.65,806.83 1141.97,807.28 1142.30,807.75 1142.62,808.23 1142.94,808.72 1143.27,809.20 1143.59,809.68 1143.91,810.14 1144.24,810.58 1144.56,811.00 1144.88,811.39 1145.21,811.75 1145.53,812.07 1145.85,812.36 1146.18,812.60 1146.50,812.80 1146.83,812.95 1147.15,813.06 1147.47,813.12 1147.80,813.14 1148.12,813.12 1148.44,813.05 1148.77,812.95 1149.09,812.81 1149.41,812.64 1149.74,812.45 1150.06,812.22 1150.38,811.98 1150.71,811.73 1151.03,811.46 1151.35,811.19 1151.68,810.92 1152.00,810.66 1152.32,810.41 1152.65,810.17 1152.97,809.95 1153.29,809.75 1153.62,809.58 1153.94,809.43 1154.26,809.32 1154.59,809.25 1154.91,809.21 1155.23,809.20 1155.56,809.24 1155.88,809.31 1156.21,809.41 1156.53,809.56 1156.85,809.73 1157.18,809.94 1157.50,810.18 1157.82,810.45 1158.15,810.74 1158.47,811.04 1158.79,811.37 1159.12,811.70 1159.44,812.04 1159.76,812.39 1160.09,812.74 1160.41,813.08 1160.73,813.41 1161.06,813.73 1161.38,814.03 1161.70,814.31 1162.03,814.57 1162.35,814.81 1162.67,815.02 1163.00,815.20 1163.32,815.34 1163.64,815.46 1163.97,815.54 1164.29,815.59 1164.61,815.61 1164.94,815.60 1165.26,815.56 1165.59,815.49 1165.91,815.40 1166.23,815.28 1166.56,815.14 1166.88,814.98 1167.20,814.81 1167.53,814.63 1167.85,814.44 1168.17,814.25 1168.50,814.06 1168.82,813.87 1169.14,813.69 1169.47,813.51 1169.79,813.35 1170.11,813.21 1170.44,813.08 1170.76,812.98 1171.08,812.89 1171.41,812.84 1171.73,812.80 1172.05,812.79 1172.38,812.81 1172.70,812.86 1173.02,812.93 1173.35,813.03 1173.67,813.15 1173.99,813.30 1174.32,813.47 1174.64,813.65 1174.97,813.86 1175.29,814.07 1175.61,814.30 1175.94,814.54 1176.26,814.79 1176.58,815.03 1176.91,815.28 1177.23,815.52 1177.55,815.76 1177.88,815.99 1178.20,816.21 1178.52,816.42 1178.85,816.61 1179.17,816.78 1179.49,816.93 1179.82,817.06 1180.14,817.17 1180.46,817.25 1180.79,817.32 1181.11,817.36 1181.43,817.38 1181.76,817.37 1182.08,817.35 1182.40,817.30 1182.73,817.24 1183.05,817.15 1183.37,817.06 1183.70,816.95 1184.02,816.83 1184.35,816.70 1184.67,816.57 1184.99,816.43 1185.32,816.29 1185.64,816.15 1185.96,816.02 1186.29,815.90 1186.61,815.78 1186.93,815.68 1187.26,815.58 1187.58,815.51 1187.90,815.44 1188.23,815.40 1188.55,815.37 1188.87,815.36 1189.20,815.37 1189.52,815.40 1189.84,815.45 1190.17,815.52 1190.49,815.60 1190.81,815.71 1191.14,815.82 1191.46,815.95 1191.78,816.10 1192.11,816.25 1192.43,816.41 1192.75,816.58 1193.08,816.76 1193.40,816.93 1193.73,817.11 1194.05,817.28 1194.37,817.46 1194.70,817.62 1195.02,817.78 1195.34,817.93 1195.67,818.06 1195.99,818.19 1196.31,818.30 1196.64,818.40 1196.96,818.48 1197.28,818.54 1197.61,818.59 1197.93,818.62 1198.25,818.64 1198.58,818.64 1198.90,818.62 1199.22,818.59 1199.55,818.55 1199.87,818.49 1200.19,818.42 1200.52,818.35 1200.84,818.26 1201.16,818.17 1201.49,818.08 1201.81,817.98 1202.13,817.88 1202.46,817.78 1202.78,817.69 1203.10,817.60 1203.43,817.51 1203.75,817.44 1204.08,817.37 1204.40,817.31 1204.72,817.26 1205.05,817.23 1205.37,817.21 1205.69,817.20 1206.02,817.20 1206.34,817.22 1206.66,817.26 1206.99,817.30 1207.31,817.36 1207.63,817.43 1207.96,817.51 1208.28,817.60 1208.60,817.71 1208.93,817.81 1209.25,817.93 1209.57,818.05 1209.90,818.17 1210.22,818.30 1210.54,818.43 1210.87,818.55 1211.19,818.67 1211.51,818.79 1211.84,818.91 1212.16,819.01 1212.48,819.11 1212.81,819.20 1213.13,819.29 1213.46,819.36 1213.78,819.42 1214.10,819.46 1214.43,819.50 1214.75,819.53 1215.07,819.54 1215.40,819.54 1215.72,819.53 1216.04,819.51 1216.37,819.48 1216.69,819.44 1217.01,819.39 1217.34,819.34 1217.66,819.28 1217.98,819.22 1218.31,819.15 1218.63,819.08 1218.95,819.01 1219.28,818.94 1219.60,818.87 1219.92,818.81 1220.25,818.75 1220.57,818.69 1220.89,818.64 1221.22,818.60 1221.54,818.56 1221.86,818.54 1222.19,818.52 1222.51,818.51 1222.84,818.51 1223.16,818.53 1223.48,818.55 1223.81,818.58 1224.13,818.62 1224.45,818.67 1224.78,818.72 1225.10,818.79 1225.42,818.86 1225.75,818.94 1226.07,819.02 1226.39,819.10 1226.72,819.19 1227.04,819.28 1227.36,819.37 1227.69,819.46 1228.01,819.55 1228.33,819.64 1228.66,819.72 1228.98,819.80 1229.30,819.87 1229.63,819.93 1229.95,819.99 1230.27,820.05 1230.60,820.09 1230.92,820.13 1231.24,820.15 1231.57,820.17 1231.89,820.18 1232.22,820.19 1232.54,820.18 1232.86,820.17 1233.19,820.15 1233.51,820.12 1233.83,820.09 1234.16,820.05 1234.48,820.01 1234.80,819.96 1235.13,819.91 1235.45,819.86 1235.77,819.81 1236.10,819.76 1236.42,819.72 1236.74,819.67 1237.07,819.62 1237.39,819.58 1237.71,819.55 1238.04,819.52 1238.36,819.49 1238.68,819.47 1239.01,819.46 1239.33,819.45 1239.65,819.45 1239.98,819.46 1240.30,819.47 1240.62,819.49 1240.95,819.52 1241.27,819.55 1241.60,819.59 1241.92,819.64 1242.24,819.69 1242.57,819.74 1242.89,819.80 1243.21,819.86 1243.54,819.93 1243.86,819.99 1244.18,820.05 1244.51,820.12 1244.83,820.18 1245.15,820.24 1245.48,820.30 1245.80,820.36" fill="none" stroke="#ff7f0e" stroke-width="2.9" stroke-linejoin="round" stroke-linecap="butt"/>
<line x1="1017.10" y1="857.35" x2="1017.10" y2="866.95" stroke="#000" stroke-width="1.6"/>
<text x="1017.30" y="884.95" font-size="15" letter-spacing="0.45" text-anchor="middle" fill="#111">0.0</text>
<line x1="1074.28" y1="857.35" x2="1074.28" y2="866.95" stroke="#000" stroke-width="1.6"/>
<text x="1074.48" y="884.95" font-size="15" letter-spacing="0.45" text-anchor="middle" fill="#111">2.5</text>
<line x1="1131.45" y1="857.35" x2="1131.45" y2="866.95" stroke="#000" stroke-width="1.6"/>
<text x="1131.65" y="884.95" font-size="15" letter-spacing="0.45" text-anchor="middle" fill="#111">5.0</text>
<line x1="1188.62" y1="857.35" x2="1188.62" y2="866.95" stroke="#000" stroke-width="1.6"/>
<text x="1188.83" y="884.95" font-size="15" letter-spacing="0.45" text-anchor="middle" fill="#111">7.5</text>
<line x1="1245.80" y1="857.35" x2="1245.80" y2="866.95" stroke="#000" stroke-width="1.6"/>
<text x="1246.00" y="884.95" font-size="15" letter-spacing="0.45" text-anchor="middle" fill="#111">10.0</text>
<line x1="1007.5" y1="857.08" x2="1017.1" y2="857.08" stroke="#000" stroke-width="1.6"/>
<text x="1000.95" y="863.78" font-size="15" letter-spacing="0.7" text-anchor="end" fill="#111">−20000</text>
<line x1="1007.5" y1="821.80" x2="1017.1" y2="821.80" stroke="#000" stroke-width="1.6"/>
<text x="1000.95" y="828.50" font-size="15" letter-spacing="0.7" text-anchor="end" fill="#111">0</text>
<line x1="1007.5" y1="786.52" x2="1017.1" y2="786.52" stroke="#000" stroke-width="1.6"/>
<text x="1000.95" y="793.22" font-size="15" letter-spacing="0.7" text-anchor="end" fill="#111">20000</text>
<line x1="1007.5" y1="751.24" x2="1017.1" y2="751.24" stroke="#000" stroke-width="1.6"/>
<text x="1000.95" y="757.94" font-size="15" letter-spacing="0.7" text-anchor="end" fill="#111">40000</text>
<line x1="1007.5" y1="715.96" x2="1017.1" y2="715.96" stroke="#000" stroke-width="1.6"/>
<text x="1000.95" y="722.66" font-size="15" letter-spacing="0.7" text-anchor="end" fill="#111">60000</text>
<line x1="1007.5" y1="680.68" x2="1017.1" y2="680.68" stroke="#000" stroke-width="1.6"/>
<text x="1000.95" y="687.38" font-size="15" letter-spacing="0.7" text-anchor="end" fill="#111">80000</text>
<line x1="1007.5" y1="645.40" x2="1017.1" y2="645.40" stroke="#000" stroke-width="1.6"/>
<text x="1000.95" y="652.10" font-size="15" letter-spacing="0.7" text-anchor="end" fill="#111">100000</text>
<line x1="1007.5" y1="610.12" x2="1017.1" y2="610.12" stroke="#000" stroke-width="1.6"/>
<text x="1000.95" y="616.82" font-size="15" letter-spacing="0.7" text-anchor="end" fill="#111">120000</text>
<rect x="1017.1" y="599.4" width="228.69999999999993" height="257.95000000000005" fill="none" stroke="#000" stroke-width="1.6"/>
<text x="1131.45" y="589.90" font-size="19.1" text-anchor="middle" fill="#111">bottom</text>
<text x="1131.45" y="907.65" font-size="15" letter-spacing="0.4" text-anchor="middle" fill="#111">Time (<tspan font-style="italic">µs</tspan>)</text>
<text transform="translate(927.00,728.38) rotate(-90)" font-size="15" letter-spacing="0.35" text-anchor="middle" fill="#111">Counts</text>
<rect x="1026.2" y="603" width="215.5999999999999" height="27.399999999999977" rx="1.5" fill="#fff" fill-opacity="0.8" stroke="#ccc" stroke-width="1"/>
<line x1="1028.90" y1="609.80" x2="1047.20" y2="609.80" stroke="#1f77b4" stroke-width="2.4"/>
<text x="1051.80" y="613.00" font-size="8.9" fill="#111" style="font-family:'DejaVu Sans Condensed','DejaVu Sans',sans-serif">62260 top</text>
<line x1="1028.90" y1="622.30" x2="1047.20" y2="622.30" stroke="#ff7f0e" stroke-width="2.4"/>
<text x="1051.80" y="625.50" font-size="8.9" fill="#111" style="font-family:'DejaVu Sans Condensed','DejaVu Sans',sans-serif">62260 bottom ;MaxEnt_reconstructed_spectra</text>
<clipPath id="c142"><rect x="1383.6" y="599.4" width="227.6500000000001" height="257.95000000000005"/></clipPath>
<polyline clip-path="url(#c142)" points="1385.88,685.41 1386.20,679.63 1386.52,674.20 1386.84,669.10 1387.16,664.06 1387.49,659.29 1387.81,654.89 1388.13,650.90 1388.45,647.34 1388.77,644.24 1389.10,641.64 1389.42,639.56 1389.74,638.02 1390.06,637.04 1390.38,636.63 1390.71,636.78 1391.03,637.50 1391.35,638.78 1391.67,640.60 1391.99,642.94 1392.32,645.77 1392.64,649.07 1392.96,652.78 1393.28,656.88 1393.60,661.30 1393.93,666.00 1394.25,670.91 1394.57,675.99 1394.89,681.17 1395.21,686.37 1395.54,691.35 1395.86,696.16 1396.18,700.82 1396.50,705.28 1396.82,709.49 1397.15,713.40 1397.47,716.97 1397.79,720.17 1398.11,722.96 1398.43,725.31 1398.75,727.22 1399.08,728.67 1399.40,729.65 1399.72,730.18 1400.04,730.25 1400.36,729.89 1400.69,729.11 1401.01,727.95 1401.33,726.43 1401.65,724.60 1401.97,722.49 1402.30,720.15 1402.62,717.64 1402.94,714.99 1403.26,712.26 1403.58,709.50 1403.91,706.61 1404.23,703.70 1404.55,700.91 1404.87,698.31 1405.19,695.92 1405.52,693.80 1405.84,691.98 1406.16,690.50 1406.48,689.37 1406.80,688.63 1407.13,688.28 1407.45,688.34 1407.77,688.82 1408.09,689.70 1408.41,690.98 1408.74,692.65 1409.06,694.69 1409.38,697.07 1409.70,699.77 1410.02,702.74 1410.35,705.96 1410.67,709.38 1410.99,712.96 1411.31,716.66 1411.63,720.42 1411.96,724.21 1412.28,727.87 1412.60,731.36 1412.92,734.75 1413.24,738.00 1413.57,741.07 1413.89,743.92 1414.21,746.53 1414.53,748.88 1414.85,750.93 1415.18,752.67 1415.50,754.10 1415.82,755.19 1416.14,755.95 1416.46,756.39 1416.78,756.49 1417.11,756.28 1417.43,755.78 1417.75,754.99 1418.07,753.95 1418.39,752.68 1418.72,751.20 1419.04,749.56 1419.36,747.78 1419.68,745.90 1420.00,743.96 1420.33,741.98 1420.65,739.94 1420.97,737.85 1421.29,735.84 1421.61,733.96 1421.94,732.22 1422.26,730.67 1422.58,729.33 1422.90,728.23 1423.22,727.38 1423.55,726.80 1423.87,726.50 1424.19,726.50 1424.51,726.79 1424.83,727.37 1425.16,728.24 1425.48,729.39 1425.80,730.80 1426.12,732.46 1426.44,734.35 1426.77,736.44 1427.09,738.72 1427.41,741.14 1427.73,743.68 1428.05,746.31 1428.38,748.99 1428.70,751.70 1429.02,754.34 1429.34,756.85 1429.66,759.29 1429.99,761.63 1430.31,763.85 1430.63,765.92 1430.95,767.81 1431.27,769.52 1431.60,771.03 1431.92,772.31 1432.24,773.37 1432.56,774.19 1432.88,774.78 1433.20,775.12 1433.53,775.24 1433.85,775.13 1434.17,774.80 1434.49,774.27 1434.81,773.56 1435.14,772.68 1435.46,771.65 1435.78,770.49 1436.10,769.23 1436.42,767.90 1436.75,766.52 1437.07,765.11 1437.39,763.67 1437.71,762.16 1438.03,760.72 1438.36,759.35 1438.68,758.09 1439.00,756.96 1439.32,755.98 1439.64,755.16 1439.97,754.52 1440.29,754.07 1440.61,753.82 1440.93,753.78 1441.25,753.95 1441.58,754.33 1441.90,754.92 1442.22,755.71 1442.54,756.69 1442.86,757.85 1443.19,759.17 1443.51,760.64 1443.83,762.25 1444.15,763.96 1444.47,765.76 1444.80,767.63 1445.12,769.55 1445.44,771.48 1445.76,773.39 1446.08,775.19 1446.41,776.94 1446.73,778.63 1447.05,780.23 1447.37,781.73 1447.69,783.11 1448.02,784.35 1448.34,785.45 1448.66,786.40 1448.98,787.18 1449.30,787.80 1449.63,788.24 1449.95,788.52 1450.27,788.63 1450.59,788.58 1450.91,788.37 1451.23,788.02 1451.56,787.53 1451.88,786.92 1452.20,786.20 1452.52,785.39 1452.84,784.50 1453.17,783.56 1453.49,782.57 1453.81,781.57 1454.13,780.55 1454.45,779.47 1454.78,778.43 1455.10,777.44 1455.42,776.53 1455.74,775.70 1456.06,774.98 1456.39,774.37 1456.71,773.89 1457.03,773.55 1457.35,773.35 1457.67,773.30 1458.00,773.39 1458.32,773.64 1458.64,774.03 1458.96,774.57 1459.28,775.25 1459.61,776.05 1459.93,776.98 1460.25,778.02 1460.57,779.15 1460.89,780.36 1461.22,781.64 1461.54,782.97 1461.86,784.33 1462.18,785.71 1462.50,787.09 1462.83,788.38 1463.15,789.64 1463.47,790.86 1463.79,792.01 1464.11,793.10 1464.44,794.10 1464.76,795.00 1465.08,795.81 1465.40,796.50 1465.72,797.08 1466.05,797.54 1466.37,797.88 1466.69,798.10 1467.01,798.20 1467.33,798.19 1467.65,798.06 1467.98,797.82 1468.30,797.49 1468.62,797.06 1468.94,796.56 1469.26,795.99 1469.59,795.37 1469.91,794.70 1470.23,794.00 1470.55,793.28 1470.87,792.56 1471.20,791.79 1471.52,791.04 1471.84,790.33 1472.16,789.66 1472.48,789.06 1472.81,788.53 1473.13,788.08 1473.45,787.73 1473.77,787.46 1474.09,787.30 1474.42,787.24 1474.74,787.30 1475.06,787.45 1475.38,787.72 1475.70,788.08 1476.03,788.55 1476.35,789.11 1476.67,789.76 1476.99,790.49 1477.31,791.29 1477.64,792.14 1477.96,793.05 1478.28,794.00 1478.60,794.97 1478.92,795.95 1479.25,796.94 1479.57,797.87 1479.89,798.78 1480.21,799.65 1480.53,800.49 1480.86,801.27 1481.18,802.00 1481.50,802.66 1481.82,803.24 1482.14,803.75 1482.47,804.18 1482.79,804.53 1483.11,804.79 1483.43,804.96 1483.75,805.04 1484.07,805.04 1484.40,804.96 1484.72,804.81 1485.04,804.58 1485.36,804.29 1485.68,803.94 1486.01,803.54 1486.33,803.10 1486.65,802.63 1486.97,802.13 1487.29,801.62 1487.62,801.10 1487.94,800.56 1488.26,800.02 1488.58,799.50 1488.90,799.02 1489.23,798.59 1489.55,798.20 1489.87,797.87 1490.19,797.60 1490.51,797.40 1490.84,797.27 1491.16,797.22 1491.48,797.24 1491.80,797.34 1492.12,797.52 1492.45,797.77 1492.77,798.09 1493.09,798.48 1493.41,798.93 1493.73,799.44 1494.06,800.00 1494.38,800.61 1494.70,801.25 1495.02,801.92 1495.34,802.62 1495.67,803.32 1495.99,804.03 1496.31,804.70 1496.63,805.35 1496.95,805.98 1497.28,806.58 1497.60,807.15 1497.92,807.67 1498.24,808.15 1498.56,808.58 1498.89,808.96 1499.21,809.27 1499.53,809.53 1499.85,809.73 1500.17,809.86 1500.50,809.93 1500.82,809.94 1501.14,809.89 1501.46,809.79 1501.78,809.64 1502.10,809.44 1502.43,809.19 1502.75,808.91 1503.07,808.60 1503.39,808.27 1503.71,807.92 1504.04,807.55 1504.36,807.18 1504.68,806.80 1505.00,806.41 1505.32,806.04 1505.65,805.69 1505.97,805.37 1506.29,805.09 1506.61,804.85 1506.93,804.65 1507.26,804.49 1507.58,804.39 1507.90,804.35 1508.22,804.35 1508.54,804.42 1508.87,804.53 1509.19,804.70 1509.51,804.92 1509.83,805.19 1510.15,805.51 1510.48,805.87 1510.80,806.26 1511.12,806.69 1511.44,807.15 1511.76,807.63 1512.09,808.12 1512.41,808.62 1512.73,809.12 1513.05,809.61 1513.37,810.08 1513.70,810.53 1514.02,810.96 1514.34,811.37 1514.66,811.76 1514.98,812.10 1515.31,812.42 1515.63,812.69 1515.95,812.93 1516.27,813.12 1516.59,813.26 1516.92,813.37 1517.24,813.43 1517.56,813.44 1517.88,813.41 1518.20,813.35 1518.52,813.24 1518.85,813.11 1519.17,812.94 1519.49,812.74 1519.81,812.52 1520.13,812.28 1520.46,812.03 1520.78,811.78 1521.10,811.51 1521.42,811.24 1521.74,810.96 1522.07,810.69 1522.39,810.44 1522.71,810.21 1523.03,810.00 1523.35,809.82 1523.68,809.68 1524.00,809.56 1524.32,809.48 1524.64,809.44 1524.96,809.44 1525.29,809.48 1525.61,809.56 1525.93,809.67 1526.25,809.82 1526.57,810.01 1526.90,810.23 1527.22,810.48 1527.54,810.76 1527.86,811.06 1528.18,811.39 1528.51,811.72 1528.83,812.07 1529.15,812.43 1529.47,812.79 1529.79,813.15 1530.12,813.48 1530.44,813.81 1530.76,814.12 1531.08,814.41 1531.40,814.69 1531.73,814.94 1532.05,815.17 1532.37,815.37 1532.69,815.55 1533.01,815.69 1533.34,815.80 1533.66,815.88 1533.98,815.92 1534.30,815.94 1534.62,815.93 1534.94,815.88 1535.27,815.81 1535.59,815.72 1535.91,815.60 1536.23,815.46 1536.55,815.31 1536.88,815.14 1537.20,814.97 1537.52,814.78 1537.84,814.59 1538.16,814.40 1538.49,814.20 1538.81,814.01 1539.13,813.83 1539.45,813.66 1539.77,813.51 1540.10,813.37 1540.42,813.26 1540.74,813.18 1541.06,813.12 1541.38,813.09 1541.71,813.08 1542.03,813.10 1542.35,813.15 1542.67,813.23 1542.99,813.33 1543.32,813.46 1543.64,813.62 1543.96,813.79 1544.28,813.99 1544.60,814.20 1544.93,814.43 1545.25,814.67 1545.57,814.92 1545.89,815.17 1546.21,815.43 1546.54,815.69 1546.86,815.93 1547.18,816.16 1547.50,816.39 1547.82,816.60 1548.15,816.80 1548.47,816.98 1548.79,817.15 1549.11,817.30 1549.43,817.42 1549.76,817.53 1550.08,817.61 1550.40,817.67 1550.72,817.71 1551.04,817.72 1551.37,817.72 1551.69,817.69 1552.01,817.64 1552.33,817.58 1552.65,817.50 1552.97,817.40 1553.30,817.30 1553.62,817.18 1553.94,817.05 1554.26,816.92 1554.58,816.79 1554.91,816.65 1555.23,816.51 1555.55,816.37 1555.87,816.24 1556.19,816.11 1556.52,816.00 1556.84,815.91 1557.16,815.83 1557.48,815.76 1557.80,815.72 1558.13,815.69 1558.45,815.68 1558.77,815.69 1559.09,815.72 1559.41,815.78 1559.74,815.85 1560.06,815.94 1560.38,816.05 1560.70,816.17 1561.02,816.31 1561.35,816.46 1561.67,816.62 1561.99,816.79 1562.31,816.97 1562.63,817.15 1562.96,817.33 1563.28,817.52 1563.60,817.69 1563.92,817.86 1564.24,818.02 1564.57,818.17 1564.89,818.32 1565.21,818.45 1565.53,818.57 1565.85,818.68 1566.18,818.77 1566.50,818.85 1566.82,818.91 1567.14,818.96 1567.46,818.99 1567.79,819.00 1568.11,819.00 1568.43,818.98 1568.75,818.95 1569.07,818.91 1569.39,818.85 1569.72,818.78 1570.04,818.71 1570.36,818.62 1570.68,818.54 1571.00,818.44 1571.33,818.35 1571.65,818.25 1571.97,818.15 1572.29,818.05 1572.61,817.95 1572.94,817.86 1573.26,817.78 1573.58,817.71 1573.90,817.65 1574.22,817.61 1574.55,817.57 1574.87,817.55 1575.19,817.54 1575.51,817.55 1575.83,817.57 1576.16,817.60 1576.48,817.65 1576.80,817.71 1577.12,817.79 1577.44,817.87 1577.77,817.97 1578.09,818.08 1578.41,818.19 1578.73,818.31 1579.05,818.44 1579.38,818.57 1579.70,818.70 1580.02,818.83 1580.34,818.95 1580.66,819.07 1580.99,819.19 1581.31,819.30 1581.63,819.41 1581.95,819.50 1582.27,819.59 1582.60,819.67 1582.92,819.74 1583.24,819.80 1583.56,819.84 1583.88,819.88 1584.21,819.90 1584.53,819.91 1584.85,819.91 1585.17,819.90 1585.49,819.88 1585.81,819.85 1586.14,819.81 1586.46,819.77 1586.78,819.71 1587.10,819.66 1587.42,819.59 1587.75,819.53 1588.07,819.46 1588.39,819.39 1588.71,819.32 1589.03,819.24 1589.36,819.18 1589.68,819.11 1590.00,819.05 1590.32,819.00 1590.64,818.96 1590.97,818.92 1591.29,818.89 1591.61,818.88 1591.93,818.87 1592.25,818.87 1592.58,818.89 1592.90,818.91 1593.22,818.94 1593.54,818.98 1593.86,819.04 1594.19,819.10 1594.51,819.16 1594.83,819.24 1595.15,819.32 1595.47,819.41 1595.80,819.49 1596.12,819.59 1596.44,819.68 1596.76,819.77 1597.08,819.86 1597.41,819.95 1597.73,820.04 1598.05,820.12 1598.37,820.19 1598.69,820.26 1599.02,820.33 1599.34,820.38 1599.66,820.43 1599.98,820.48 1600.30,820.51 1600.63,820.54 1600.95,820.55 1601.27,820.56 1601.59,820.57 1601.91,820.56 1602.24,820.55 1602.56,820.53 1602.88,820.50 1603.20,820.47 1603.52,820.43 1603.84,820.39 1604.17,820.34 1604.49,820.30 1604.81,820.25 1605.13,820.20 1605.45,820.15 1605.78,820.10 1606.10,820.05 1606.42,820.00 1606.74,819.96 1607.06,819.92 1607.39,819.89 1607.71,819.86 1608.03,819.84 1608.35,819.83 1608.67,819.82 1609.00,819.82 1609.32,819.83 1609.64,819.84 1609.96,819.87 1610.28,819.90 1610.61,819.93 1610.93,819.97 1611.25,820.02" fill="none" stroke="#1f77b4" stroke-width="2.9" stroke-linejoin="round" stroke-linecap="butt"/>
<polyline clip-path="url(#c142)" points="1385.88,685.41 1386.20,679.63 1386.52,674.20 1386.84,669.10 1387.16,664.32 1387.49,659.88 1387.81,655.80 1388.13,652.11 1388.45,648.83 1388.77,645.99 1389.10,643.62 1389.42,641.73 1389.74,640.35 1390.06,639.50 1390.38,639.17 1390.71,639.38 1391.03,640.11 1391.35,641.36 1391.67,643.12 1391.99,645.36 1392.32,648.06 1392.64,651.19 1392.96,654.72 1393.28,658.59 1393.60,662.77 1393.93,667.22 1394.25,671.86 1394.57,676.66 1394.89,681.54 1395.21,686.46 1395.54,691.35 1395.86,696.16 1396.18,700.82 1396.50,705.28 1396.82,709.49 1397.15,713.40 1397.47,716.97 1397.79,720.17 1398.11,722.96 1398.43,725.31 1398.75,727.22 1399.08,728.67 1399.40,729.65 1399.72,730.18 1400.04,730.25 1400.36,729.89 1400.69,729.11 1401.01,727.95 1401.33,726.43 1401.65,724.60 1401.97,722.49 1402.30,720.15 1402.62,717.64 1402.94,714.99 1403.26,712.26 1403.58,709.50 1403.91,706.75 1404.23,704.08 1404.55,701.53 1404.87,699.14 1405.19,696.96 1405.52,695.02 1405.84,693.37 1406.16,692.02 1406.48,691.02 1406.80,690.37 1407.13,690.09 1407.45,690.19 1407.77,690.68 1408.09,691.55 1408.41,692.79 1408.74,694.40 1409.06,696.35 1409.38,698.61 1409.70,701.18 1410.02,704.00 1410.35,707.05 1410.67,710.29 1410.99,713.67 1411.31,717.17 1411.63,720.73 1411.96,724.31 1412.28,727.87 1412.60,731.36 1412.92,734.75 1413.24,738.00 1413.57,741.07 1413.89,743.92 1414.21,746.53 1414.53,748.88 1414.85,750.93 1415.18,752.67 1415.50,754.10 1415.82,755.19 1416.14,755.95 1416.46,756.39 1416.78,756.49 1417.11,756.28 1417.43,755.78 1417.75,754.99 1418.07,753.95 1418.39,752.68 1418.72,751.20 1419.04,749.56 1419.36,747.78 1419.68,745.90 1420.00,743.96 1420.33,741.98 1420.65,740.02 1420.97,738.10 1421.29,736.26 1421.61,734.53 1421.94,732.94 1422.26,731.52 1422.58,730.31 1422.90,729.31 1423.22,728.54 1423.55,728.03 1423.87,727.79 1424.19,727.82 1424.51,728.12 1424.83,728.69 1425.16,729.54 1425.48,730.64 1425.80,731.99 1426.12,733.58 1426.44,735.37 1426.77,737.36 1427.09,739.51 1427.41,741.81 1427.73,744.21 1428.05,746.70 1428.38,749.24 1428.70,751.80 1429.02,754.34 1429.34,756.85 1429.66,759.29 1429.99,761.63 1430.31,763.85 1430.63,765.92 1430.95,767.81 1431.27,769.52 1431.60,771.03 1431.92,772.31 1432.24,773.37 1432.56,774.19 1432.88,774.78 1433.20,775.12 1433.53,775.24 1433.85,775.13 1434.17,774.80 1434.49,774.27 1434.81,773.56 1435.14,772.68 1435.46,771.65 1435.78,770.49 1436.10,769.23 1436.42,767.90 1436.75,766.52 1437.07,765.11 1437.39,763.70 1437.71,762.32 1438.03,760.99 1438.36,759.74 1438.68,758.59 1439.00,757.55 1439.32,756.66 1439.64,755.92 1439.97,755.34 1440.29,754.95 1440.61,754.74 1440.93,754.72 1441.25,754.91 1441.58,755.28 1441.90,755.85 1442.22,756.61 1442.54,757.55 1442.86,758.65 1443.19,759.91 1443.51,761.31 1443.83,762.83 1444.15,764.45 1444.47,766.16 1444.80,767.93 1445.12,769.74 1445.44,771.57 1445.76,773.39 1446.08,775.19 1446.41,776.94 1446.73,778.63 1447.05,780.23 1447.37,781.73 1447.69,783.11 1448.02,784.35 1448.34,785.45 1448.66,786.40 1448.98,787.18 1449.30,787.80 1449.63,788.24 1449.95,788.52 1450.27,788.63 1450.59,788.58 1450.91,788.37 1451.23,788.02 1451.56,787.53 1451.88,786.92 1452.20,786.20 1452.52,785.39 1452.84,784.50 1453.17,783.56 1453.49,782.57 1453.81,781.57 1454.13,780.56 1454.45,779.57 1454.78,778.61 1455.10,777.71 1455.42,776.87 1455.74,776.11 1456.06,775.46 1456.39,774.91 1456.71,774.47 1457.03,774.17 1457.35,774.00 1457.67,773.96 1458.00,774.07 1458.32,774.32 1458.64,774.70 1458.96,775.22 1459.28,775.87 1459.61,776.64 1459.93,777.52 1460.25,778.50 1460.57,779.58 1460.89,780.72 1461.22,781.93 1461.54,783.19 1461.86,784.48 1462.18,785.79 1462.50,787.09 1462.83,788.38 1463.15,789.64 1463.47,790.86 1463.79,792.01 1464.11,793.10 1464.44,794.10 1464.76,795.00 1465.08,795.81 1465.40,796.50 1465.72,797.08 1466.05,797.54 1466.37,797.88 1466.69,798.10 1467.01,798.20 1467.33,798.19 1467.65,798.06 1467.98,797.82 1468.30,797.49 1468.62,797.06 1468.94,796.56 1469.26,795.99 1469.59,795.37 1469.91,794.70 1470.23,794.00 1470.55,793.28 1470.87,792.56 1471.20,791.85 1471.52,791.16 1471.84,790.51 1472.16,789.90 1472.48,789.35 1472.81,788.87 1473.13,788.46 1473.45,788.14 1473.77,787.90 1474.09,787.76 1474.42,787.72 1474.74,787.78 1475.06,787.94 1475.38,788.20 1475.70,788.55 1476.03,789.00 1476.35,789.54 1476.67,790.15 1476.99,790.84 1477.31,791.60 1477.64,792.41 1477.96,793.27 1478.28,794.16 1478.60,795.08 1478.92,796.01 1479.25,796.95 1479.57,797.87 1479.89,798.78 1480.21,799.65 1480.53,800.49 1480.86,801.27 1481.18,802.00 1481.50,802.66 1481.82,803.24 1482.14,803.75 1482.47,804.18 1482.79,804.53 1483.11,804.79 1483.43,804.96 1483.75,805.04 1484.07,805.04 1484.40,804.96 1484.72,804.81 1485.04,804.58 1485.36,804.29 1485.68,803.94 1486.01,803.54 1486.33,803.10 1486.65,802.63 1486.97,802.13 1487.29,801.62 1487.62,801.10 1487.94,800.59 1488.26,800.10 1488.58,799.63 1488.90,799.18 1489.23,798.78 1489.55,798.43 1489.87,798.13 1490.19,797.89 1490.51,797.71 1490.84,797.60 1491.16,797.56 1491.48,797.59 1491.80,797.69 1492.12,797.86 1492.45,798.10 1492.77,798.41 1493.09,798.78 1493.41,799.22 1493.73,799.70 1494.06,800.23 1494.38,800.81 1494.70,801.42 1495.02,802.05 1495.34,802.71 1495.67,803.37 1495.99,804.04 1496.31,804.70 1496.63,805.35 1496.95,805.98 1497.28,806.58 1497.60,807.15 1497.92,807.67 1498.24,808.15 1498.56,808.58 1498.89,808.96 1499.21,809.27 1499.53,809.53 1499.85,809.73 1500.17,809.86 1500.50,809.93 1500.82,809.94 1501.14,809.89 1501.46,809.79 1501.78,809.64 1502.10,809.44 1502.43,809.19 1502.75,808.91 1503.07,808.60 1503.39,808.27 1503.71,807.92 1504.04,807.55 1504.36,807.18 1504.68,806.82 1505.00,806.46 1505.32,806.12 1505.65,805.80 1505.97,805.51 1506.29,805.25 1506.61,805.03 1506.93,804.85 1507.26,804.71 1507.58,804.63 1507.90,804.59 1508.22,804.60 1508.54,804.66 1508.87,804.78 1509.19,804.94 1509.51,805.16 1509.83,805.41 1510.15,805.72 1510.48,806.06 1510.80,806.43 1511.12,806.84 1511.44,807.27 1511.76,807.72 1512.09,808.19 1512.41,808.66 1512.73,809.14 1513.05,809.61 1513.37,810.08 1513.70,810.53 1514.02,810.96 1514.34,811.37 1514.66,811.76 1514.98,812.10 1515.31,812.42 1515.63,812.69 1515.95,812.93 1516.27,813.12 1516.59,813.26 1516.92,813.37 1517.24,813.43 1517.56,813.44 1517.88,813.41 1518.20,813.35 1518.52,813.24 1518.85,813.11 1519.17,812.94 1519.49,812.74 1519.81,812.52 1520.13,812.28 1520.46,812.03 1520.78,811.78 1521.10,811.51 1521.42,811.25 1521.74,810.99 1522.07,810.75 1522.39,810.52 1522.71,810.31 1523.03,810.12 1523.35,809.95 1523.68,809.82 1524.00,809.72 1524.32,809.65 1524.64,809.61 1524.96,809.62 1525.29,809.66 1525.61,809.73 1525.93,809.84 1526.25,809.99 1526.57,810.17 1526.90,810.38 1527.22,810.62 1527.54,810.88 1527.86,811.17 1528.18,811.47 1528.51,811.80 1528.83,812.13 1529.15,812.46 1529.47,812.81 1529.79,813.15 1530.12,813.48 1530.44,813.81 1530.76,814.12 1531.08,814.41 1531.40,814.69 1531.73,814.94 1532.05,815.17 1532.37,815.37 1532.69,815.55 1533.01,815.69 1533.34,815.80 1533.66,815.88 1533.98,815.92 1534.30,815.94 1534.62,815.93 1534.94,815.88 1535.27,815.81 1535.59,815.72 1535.91,815.60 1536.23,815.46 1536.55,815.31 1536.88,815.14 1537.20,814.97 1537.52,814.78 1537.84,814.59 1538.16,814.41 1538.49,814.22 1538.81,814.04 1539.13,813.88 1539.45,813.72 1539.77,813.59 1540.10,813.47 1540.42,813.37 1540.74,813.29 1541.06,813.24 1541.38,813.21 1541.71,813.20 1542.03,813.23 1542.35,813.28 1542.67,813.35 1542.99,813.45 1543.32,813.58 1543.64,813.72 1543.96,813.89 1544.28,814.08 1544.60,814.28 1544.93,814.50 1545.25,814.72 1545.57,814.96 1545.89,815.20 1546.21,815.44 1546.54,815.69 1546.86,815.93 1547.18,816.16 1547.50,816.39 1547.82,816.60 1548.15,816.80 1548.47,816.98 1548.79,817.15 1549.11,817.30 1549.43,817.42 1549.76,817.53 1550.08,817.61 1550.40,817.67 1550.72,817.71 1551.04,817.72 1551.37,817.72 1551.69,817.69 1552.01,817.64 1552.33,817.58 1552.65,817.50 1552.97,817.40 1553.30,817.30 1553.62,817.18 1553.94,817.05 1554.26,816.92 1554.58,816.79 1554.91,816.65 1555.23,816.52 1555.55,816.39 1555.87,816.27 1556.19,816.16 1556.52,816.06 1556.84,815.97 1557.16,815.90 1557.48,815.84 1557.80,815.80 1558.13,815.77 1558.45,815.77 1558.77,815.78 1559.09,815.82 1559.41,815.87 1559.74,815.93 1560.06,816.02 1560.38,816.12 1560.70,816.24 1561.02,816.37 1561.35,816.51 1561.67,816.67 1561.99,816.83 1562.31,817.00 1562.63,817.17 1562.96,817.34 1563.28,817.52 1563.60,817.69 1563.92,817.86 1564.24,818.02 1564.57,818.17 1564.89,818.32 1565.21,818.45 1565.53,818.57 1565.85,818.68 1566.18,818.77 1566.50,818.85 1566.82,818.91 1567.14,818.96 1567.46,818.99 1567.79,819.00 1568.11,819.00 1568.43,818.98 1568.75,818.95 1569.07,818.91 1569.39,818.85 1569.72,818.78 1570.04,818.71 1570.36,818.62 1570.68,818.54 1571.00,818.44 1571.33,818.35 1571.65,818.25 1571.97,818.16 1572.29,818.06 1572.61,817.98 1572.94,817.90 1573.26,817.82 1573.58,817.76 1573.90,817.70 1574.22,817.66 1574.55,817.63 1574.87,817.61 1575.19,817.60 1575.51,817.61 1575.83,817.63 1576.16,817.67 1576.48,817.71 1576.80,817.77 1577.12,817.84 1577.44,817.93 1577.77,818.02 1578.09,818.12 1578.41,818.23 1578.73,818.34 1579.05,818.46 1579.38,818.58 1579.70,818.71 1580.02,818.83 1580.34,818.95 1580.66,819.07 1580.99,819.19 1581.31,819.30 1581.63,819.41 1581.95,819.50 1582.27,819.59 1582.60,819.67 1582.92,819.74 1583.24,819.80 1583.56,819.84 1583.88,819.88 1584.21,819.90 1584.53,819.91 1584.85,819.91 1585.17,819.90 1585.49,819.88 1585.81,819.85 1586.14,819.81 1586.46,819.77 1586.78,819.71 1587.10,819.66 1587.42,819.59 1587.75,819.53 1588.07,819.46 1588.39,819.39 1588.71,819.32 1589.03,819.26 1589.36,819.19 1589.68,819.13 1590.00,819.08 1590.32,819.03 1590.64,818.99 1590.97,818.96 1591.29,818.94 1591.61,818.92 1591.93,818.91 1592.25,818.92 1592.58,818.93 1592.90,818.95 1593.22,818.99 1593.54,819.03 1593.86,819.08 1594.19,819.13 1594.51,819.20 1594.83,819.27 1595.15,819.35 1595.47,819.43 1595.80,819.51 1596.12,819.60 1596.44,819.69 1596.76,819.78 1597.08,819.86 1597.41,819.95 1597.73,820.04 1598.05,820.12 1598.37,820.19 1598.69,820.26 1599.02,820.33 1599.34,820.38 1599.66,820.43 1599.98,820.48 1600.30,820.51 1600.63,820.54 1600.95,820.55 1601.27,820.56 1601.59,820.57 1601.91,820.56 1602.24,820.55 1602.56,820.53 1602.88,820.50 1603.20,820.47 1603.52,820.43 1603.84,820.39 1604.17,820.34 1604.49,820.30 1604.81,820.25 1605.13,820.20 1605.45,820.15 1605.78,820.10 1606.10,820.06 1606.42,820.01 1606.74,819.98 1607.06,819.94 1607.39,819.91 1607.71,819.89 1608.03,819.87 1608.35,819.86 1608.67,819.85 1609.00,819.85 1609.32,819.86 1609.64,819.88 1609.96,819.90 1610.28,819.93 1610.61,819.96 1610.93,820.00 1611.25,820.05" fill="none" stroke="#ff7f0e" stroke-width="2.9" stroke-linejoin="round" stroke-linecap="butt"/>
<line x1="1383.60" y1="857.35" x2="1383.60" y2="866.95" stroke="#000" stroke-width="1.6"/>
<text x="1383.80" y="884.95" font-size="15" letter-spacing="0.45" text-anchor="middle" fill="#111">0.0</text>
<line x1="1440.51" y1="857.35" x2="1440.51" y2="866.95" stroke="#000" stroke-width="1.6"/>
<text x="1440.71" y="884.95" font-size="15" letter-spacing="0.45" text-anchor="middle" fill="#111">2.5</text>
<line x1="1497.42" y1="857.35" x2="1497.42" y2="866.95" stroke="#000" stroke-width="1.6"/>
<text x="1497.62" y="884.95" font-size="15" letter-spacing="0.45" text-anchor="middle" fill="#111">5.0</text>
<line x1="1554.34" y1="857.35" x2="1554.34" y2="866.95" stroke="#000" stroke-width="1.6"/>
<text x="1554.54" y="884.95" font-size="15" letter-spacing="0.45" text-anchor="middle" fill="#111">7.5</text>
<line x1="1611.25" y1="857.35" x2="1611.25" y2="866.95" stroke="#000" stroke-width="1.6"/>
<text x="1611.45" y="884.95" font-size="15" letter-spacing="0.45" text-anchor="middle" fill="#111">10.0</text>
<line x1="1374.0" y1="856.05" x2="1383.6" y2="856.05" stroke="#000" stroke-width="1.6"/>
<text x="1367.45" y="862.75" font-size="15" letter-spacing="0.7" text-anchor="end" fill="#111">−20000</text>
<line x1="1374.0" y1="822.20" x2="1383.6" y2="822.20" stroke="#000" stroke-width="1.6"/>
<text x="1367.45" y="828.90" font-size="15" letter-spacing="0.7" text-anchor="end" fill="#111">0</text>
<line x1="1374.0" y1="788.35" x2="1383.6" y2="788.35" stroke="#000" stroke-width="1.6"/>
<text x="1367.45" y="795.05" font-size="15" letter-spacing="0.7" text-anchor="end" fill="#111">20000</text>
<line x1="1374.0" y1="754.50" x2="1383.6" y2="754.50" stroke="#000" stroke-width="1.6"/>
<text x="1367.45" y="761.20" font-size="15" letter-spacing="0.7" text-anchor="end" fill="#111">40000</text>
<line x1="1374.0" y1="720.65" x2="1383.6" y2="720.65" stroke="#000" stroke-width="1.6"/>
<text x="1367.45" y="727.35" font-size="15" letter-spacing="0.7" text-anchor="end" fill="#111">60000</text>
<line x1="1374.0" y1="686.80" x2="1383.6" y2="686.80" stroke="#000" stroke-width="1.6"/>
<text x="1367.45" y="693.50" font-size="15" letter-spacing="0.7" text-anchor="end" fill="#111">80000</text>
<line x1="1374.0" y1="652.95" x2="1383.6" y2="652.95" stroke="#000" stroke-width="1.6"/>
<text x="1367.45" y="659.65" font-size="15" letter-spacing="0.7" text-anchor="end" fill="#111">100000</text>
<line x1="1374.0" y1="619.10" x2="1383.6" y2="619.10" stroke="#000" stroke-width="1.6"/>
<text x="1367.45" y="625.80" font-size="15" letter-spacing="0.7" text-anchor="end" fill="#111">120000</text>
<rect x="1383.6" y="599.4" width="227.6500000000001" height="257.95000000000005" fill="none" stroke="#000" stroke-width="1.6"/>
<text x="1497.42" y="589.90" font-size="19.1" text-anchor="middle" fill="#111">fwd</text>
<text x="1497.42" y="907.65" font-size="15" letter-spacing="0.4" text-anchor="middle" fill="#111">Time (<tspan font-style="italic">µs</tspan>)</text>
<text transform="translate(1293.00,728.38) rotate(-90)" font-size="15" letter-spacing="0.35" text-anchor="middle" fill="#111">Counts</text>
<rect x="1406.4" y="603" width="200.5999999999999" height="27.399999999999977" rx="1.5" fill="#fff" fill-opacity="0.8" stroke="#ccc" stroke-width="1"/>
<line x1="1409.10" y1="609.80" x2="1427.40" y2="609.80" stroke="#1f77b4" stroke-width="2.4"/>
<text x="1432.00" y="613.00" font-size="8.9" fill="#111" style="font-family:'DejaVu Sans Condensed','DejaVu Sans',sans-serif">62260 top</text>
<line x1="1409.10" y1="622.30" x2="1427.40" y2="622.30" stroke="#ff7f0e" stroke-width="2.4"/>
<text x="1432.00" y="625.50" font-size="8.9" fill="#111" style="font-family:'DejaVu Sans Condensed','DejaVu Sans',sans-serif">62260 fwd ;MaxEnt_reconstructed_spectra</text>
<clipPath id="c180"><rect x="1749.2" y="599.4" width="228.89999999999986" height="257.95000000000005"/></clipPath>
<line x1="1749.20" y1="857.35" x2="1749.20" y2="866.95" stroke="#000" stroke-width="1.6"/>
<text x="1749.40" y="884.95" font-size="15" letter-spacing="0.45" text-anchor="middle" fill="#111">0.0</text>
<line x1="1806.42" y1="857.35" x2="1806.42" y2="866.95" stroke="#000" stroke-width="1.6"/>
<text x="1806.62" y="884.95" font-size="15" letter-spacing="0.45" text-anchor="middle" fill="#111">2.5</text>
<line x1="1863.65" y1="857.35" x2="1863.65" y2="866.95" stroke="#000" stroke-width="1.6"/>
<text x="1863.85" y="884.95" font-size="15" letter-spacing="0.45" text-anchor="middle" fill="#111">5.0</text>
<line x1="1920.88" y1="857.35" x2="1920.88" y2="866.95" stroke="#000" stroke-width="1.6"/>
<text x="1921.08" y="884.95" font-size="15" letter-spacing="0.45" text-anchor="middle" fill="#111">7.5</text>
<line x1="1978.10" y1="857.35" x2="1978.10" y2="866.95" stroke="#000" stroke-width="1.6"/>
<text x="1978.30" y="884.95" font-size="15" letter-spacing="0.45" text-anchor="middle" fill="#111">10.0</text>
<line x1="1739.6000000000001" y1="857.35" x2="1749.2" y2="857.35" stroke="#000" stroke-width="1.6"/>
<text x="1733.05" y="864.05" font-size="15" letter-spacing="0.7" text-anchor="end" fill="#111">0</text>
<line x1="1739.6000000000001" y1="805.76" x2="1749.2" y2="805.76" stroke="#000" stroke-width="1.6"/>
<text x="1733.05" y="812.46" font-size="15" letter-spacing="0.7" text-anchor="end" fill="#111">200000</text>
<line x1="1739.6000000000001" y1="754.17" x2="1749.2" y2="754.17" stroke="#000" stroke-width="1.6"/>
<text x="1733.05" y="760.87" font-size="15" letter-spacing="0.7" text-anchor="end" fill="#111">400000</text>
<line x1="1739.6000000000001" y1="702.58" x2="1749.2" y2="702.58" stroke="#000" stroke-width="1.6"/>
<text x="1733.05" y="709.28" font-size="15" letter-spacing="0.7" text-anchor="end" fill="#111">600000</text>
<line x1="1739.6000000000001" y1="650.99" x2="1749.2" y2="650.99" stroke="#000" stroke-width="1.6"/>
<text x="1733.05" y="657.69" font-size="15" letter-spacing="0.7" text-anchor="end" fill="#111">800000</text>
<line x1="1739.6000000000001" y1="599.40" x2="1749.2" y2="599.40" stroke="#000" stroke-width="1.6"/>
<text x="1733.05" y="606.10" font-size="15" letter-spacing="0.7" text-anchor="end" fill="#111">1000000</text>
<rect x="1749.2" y="599.4" width="228.89999999999986" height="257.95000000000005" fill="none" stroke="#000" stroke-width="1.6"/>
</svg>
</body></html>
